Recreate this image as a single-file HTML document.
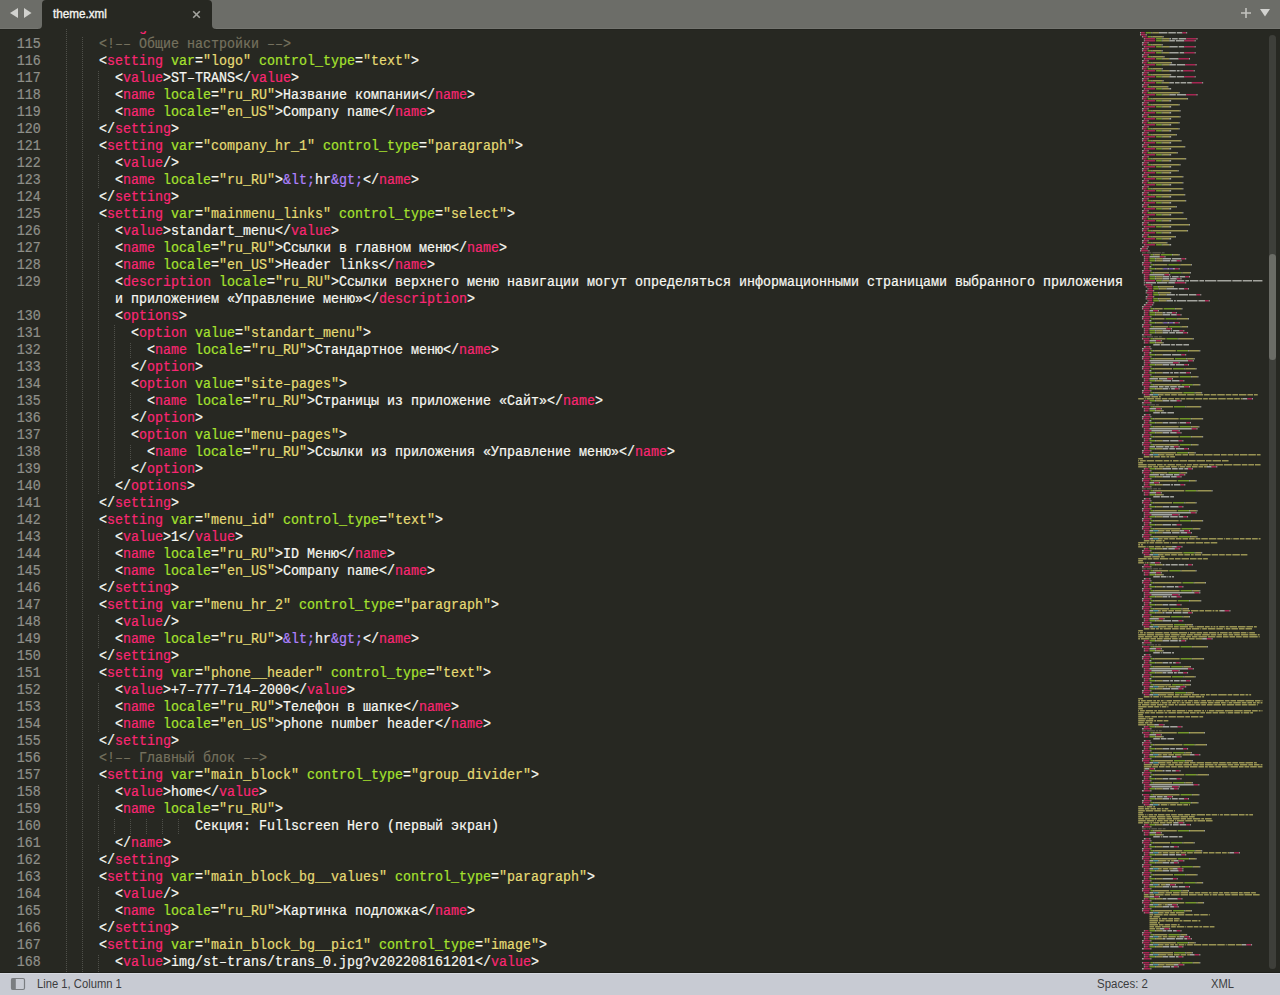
<!DOCTYPE html>
<html><head><meta charset="utf-8">
<style>
html,body{margin:0;padding:0;}
body{width:1280px;height:995px;overflow:hidden;position:relative;background:#272822;}
#tabbar{position:absolute;left:0;top:0;width:1280px;height:29px;background:#272822;}
#tbl{position:absolute;left:0;top:0;width:42px;height:29px;background:#6c6d68;border-bottom-right-radius:4px;}
#tbr{position:absolute;left:212px;top:0;width:1068px;height:29px;background:#6c6d68;border-bottom-left-radius:4px;}
#tbt{position:absolute;left:38px;top:0;width:178px;height:8px;background:#6c6d68;}
#tab{position:absolute;left:42px;top:0;width:170px;height:29px;background:#272822;border-top-left-radius:4px;border-top-right-radius:4px;}
#tabtitle{position:absolute;left:53px;top:6px;transform:scaleX(0.975);transform-origin:0 0;font:12px/17px "Liberation Sans",sans-serif;color:#f4f4f0;-webkit-text-stroke:0.35px #f4f4f0;}
#code{position:absolute;left:0;top:31px;width:1280px;height:941px;overflow:hidden;}
.ln{position:absolute;left:16px;width:24px;height:17px;text-align:right;color:#8f908a;}
.cl{position:absolute;white-space:pre;height:17px;}
.ln,.cl{font-family:"Liberation Mono",monospace;font-size:13.8px;line-height:17px;margin-top:-31px;transform:scaleX(0.9661);transform-origin:0 0;-webkit-text-stroke:0.2px currentColor;}
.ln{transform-origin:100% 0;}
#status{position:absolute;left:0;top:972px;width:1280px;height:23px;background:#c8cbd3;}
#status .t{position:absolute;top:4px;font:12px/17px "Liberation Sans",sans-serif;color:#3c3d40;}
</style></head><body>
<div id="code">
<div class="ln" style="top:19px">114</div>
<div class="cl" style="top:19px;left:66.5px"><span style="color:#f8f8f2">  &lt;</span><span style="color:#f92672">settings</span><span style="color:#f8f8f2">&gt;</span></div>
<div class="ln" style="top:36px">115</div>
<div class="cl" style="top:36px;left:66.5px"><span style="color:#f8f8f2">    </span><span style="color:#75715e">&lt;!–– Общие настройки ––&gt;</span></div>
<div class="ln" style="top:53px">116</div>
<div class="cl" style="top:53px;left:66.5px"><span style="color:#f8f8f2">    &lt;</span><span style="color:#f92672">setting</span><span style="color:#f8f8f2"> </span><span style="color:#a6e22e">var</span><span style="color:#f8f8f2">=</span><span style="color:#e6db74">"logo"</span><span style="color:#f8f8f2"> </span><span style="color:#a6e22e">control_type</span><span style="color:#f8f8f2">=</span><span style="color:#e6db74">"text"</span><span style="color:#f8f8f2">&gt;</span></div>
<div class="ln" style="top:70px">117</div>
<div class="cl" style="top:70px;left:66.5px"><span style="color:#f8f8f2">      &lt;</span><span style="color:#f92672">value</span><span style="color:#f8f8f2">&gt;ST–TRANS&lt;/</span><span style="color:#f92672">value</span><span style="color:#f8f8f2">&gt;</span></div>
<div class="ln" style="top:87px">118</div>
<div class="cl" style="top:87px;left:66.5px"><span style="color:#f8f8f2">      &lt;</span><span style="color:#f92672">name</span><span style="color:#f8f8f2"> </span><span style="color:#a6e22e">locale</span><span style="color:#f8f8f2">=</span><span style="color:#e6db74">"ru_RU"</span><span style="color:#f8f8f2">&gt;Название компании&lt;/</span><span style="color:#f92672">name</span><span style="color:#f8f8f2">&gt;</span></div>
<div class="ln" style="top:104px">119</div>
<div class="cl" style="top:104px;left:66.5px"><span style="color:#f8f8f2">      &lt;</span><span style="color:#f92672">name</span><span style="color:#f8f8f2"> </span><span style="color:#a6e22e">locale</span><span style="color:#f8f8f2">=</span><span style="color:#e6db74">"en_US"</span><span style="color:#f8f8f2">&gt;Company name&lt;/</span><span style="color:#f92672">name</span><span style="color:#f8f8f2">&gt;</span></div>
<div class="ln" style="top:121px">120</div>
<div class="cl" style="top:121px;left:66.5px"><span style="color:#f8f8f2">    &lt;/</span><span style="color:#f92672">setting</span><span style="color:#f8f8f2">&gt;</span></div>
<div class="ln" style="top:138px">121</div>
<div class="cl" style="top:138px;left:66.5px"><span style="color:#f8f8f2">    &lt;</span><span style="color:#f92672">setting</span><span style="color:#f8f8f2"> </span><span style="color:#a6e22e">var</span><span style="color:#f8f8f2">=</span><span style="color:#e6db74">"company_hr_1"</span><span style="color:#f8f8f2"> </span><span style="color:#a6e22e">control_type</span><span style="color:#f8f8f2">=</span><span style="color:#e6db74">"paragraph"</span><span style="color:#f8f8f2">&gt;</span></div>
<div class="ln" style="top:155px">122</div>
<div class="cl" style="top:155px;left:66.5px"><span style="color:#f8f8f2">      &lt;</span><span style="color:#f92672">value</span><span style="color:#f8f8f2">/&gt;</span></div>
<div class="ln" style="top:172px">123</div>
<div class="cl" style="top:172px;left:66.5px"><span style="color:#f8f8f2">      &lt;</span><span style="color:#f92672">name</span><span style="color:#f8f8f2"> </span><span style="color:#a6e22e">locale</span><span style="color:#f8f8f2">=</span><span style="color:#e6db74">"ru_RU"</span><span style="color:#f8f8f2">&gt;</span><span style="color:#ae81ff">&amp;lt;</span><span style="color:#f8f8f2">hr</span><span style="color:#ae81ff">&amp;gt;</span><span style="color:#f8f8f2">&lt;/</span><span style="color:#f92672">name</span><span style="color:#f8f8f2">&gt;</span></div>
<div class="ln" style="top:189px">124</div>
<div class="cl" style="top:189px;left:66.5px"><span style="color:#f8f8f2">    &lt;/</span><span style="color:#f92672">setting</span><span style="color:#f8f8f2">&gt;</span></div>
<div class="ln" style="top:206px">125</div>
<div class="cl" style="top:206px;left:66.5px"><span style="color:#f8f8f2">    &lt;</span><span style="color:#f92672">setting</span><span style="color:#f8f8f2"> </span><span style="color:#a6e22e">var</span><span style="color:#f8f8f2">=</span><span style="color:#e6db74">"mainmenu_links"</span><span style="color:#f8f8f2"> </span><span style="color:#a6e22e">control_type</span><span style="color:#f8f8f2">=</span><span style="color:#e6db74">"select"</span><span style="color:#f8f8f2">&gt;</span></div>
<div class="ln" style="top:223px">126</div>
<div class="cl" style="top:223px;left:66.5px"><span style="color:#f8f8f2">      &lt;</span><span style="color:#f92672">value</span><span style="color:#f8f8f2">&gt;standart_menu&lt;/</span><span style="color:#f92672">value</span><span style="color:#f8f8f2">&gt;</span></div>
<div class="ln" style="top:240px">127</div>
<div class="cl" style="top:240px;left:66.5px"><span style="color:#f8f8f2">      &lt;</span><span style="color:#f92672">name</span><span style="color:#f8f8f2"> </span><span style="color:#a6e22e">locale</span><span style="color:#f8f8f2">=</span><span style="color:#e6db74">"ru_RU"</span><span style="color:#f8f8f2">&gt;Ссылки в главном меню&lt;/</span><span style="color:#f92672">name</span><span style="color:#f8f8f2">&gt;</span></div>
<div class="ln" style="top:257px">128</div>
<div class="cl" style="top:257px;left:66.5px"><span style="color:#f8f8f2">      &lt;</span><span style="color:#f92672">name</span><span style="color:#f8f8f2"> </span><span style="color:#a6e22e">locale</span><span style="color:#f8f8f2">=</span><span style="color:#e6db74">"en_US"</span><span style="color:#f8f8f2">&gt;Header links&lt;/</span><span style="color:#f92672">name</span><span style="color:#f8f8f2">&gt;</span></div>
<div class="ln" style="top:274px">129</div>
<div class="cl" style="top:274px;left:66.5px"><span style="color:#f8f8f2">      &lt;</span><span style="color:#f92672">description</span><span style="color:#f8f8f2"> </span><span style="color:#a6e22e">locale</span><span style="color:#f8f8f2">=</span><span style="color:#e6db74">"ru_RU"</span><span style="color:#f8f8f2">&gt;Ссылки верхнего меню навигации могут определяться информационными страницами выбранного приложения </span></div>
<div class="cl" style="top:291px;left:114.5px"><span style="color:#f8f8f2">и приложением «Управление меню»&lt;/</span><span style="color:#f92672">description</span><span style="color:#f8f8f2">&gt;</span></div>
<div class="ln" style="top:308px">130</div>
<div class="cl" style="top:308px;left:66.5px"><span style="color:#f8f8f2">      &lt;</span><span style="color:#f92672">options</span><span style="color:#f8f8f2">&gt;</span></div>
<div class="ln" style="top:325px">131</div>
<div class="cl" style="top:325px;left:66.5px"><span style="color:#f8f8f2">        &lt;</span><span style="color:#f92672">option</span><span style="color:#f8f8f2"> </span><span style="color:#a6e22e">value</span><span style="color:#f8f8f2">=</span><span style="color:#e6db74">"standart_menu"</span><span style="color:#f8f8f2">&gt;</span></div>
<div class="ln" style="top:342px">132</div>
<div class="cl" style="top:342px;left:66.5px"><span style="color:#f8f8f2">          &lt;</span><span style="color:#f92672">name</span><span style="color:#f8f8f2"> </span><span style="color:#a6e22e">locale</span><span style="color:#f8f8f2">=</span><span style="color:#e6db74">"ru_RU"</span><span style="color:#f8f8f2">&gt;Стандартное меню&lt;/</span><span style="color:#f92672">name</span><span style="color:#f8f8f2">&gt;</span></div>
<div class="ln" style="top:359px">133</div>
<div class="cl" style="top:359px;left:66.5px"><span style="color:#f8f8f2">        &lt;/</span><span style="color:#f92672">option</span><span style="color:#f8f8f2">&gt;</span></div>
<div class="ln" style="top:376px">134</div>
<div class="cl" style="top:376px;left:66.5px"><span style="color:#f8f8f2">        &lt;</span><span style="color:#f92672">option</span><span style="color:#f8f8f2"> </span><span style="color:#a6e22e">value</span><span style="color:#f8f8f2">=</span><span style="color:#e6db74">"site–pages"</span><span style="color:#f8f8f2">&gt;</span></div>
<div class="ln" style="top:393px">135</div>
<div class="cl" style="top:393px;left:66.5px"><span style="color:#f8f8f2">          &lt;</span><span style="color:#f92672">name</span><span style="color:#f8f8f2"> </span><span style="color:#a6e22e">locale</span><span style="color:#f8f8f2">=</span><span style="color:#e6db74">"ru_RU"</span><span style="color:#f8f8f2">&gt;Страницы из приложение «Сайт»&lt;/</span><span style="color:#f92672">name</span><span style="color:#f8f8f2">&gt;</span></div>
<div class="ln" style="top:410px">136</div>
<div class="cl" style="top:410px;left:66.5px"><span style="color:#f8f8f2">        &lt;/</span><span style="color:#f92672">option</span><span style="color:#f8f8f2">&gt;</span></div>
<div class="ln" style="top:427px">137</div>
<div class="cl" style="top:427px;left:66.5px"><span style="color:#f8f8f2">        &lt;</span><span style="color:#f92672">option</span><span style="color:#f8f8f2"> </span><span style="color:#a6e22e">value</span><span style="color:#f8f8f2">=</span><span style="color:#e6db74">"menu–pages"</span><span style="color:#f8f8f2">&gt;</span></div>
<div class="ln" style="top:444px">138</div>
<div class="cl" style="top:444px;left:66.5px"><span style="color:#f8f8f2">          &lt;</span><span style="color:#f92672">name</span><span style="color:#f8f8f2"> </span><span style="color:#a6e22e">locale</span><span style="color:#f8f8f2">=</span><span style="color:#e6db74">"ru_RU"</span><span style="color:#f8f8f2">&gt;Ссылки из приложения «Управление меню»&lt;/</span><span style="color:#f92672">name</span><span style="color:#f8f8f2">&gt;</span></div>
<div class="ln" style="top:461px">139</div>
<div class="cl" style="top:461px;left:66.5px"><span style="color:#f8f8f2">        &lt;/</span><span style="color:#f92672">option</span><span style="color:#f8f8f2">&gt;</span></div>
<div class="ln" style="top:478px">140</div>
<div class="cl" style="top:478px;left:66.5px"><span style="color:#f8f8f2">      &lt;/</span><span style="color:#f92672">options</span><span style="color:#f8f8f2">&gt;</span></div>
<div class="ln" style="top:495px">141</div>
<div class="cl" style="top:495px;left:66.5px"><span style="color:#f8f8f2">    &lt;/</span><span style="color:#f92672">setting</span><span style="color:#f8f8f2">&gt;</span></div>
<div class="ln" style="top:512px">142</div>
<div class="cl" style="top:512px;left:66.5px"><span style="color:#f8f8f2">    &lt;</span><span style="color:#f92672">setting</span><span style="color:#f8f8f2"> </span><span style="color:#a6e22e">var</span><span style="color:#f8f8f2">=</span><span style="color:#e6db74">"menu_id"</span><span style="color:#f8f8f2"> </span><span style="color:#a6e22e">control_type</span><span style="color:#f8f8f2">=</span><span style="color:#e6db74">"text"</span><span style="color:#f8f8f2">&gt;</span></div>
<div class="ln" style="top:529px">143</div>
<div class="cl" style="top:529px;left:66.5px"><span style="color:#f8f8f2">      &lt;</span><span style="color:#f92672">value</span><span style="color:#f8f8f2">&gt;1&lt;/</span><span style="color:#f92672">value</span><span style="color:#f8f8f2">&gt;</span></div>
<div class="ln" style="top:546px">144</div>
<div class="cl" style="top:546px;left:66.5px"><span style="color:#f8f8f2">      &lt;</span><span style="color:#f92672">name</span><span style="color:#f8f8f2"> </span><span style="color:#a6e22e">locale</span><span style="color:#f8f8f2">=</span><span style="color:#e6db74">"ru_RU"</span><span style="color:#f8f8f2">&gt;ID Меню&lt;/</span><span style="color:#f92672">name</span><span style="color:#f8f8f2">&gt;</span></div>
<div class="ln" style="top:563px">145</div>
<div class="cl" style="top:563px;left:66.5px"><span style="color:#f8f8f2">      &lt;</span><span style="color:#f92672">name</span><span style="color:#f8f8f2"> </span><span style="color:#a6e22e">locale</span><span style="color:#f8f8f2">=</span><span style="color:#e6db74">"en_US"</span><span style="color:#f8f8f2">&gt;Company name&lt;/</span><span style="color:#f92672">name</span><span style="color:#f8f8f2">&gt;</span></div>
<div class="ln" style="top:580px">146</div>
<div class="cl" style="top:580px;left:66.5px"><span style="color:#f8f8f2">    &lt;/</span><span style="color:#f92672">setting</span><span style="color:#f8f8f2">&gt;</span></div>
<div class="ln" style="top:597px">147</div>
<div class="cl" style="top:597px;left:66.5px"><span style="color:#f8f8f2">    &lt;</span><span style="color:#f92672">setting</span><span style="color:#f8f8f2"> </span><span style="color:#a6e22e">var</span><span style="color:#f8f8f2">=</span><span style="color:#e6db74">"menu_hr_2"</span><span style="color:#f8f8f2"> </span><span style="color:#a6e22e">control_type</span><span style="color:#f8f8f2">=</span><span style="color:#e6db74">"paragraph"</span><span style="color:#f8f8f2">&gt;</span></div>
<div class="ln" style="top:614px">148</div>
<div class="cl" style="top:614px;left:66.5px"><span style="color:#f8f8f2">      &lt;</span><span style="color:#f92672">value</span><span style="color:#f8f8f2">/&gt;</span></div>
<div class="ln" style="top:631px">149</div>
<div class="cl" style="top:631px;left:66.5px"><span style="color:#f8f8f2">      &lt;</span><span style="color:#f92672">name</span><span style="color:#f8f8f2"> </span><span style="color:#a6e22e">locale</span><span style="color:#f8f8f2">=</span><span style="color:#e6db74">"ru_RU"</span><span style="color:#f8f8f2">&gt;</span><span style="color:#ae81ff">&amp;lt;</span><span style="color:#f8f8f2">hr</span><span style="color:#ae81ff">&amp;gt;</span><span style="color:#f8f8f2">&lt;/</span><span style="color:#f92672">name</span><span style="color:#f8f8f2">&gt;</span></div>
<div class="ln" style="top:648px">150</div>
<div class="cl" style="top:648px;left:66.5px"><span style="color:#f8f8f2">    &lt;/</span><span style="color:#f92672">setting</span><span style="color:#f8f8f2">&gt;</span></div>
<div class="ln" style="top:665px">151</div>
<div class="cl" style="top:665px;left:66.5px"><span style="color:#f8f8f2">    &lt;</span><span style="color:#f92672">setting</span><span style="color:#f8f8f2"> </span><span style="color:#a6e22e">var</span><span style="color:#f8f8f2">=</span><span style="color:#e6db74">"phone__header"</span><span style="color:#f8f8f2"> </span><span style="color:#a6e22e">control_type</span><span style="color:#f8f8f2">=</span><span style="color:#e6db74">"text"</span><span style="color:#f8f8f2">&gt;</span></div>
<div class="ln" style="top:682px">152</div>
<div class="cl" style="top:682px;left:66.5px"><span style="color:#f8f8f2">      &lt;</span><span style="color:#f92672">value</span><span style="color:#f8f8f2">&gt;+7–777–714–2000&lt;/</span><span style="color:#f92672">value</span><span style="color:#f8f8f2">&gt;</span></div>
<div class="ln" style="top:699px">153</div>
<div class="cl" style="top:699px;left:66.5px"><span style="color:#f8f8f2">      &lt;</span><span style="color:#f92672">name</span><span style="color:#f8f8f2"> </span><span style="color:#a6e22e">locale</span><span style="color:#f8f8f2">=</span><span style="color:#e6db74">"ru_RU"</span><span style="color:#f8f8f2">&gt;Телефон в шапке&lt;/</span><span style="color:#f92672">name</span><span style="color:#f8f8f2">&gt;</span></div>
<div class="ln" style="top:716px">154</div>
<div class="cl" style="top:716px;left:66.5px"><span style="color:#f8f8f2">      &lt;</span><span style="color:#f92672">name</span><span style="color:#f8f8f2"> </span><span style="color:#a6e22e">locale</span><span style="color:#f8f8f2">=</span><span style="color:#e6db74">"en_US"</span><span style="color:#f8f8f2">&gt;phone number header&lt;/</span><span style="color:#f92672">name</span><span style="color:#f8f8f2">&gt;</span></div>
<div class="ln" style="top:733px">155</div>
<div class="cl" style="top:733px;left:66.5px"><span style="color:#f8f8f2">    &lt;/</span><span style="color:#f92672">setting</span><span style="color:#f8f8f2">&gt;</span></div>
<div class="ln" style="top:750px">156</div>
<div class="cl" style="top:750px;left:66.5px"><span style="color:#f8f8f2">    </span><span style="color:#75715e">&lt;!–– Главный блок ––&gt;</span></div>
<div class="ln" style="top:767px">157</div>
<div class="cl" style="top:767px;left:66.5px"><span style="color:#f8f8f2">    &lt;</span><span style="color:#f92672">setting</span><span style="color:#f8f8f2"> </span><span style="color:#a6e22e">var</span><span style="color:#f8f8f2">=</span><span style="color:#e6db74">"main_block"</span><span style="color:#f8f8f2"> </span><span style="color:#a6e22e">control_type</span><span style="color:#f8f8f2">=</span><span style="color:#e6db74">"group_divider"</span><span style="color:#f8f8f2">&gt;</span></div>
<div class="ln" style="top:784px">158</div>
<div class="cl" style="top:784px;left:66.5px"><span style="color:#f8f8f2">      &lt;</span><span style="color:#f92672">value</span><span style="color:#f8f8f2">&gt;home&lt;/</span><span style="color:#f92672">value</span><span style="color:#f8f8f2">&gt;</span></div>
<div class="ln" style="top:801px">159</div>
<div class="cl" style="top:801px;left:66.5px"><span style="color:#f8f8f2">      &lt;</span><span style="color:#f92672">name</span><span style="color:#f8f8f2"> </span><span style="color:#a6e22e">locale</span><span style="color:#f8f8f2">=</span><span style="color:#e6db74">"ru_RU"</span><span style="color:#f8f8f2">&gt;</span></div>
<div class="ln" style="top:818px">160</div>
<div class="cl" style="top:818px;left:66.5px"><span style="color:#f8f8f2">                Секция: Fullscreen Hero (первый экран)</span></div>
<div class="ln" style="top:835px">161</div>
<div class="cl" style="top:835px;left:66.5px"><span style="color:#f8f8f2">      &lt;/</span><span style="color:#f92672">name</span><span style="color:#f8f8f2">&gt;</span></div>
<div class="ln" style="top:852px">162</div>
<div class="cl" style="top:852px;left:66.5px"><span style="color:#f8f8f2">    &lt;/</span><span style="color:#f92672">setting</span><span style="color:#f8f8f2">&gt;</span></div>
<div class="ln" style="top:869px">163</div>
<div class="cl" style="top:869px;left:66.5px"><span style="color:#f8f8f2">    &lt;</span><span style="color:#f92672">setting</span><span style="color:#f8f8f2"> </span><span style="color:#a6e22e">var</span><span style="color:#f8f8f2">=</span><span style="color:#e6db74">"main_block_bg__values"</span><span style="color:#f8f8f2"> </span><span style="color:#a6e22e">control_type</span><span style="color:#f8f8f2">=</span><span style="color:#e6db74">"paragraph"</span><span style="color:#f8f8f2">&gt;</span></div>
<div class="ln" style="top:886px">164</div>
<div class="cl" style="top:886px;left:66.5px"><span style="color:#f8f8f2">      &lt;</span><span style="color:#f92672">value</span><span style="color:#f8f8f2">/&gt;</span></div>
<div class="ln" style="top:903px">165</div>
<div class="cl" style="top:903px;left:66.5px"><span style="color:#f8f8f2">      &lt;</span><span style="color:#f92672">name</span><span style="color:#f8f8f2"> </span><span style="color:#a6e22e">locale</span><span style="color:#f8f8f2">=</span><span style="color:#e6db74">"ru_RU"</span><span style="color:#f8f8f2">&gt;Картинка подложка&lt;/</span><span style="color:#f92672">name</span><span style="color:#f8f8f2">&gt;</span></div>
<div class="ln" style="top:920px">166</div>
<div class="cl" style="top:920px;left:66.5px"><span style="color:#f8f8f2">    &lt;/</span><span style="color:#f92672">setting</span><span style="color:#f8f8f2">&gt;</span></div>
<div class="ln" style="top:937px">167</div>
<div class="cl" style="top:937px;left:66.5px"><span style="color:#f8f8f2">    &lt;</span><span style="color:#f92672">setting</span><span style="color:#f8f8f2"> </span><span style="color:#a6e22e">var</span><span style="color:#f8f8f2">=</span><span style="color:#e6db74">"main_block_bg__pic1"</span><span style="color:#f8f8f2"> </span><span style="color:#a6e22e">control_type</span><span style="color:#f8f8f2">=</span><span style="color:#e6db74">"image"</span><span style="color:#f8f8f2">&gt;</span></div>
<div class="ln" style="top:954px">168</div>
<div class="cl" style="top:954px;left:66.5px"><span style="color:#f8f8f2">      &lt;</span><span style="color:#f92672">value</span><span style="color:#f8f8f2">&gt;img/st–trans/trans_0.jpg?v202208161201&lt;/</span><span style="color:#f92672">value</span><span style="color:#f8f8f2">&gt;</span></div>
<div class="ln" style="top:971px">169</div>
<div class="cl" style="top:971px;left:66.5px"><span style="color:#f8f8f2">      &lt;</span><span style="color:#f92672">value2</span><span style="color:#f8f8f2">&gt;img/st–trans/logo.png&lt;/</span><span style="color:#f92672">value2</span><span style="color:#f8f8f2">&gt;</span></div>

</div>
<svg width="1280" height="972" style="position:absolute;left:0;top:0">
<defs><pattern id="dots" width="1" height="2" patternUnits="userSpaceOnUse"><rect x="0" y="1" width="1" height="1" fill="#4f504a"/></pattern></defs>
<g fill="url(#dots)">
<rect x="66" y="19" width="1" height="17"/>
<rect x="66" y="36" width="1" height="17"/>
<rect x="82" y="36" width="1" height="17"/>
<rect x="66" y="53" width="1" height="17"/>
<rect x="82" y="53" width="1" height="17"/>
<rect x="66" y="70" width="1" height="17"/>
<rect x="82" y="70" width="1" height="17"/>
<rect x="98" y="70" width="1" height="17"/>
<rect x="66" y="87" width="1" height="17"/>
<rect x="82" y="87" width="1" height="17"/>
<rect x="98" y="87" width="1" height="17"/>
<rect x="66" y="104" width="1" height="17"/>
<rect x="82" y="104" width="1" height="17"/>
<rect x="98" y="104" width="1" height="17"/>
<rect x="66" y="121" width="1" height="17"/>
<rect x="82" y="121" width="1" height="17"/>
<rect x="66" y="138" width="1" height="17"/>
<rect x="82" y="138" width="1" height="17"/>
<rect x="66" y="155" width="1" height="17"/>
<rect x="82" y="155" width="1" height="17"/>
<rect x="98" y="155" width="1" height="17"/>
<rect x="66" y="172" width="1" height="17"/>
<rect x="82" y="172" width="1" height="17"/>
<rect x="98" y="172" width="1" height="17"/>
<rect x="66" y="189" width="1" height="17"/>
<rect x="82" y="189" width="1" height="17"/>
<rect x="66" y="206" width="1" height="17"/>
<rect x="82" y="206" width="1" height="17"/>
<rect x="66" y="223" width="1" height="17"/>
<rect x="82" y="223" width="1" height="17"/>
<rect x="98" y="223" width="1" height="17"/>
<rect x="66" y="240" width="1" height="17"/>
<rect x="82" y="240" width="1" height="17"/>
<rect x="98" y="240" width="1" height="17"/>
<rect x="66" y="257" width="1" height="17"/>
<rect x="82" y="257" width="1" height="17"/>
<rect x="98" y="257" width="1" height="17"/>
<rect x="66" y="274" width="1" height="17"/>
<rect x="82" y="274" width="1" height="17"/>
<rect x="98" y="274" width="1" height="17"/>
<rect x="66" y="291" width="1" height="17"/>
<rect x="82" y="291" width="1" height="17"/>
<rect x="98" y="291" width="1" height="17"/>
<rect x="66" y="308" width="1" height="17"/>
<rect x="82" y="308" width="1" height="17"/>
<rect x="98" y="308" width="1" height="17"/>
<rect x="66" y="325" width="1" height="17"/>
<rect x="82" y="325" width="1" height="17"/>
<rect x="98" y="325" width="1" height="17"/>
<rect x="114" y="325" width="1" height="17"/>
<rect x="66" y="342" width="1" height="17"/>
<rect x="82" y="342" width="1" height="17"/>
<rect x="98" y="342" width="1" height="17"/>
<rect x="114" y="342" width="1" height="17"/>
<rect x="130" y="342" width="1" height="17"/>
<rect x="66" y="359" width="1" height="17"/>
<rect x="82" y="359" width="1" height="17"/>
<rect x="98" y="359" width="1" height="17"/>
<rect x="114" y="359" width="1" height="17"/>
<rect x="66" y="376" width="1" height="17"/>
<rect x="82" y="376" width="1" height="17"/>
<rect x="98" y="376" width="1" height="17"/>
<rect x="114" y="376" width="1" height="17"/>
<rect x="66" y="393" width="1" height="17"/>
<rect x="82" y="393" width="1" height="17"/>
<rect x="98" y="393" width="1" height="17"/>
<rect x="114" y="393" width="1" height="17"/>
<rect x="130" y="393" width="1" height="17"/>
<rect x="66" y="410" width="1" height="17"/>
<rect x="82" y="410" width="1" height="17"/>
<rect x="98" y="410" width="1" height="17"/>
<rect x="114" y="410" width="1" height="17"/>
<rect x="66" y="427" width="1" height="17"/>
<rect x="82" y="427" width="1" height="17"/>
<rect x="98" y="427" width="1" height="17"/>
<rect x="114" y="427" width="1" height="17"/>
<rect x="66" y="444" width="1" height="17"/>
<rect x="82" y="444" width="1" height="17"/>
<rect x="98" y="444" width="1" height="17"/>
<rect x="114" y="444" width="1" height="17"/>
<rect x="130" y="444" width="1" height="17"/>
<rect x="66" y="461" width="1" height="17"/>
<rect x="82" y="461" width="1" height="17"/>
<rect x="98" y="461" width="1" height="17"/>
<rect x="114" y="461" width="1" height="17"/>
<rect x="66" y="478" width="1" height="17"/>
<rect x="82" y="478" width="1" height="17"/>
<rect x="98" y="478" width="1" height="17"/>
<rect x="66" y="495" width="1" height="17"/>
<rect x="82" y="495" width="1" height="17"/>
<rect x="66" y="512" width="1" height="17"/>
<rect x="82" y="512" width="1" height="17"/>
<rect x="66" y="529" width="1" height="17"/>
<rect x="82" y="529" width="1" height="17"/>
<rect x="98" y="529" width="1" height="17"/>
<rect x="66" y="546" width="1" height="17"/>
<rect x="82" y="546" width="1" height="17"/>
<rect x="98" y="546" width="1" height="17"/>
<rect x="66" y="563" width="1" height="17"/>
<rect x="82" y="563" width="1" height="17"/>
<rect x="98" y="563" width="1" height="17"/>
<rect x="66" y="580" width="1" height="17"/>
<rect x="82" y="580" width="1" height="17"/>
<rect x="66" y="597" width="1" height="17"/>
<rect x="82" y="597" width="1" height="17"/>
<rect x="66" y="614" width="1" height="17"/>
<rect x="82" y="614" width="1" height="17"/>
<rect x="98" y="614" width="1" height="17"/>
<rect x="66" y="631" width="1" height="17"/>
<rect x="82" y="631" width="1" height="17"/>
<rect x="98" y="631" width="1" height="17"/>
<rect x="66" y="648" width="1" height="17"/>
<rect x="82" y="648" width="1" height="17"/>
<rect x="66" y="665" width="1" height="17"/>
<rect x="82" y="665" width="1" height="17"/>
<rect x="66" y="682" width="1" height="17"/>
<rect x="82" y="682" width="1" height="17"/>
<rect x="98" y="682" width="1" height="17"/>
<rect x="66" y="699" width="1" height="17"/>
<rect x="82" y="699" width="1" height="17"/>
<rect x="98" y="699" width="1" height="17"/>
<rect x="66" y="716" width="1" height="17"/>
<rect x="82" y="716" width="1" height="17"/>
<rect x="98" y="716" width="1" height="17"/>
<rect x="66" y="733" width="1" height="17"/>
<rect x="82" y="733" width="1" height="17"/>
<rect x="66" y="750" width="1" height="17"/>
<rect x="82" y="750" width="1" height="17"/>
<rect x="66" y="767" width="1" height="17"/>
<rect x="82" y="767" width="1" height="17"/>
<rect x="66" y="784" width="1" height="17"/>
<rect x="82" y="784" width="1" height="17"/>
<rect x="98" y="784" width="1" height="17"/>
<rect x="66" y="801" width="1" height="17"/>
<rect x="82" y="801" width="1" height="17"/>
<rect x="98" y="801" width="1" height="17"/>
<rect x="66" y="818" width="1" height="17"/>
<rect x="82" y="818" width="1" height="17"/>
<rect x="98" y="818" width="1" height="17"/>
<rect x="114" y="818" width="1" height="17"/>
<rect x="130" y="818" width="1" height="17"/>
<rect x="146" y="818" width="1" height="17"/>
<rect x="162" y="818" width="1" height="17"/>
<rect x="178" y="818" width="1" height="17"/>
<rect x="66" y="835" width="1" height="17"/>
<rect x="82" y="835" width="1" height="17"/>
<rect x="98" y="835" width="1" height="17"/>
<rect x="66" y="852" width="1" height="17"/>
<rect x="82" y="852" width="1" height="17"/>
<rect x="66" y="869" width="1" height="17"/>
<rect x="82" y="869" width="1" height="17"/>
<rect x="66" y="886" width="1" height="17"/>
<rect x="82" y="886" width="1" height="17"/>
<rect x="98" y="886" width="1" height="17"/>
<rect x="66" y="903" width="1" height="17"/>
<rect x="82" y="903" width="1" height="17"/>
<rect x="98" y="903" width="1" height="17"/>
<rect x="66" y="920" width="1" height="17"/>
<rect x="82" y="920" width="1" height="17"/>
<rect x="66" y="937" width="1" height="17"/>
<rect x="82" y="937" width="1" height="17"/>
<rect x="66" y="954" width="1" height="17"/>
<rect x="82" y="954" width="1" height="17"/>
<rect x="98" y="954" width="1" height="17"/>
<rect x="66" y="971" width="1" height="17"/>
<rect x="82" y="971" width="1" height="17"/>
<rect x="98" y="971" width="1" height="17"/>
</g>
<g opacity="0.6">
<rect x="1140.08" y="32.0" width="0.94" height="1.5" fill="#f8f8f2"/>
<rect x="1141.02" y="32.0" width="3.76" height="1.5" fill="#f92672"/>
<rect x="1145.73" y="32.0" width="5.65" height="1.5" fill="#a6e22e"/>
<rect x="1151.38" y="32.0" width="0.94" height="1.5" fill="#f8f8f2"/>
<rect x="1152.32" y="32.0" width="6.59" height="1.5" fill="#e6db74"/>
<rect x="1158.91" y="32.0" width="8.47" height="1.5" fill="#f8f8f2"/>
<rect x="1168.32" y="32.0" width="7.53" height="1.5" fill="#f8f8f2"/>
<rect x="1176.79" y="32.0" width="5.65" height="1.5" fill="#f8f8f2"/>
<rect x="1182.44" y="32.0" width="3.76" height="1.5" fill="#f92672"/>
<rect x="1186.20" y="32.0" width="0.94" height="1.5" fill="#f8f8f2"/>
<rect x="1140.08" y="34.0" width="0.94" height="1.5" fill="#f8f8f2"/>
<rect x="1141.02" y="34.0" width="4.71" height="1.5" fill="#f92672"/>
<rect x="1145.73" y="34.0" width="0.94" height="1.5" fill="#f8f8f2"/>
<rect x="1141.96" y="36.0" width="0.94" height="1.5" fill="#f8f8f2"/>
<rect x="1142.91" y="36.0" width="3.76" height="1.5" fill="#f92672"/>
<rect x="1147.61" y="36.0" width="3.76" height="1.5" fill="#a6e22e"/>
<rect x="1151.38" y="36.0" width="0.94" height="1.5" fill="#f8f8f2"/>
<rect x="1152.32" y="36.0" width="10.35" height="1.5" fill="#e6db74"/>
<rect x="1162.67" y="36.0" width="0.94" height="1.5" fill="#f8f8f2"/>
<rect x="1143.85" y="38.0" width="0.94" height="1.5" fill="#f8f8f2"/>
<rect x="1144.79" y="38.0" width="10.35" height="1.5" fill="#f92672"/>
<rect x="1156.08" y="38.0" width="5.65" height="1.5" fill="#a6e22e"/>
<rect x="1161.73" y="38.0" width="0.94" height="1.5" fill="#f8f8f2"/>
<rect x="1162.67" y="38.0" width="6.59" height="1.5" fill="#e6db74"/>
<rect x="1169.26" y="38.0" width="1.88" height="1.5" fill="#f8f8f2"/>
<rect x="1172.08" y="38.0" width="5.65" height="1.5" fill="#f8f8f2"/>
<rect x="1178.67" y="38.0" width="7.53" height="1.5" fill="#f8f8f2"/>
<rect x="1186.20" y="38.0" width="10.35" height="1.5" fill="#f92672"/>
<rect x="1196.55" y="38.0" width="0.94" height="1.5" fill="#f8f8f2"/>
<rect x="1143.85" y="40.0" width="0.94" height="1.5" fill="#f8f8f2"/>
<rect x="1144.79" y="40.0" width="10.35" height="1.5" fill="#f92672"/>
<rect x="1156.08" y="40.0" width="5.65" height="1.5" fill="#a6e22e"/>
<rect x="1161.73" y="40.0" width="0.94" height="1.5" fill="#f8f8f2"/>
<rect x="1162.67" y="40.0" width="6.59" height="1.5" fill="#e6db74"/>
<rect x="1169.26" y="40.0" width="5.65" height="1.5" fill="#f8f8f2"/>
<rect x="1175.85" y="40.0" width="8.47" height="1.5" fill="#f8f8f2"/>
<rect x="1184.32" y="40.0" width="10.35" height="1.5" fill="#f92672"/>
<rect x="1194.67" y="40.0" width="0.94" height="1.5" fill="#f8f8f2"/>
<rect x="1141.96" y="42.0" width="1.88" height="1.5" fill="#f8f8f2"/>
<rect x="1143.85" y="42.0" width="3.76" height="1.5" fill="#f92672"/>
<rect x="1147.61" y="42.0" width="0.94" height="1.5" fill="#f8f8f2"/>
<rect x="1141.96" y="44.0" width="0.94" height="1.5" fill="#f8f8f2"/>
<rect x="1142.91" y="44.0" width="3.76" height="1.5" fill="#f92672"/>
<rect x="1147.61" y="44.0" width="3.76" height="1.5" fill="#a6e22e"/>
<rect x="1151.38" y="44.0" width="0.94" height="1.5" fill="#f8f8f2"/>
<rect x="1152.32" y="44.0" width="9.41" height="1.5" fill="#e6db74"/>
<rect x="1161.73" y="44.0" width="0.94" height="1.5" fill="#f8f8f2"/>
<rect x="1143.85" y="46.0" width="0.94" height="1.5" fill="#f8f8f2"/>
<rect x="1144.79" y="46.0" width="10.35" height="1.5" fill="#f92672"/>
<rect x="1156.08" y="46.0" width="5.65" height="1.5" fill="#a6e22e"/>
<rect x="1161.73" y="46.0" width="0.94" height="1.5" fill="#f8f8f2"/>
<rect x="1162.67" y="46.0" width="6.59" height="1.5" fill="#e6db74"/>
<rect x="1169.26" y="46.0" width="8.47" height="1.5" fill="#f8f8f2"/>
<rect x="1178.67" y="46.0" width="5.65" height="1.5" fill="#f8f8f2"/>
<rect x="1184.32" y="46.0" width="10.35" height="1.5" fill="#f92672"/>
<rect x="1194.67" y="46.0" width="0.94" height="1.5" fill="#f8f8f2"/>
<rect x="1141.96" y="48.0" width="1.88" height="1.5" fill="#f8f8f2"/>
<rect x="1143.85" y="48.0" width="3.76" height="1.5" fill="#f92672"/>
<rect x="1147.61" y="48.0" width="0.94" height="1.5" fill="#f8f8f2"/>
<rect x="1141.96" y="50.0" width="0.94" height="1.5" fill="#f8f8f2"/>
<rect x="1142.91" y="50.0" width="3.76" height="1.5" fill="#f92672"/>
<rect x="1147.61" y="50.0" width="3.76" height="1.5" fill="#a6e22e"/>
<rect x="1151.38" y="50.0" width="0.94" height="1.5" fill="#f8f8f2"/>
<rect x="1152.32" y="50.0" width="9.41" height="1.5" fill="#e6db74"/>
<rect x="1161.73" y="50.0" width="0.94" height="1.5" fill="#f8f8f2"/>
<rect x="1143.85" y="52.0" width="0.94" height="1.5" fill="#f8f8f2"/>
<rect x="1144.79" y="52.0" width="10.35" height="1.5" fill="#f92672"/>
<rect x="1156.08" y="52.0" width="5.65" height="1.5" fill="#a6e22e"/>
<rect x="1161.73" y="52.0" width="0.94" height="1.5" fill="#f8f8f2"/>
<rect x="1162.67" y="52.0" width="6.59" height="1.5" fill="#e6db74"/>
<rect x="1169.26" y="52.0" width="9.41" height="1.5" fill="#f8f8f2"/>
<rect x="1179.61" y="52.0" width="4.71" height="1.5" fill="#f8f8f2"/>
<rect x="1184.32" y="52.0" width="10.35" height="1.5" fill="#f92672"/>
<rect x="1194.67" y="52.0" width="0.94" height="1.5" fill="#f8f8f2"/>
<rect x="1141.96" y="54.0" width="1.88" height="1.5" fill="#f8f8f2"/>
<rect x="1143.85" y="54.0" width="3.76" height="1.5" fill="#f92672"/>
<rect x="1147.61" y="54.0" width="0.94" height="1.5" fill="#f8f8f2"/>
<rect x="1141.96" y="56.0" width="0.94" height="1.5" fill="#f8f8f2"/>
<rect x="1142.91" y="56.0" width="3.76" height="1.5" fill="#f92672"/>
<rect x="1147.61" y="56.0" width="3.76" height="1.5" fill="#a6e22e"/>
<rect x="1151.38" y="56.0" width="0.94" height="1.5" fill="#f8f8f2"/>
<rect x="1152.32" y="56.0" width="11.29" height="1.5" fill="#e6db74"/>
<rect x="1163.61" y="56.0" width="0.94" height="1.5" fill="#f8f8f2"/>
<rect x="1143.85" y="58.0" width="0.94" height="1.5" fill="#f8f8f2"/>
<rect x="1144.79" y="58.0" width="10.35" height="1.5" fill="#f92672"/>
<rect x="1156.08" y="58.0" width="5.65" height="1.5" fill="#a6e22e"/>
<rect x="1161.73" y="58.0" width="0.94" height="1.5" fill="#f8f8f2"/>
<rect x="1162.67" y="58.0" width="6.59" height="1.5" fill="#e6db74"/>
<rect x="1169.26" y="58.0" width="9.41" height="1.5" fill="#f8f8f2"/>
<rect x="1178.67" y="58.0" width="10.35" height="1.5" fill="#f92672"/>
<rect x="1189.02" y="58.0" width="0.94" height="1.5" fill="#f8f8f2"/>
<rect x="1141.96" y="60.0" width="1.88" height="1.5" fill="#f8f8f2"/>
<rect x="1143.85" y="60.0" width="3.76" height="1.5" fill="#f92672"/>
<rect x="1147.61" y="60.0" width="0.94" height="1.5" fill="#f8f8f2"/>
<rect x="1141.96" y="62.0" width="0.94" height="1.5" fill="#f8f8f2"/>
<rect x="1142.91" y="62.0" width="3.76" height="1.5" fill="#f92672"/>
<rect x="1147.61" y="62.0" width="3.76" height="1.5" fill="#a6e22e"/>
<rect x="1151.38" y="62.0" width="0.94" height="1.5" fill="#f8f8f2"/>
<rect x="1152.32" y="62.0" width="18.82" height="1.5" fill="#e6db74"/>
<rect x="1171.14" y="62.0" width="0.94" height="1.5" fill="#f8f8f2"/>
<rect x="1143.85" y="64.0" width="0.94" height="1.5" fill="#f8f8f2"/>
<rect x="1144.79" y="64.0" width="10.35" height="1.5" fill="#f92672"/>
<rect x="1156.08" y="64.0" width="5.65" height="1.5" fill="#a6e22e"/>
<rect x="1161.73" y="64.0" width="0.94" height="1.5" fill="#f8f8f2"/>
<rect x="1162.67" y="64.0" width="6.59" height="1.5" fill="#e6db74"/>
<rect x="1169.26" y="64.0" width="6.59" height="1.5" fill="#f8f8f2"/>
<rect x="1176.79" y="64.0" width="8.47" height="1.5" fill="#f8f8f2"/>
<rect x="1185.26" y="64.0" width="10.35" height="1.5" fill="#f92672"/>
<rect x="1195.61" y="64.0" width="0.94" height="1.5" fill="#f8f8f2"/>
<rect x="1141.96" y="66.0" width="1.88" height="1.5" fill="#f8f8f2"/>
<rect x="1143.85" y="66.0" width="3.76" height="1.5" fill="#f92672"/>
<rect x="1147.61" y="66.0" width="0.94" height="1.5" fill="#f8f8f2"/>
<rect x="1141.96" y="68.0" width="0.94" height="1.5" fill="#f8f8f2"/>
<rect x="1142.91" y="68.0" width="3.76" height="1.5" fill="#f92672"/>
<rect x="1147.61" y="68.0" width="3.76" height="1.5" fill="#a6e22e"/>
<rect x="1151.38" y="68.0" width="0.94" height="1.5" fill="#f8f8f2"/>
<rect x="1152.32" y="68.0" width="9.41" height="1.5" fill="#e6db74"/>
<rect x="1161.73" y="68.0" width="0.94" height="1.5" fill="#f8f8f2"/>
<rect x="1143.85" y="70.0" width="0.94" height="1.5" fill="#f8f8f2"/>
<rect x="1144.79" y="70.0" width="10.35" height="1.5" fill="#f92672"/>
<rect x="1156.08" y="70.0" width="5.65" height="1.5" fill="#a6e22e"/>
<rect x="1161.73" y="70.0" width="0.94" height="1.5" fill="#f8f8f2"/>
<rect x="1162.67" y="70.0" width="6.59" height="1.5" fill="#e6db74"/>
<rect x="1169.26" y="70.0" width="6.59" height="1.5" fill="#f8f8f2"/>
<rect x="1176.79" y="70.0" width="2.82" height="1.5" fill="#f8f8f2"/>
<rect x="1180.55" y="70.0" width="2.82" height="1.5" fill="#f8f8f2"/>
<rect x="1183.38" y="70.0" width="10.35" height="1.5" fill="#f92672"/>
<rect x="1193.73" y="70.0" width="0.94" height="1.5" fill="#f8f8f2"/>
<rect x="1141.96" y="72.0" width="1.88" height="1.5" fill="#f8f8f2"/>
<rect x="1143.85" y="72.0" width="3.76" height="1.5" fill="#f92672"/>
<rect x="1147.61" y="72.0" width="0.94" height="1.5" fill="#f8f8f2"/>
<rect x="1141.96" y="74.0" width="0.94" height="1.5" fill="#f8f8f2"/>
<rect x="1142.91" y="74.0" width="3.76" height="1.5" fill="#f92672"/>
<rect x="1147.61" y="74.0" width="3.76" height="1.5" fill="#a6e22e"/>
<rect x="1151.38" y="74.0" width="0.94" height="1.5" fill="#f8f8f2"/>
<rect x="1152.32" y="74.0" width="17.88" height="1.5" fill="#e6db74"/>
<rect x="1170.20" y="74.0" width="0.94" height="1.5" fill="#f8f8f2"/>
<rect x="1143.85" y="76.0" width="0.94" height="1.5" fill="#f8f8f2"/>
<rect x="1144.79" y="76.0" width="10.35" height="1.5" fill="#f92672"/>
<rect x="1156.08" y="76.0" width="5.65" height="1.5" fill="#a6e22e"/>
<rect x="1161.73" y="76.0" width="0.94" height="1.5" fill="#f8f8f2"/>
<rect x="1162.67" y="76.0" width="6.59" height="1.5" fill="#e6db74"/>
<rect x="1169.26" y="76.0" width="6.59" height="1.5" fill="#f8f8f2"/>
<rect x="1176.79" y="76.0" width="7.53" height="1.5" fill="#f8f8f2"/>
<rect x="1184.32" y="76.0" width="10.35" height="1.5" fill="#f92672"/>
<rect x="1194.67" y="76.0" width="0.94" height="1.5" fill="#f8f8f2"/>
<rect x="1141.96" y="78.0" width="1.88" height="1.5" fill="#f8f8f2"/>
<rect x="1143.85" y="78.0" width="3.76" height="1.5" fill="#f92672"/>
<rect x="1147.61" y="78.0" width="0.94" height="1.5" fill="#f8f8f2"/>
<rect x="1141.96" y="80.0" width="0.94" height="1.5" fill="#f8f8f2"/>
<rect x="1142.91" y="80.0" width="3.76" height="1.5" fill="#f92672"/>
<rect x="1147.61" y="80.0" width="3.76" height="1.5" fill="#a6e22e"/>
<rect x="1151.38" y="80.0" width="0.94" height="1.5" fill="#f8f8f2"/>
<rect x="1152.32" y="80.0" width="10.35" height="1.5" fill="#e6db74"/>
<rect x="1162.67" y="80.0" width="0.94" height="1.5" fill="#f8f8f2"/>
<rect x="1143.85" y="82.0" width="0.94" height="1.5" fill="#f8f8f2"/>
<rect x="1144.79" y="82.0" width="10.35" height="1.5" fill="#f92672"/>
<rect x="1156.08" y="82.0" width="5.65" height="1.5" fill="#a6e22e"/>
<rect x="1161.73" y="82.0" width="0.94" height="1.5" fill="#f8f8f2"/>
<rect x="1162.67" y="82.0" width="6.59" height="1.5" fill="#e6db74"/>
<rect x="1169.26" y="82.0" width="4.71" height="1.5" fill="#f8f8f2"/>
<rect x="1174.91" y="82.0" width="4.71" height="1.5" fill="#f8f8f2"/>
<rect x="1180.55" y="82.0" width="5.65" height="1.5" fill="#f8f8f2"/>
<rect x="1187.14" y="82.0" width="4.71" height="1.5" fill="#f8f8f2"/>
<rect x="1191.85" y="82.0" width="10.35" height="1.5" fill="#f92672"/>
<rect x="1202.20" y="82.0" width="0.94" height="1.5" fill="#f8f8f2"/>
<rect x="1141.96" y="84.0" width="1.88" height="1.5" fill="#f8f8f2"/>
<rect x="1143.85" y="84.0" width="3.76" height="1.5" fill="#f92672"/>
<rect x="1147.61" y="84.0" width="0.94" height="1.5" fill="#f8f8f2"/>
<rect x="1141.96" y="86.0" width="0.94" height="1.5" fill="#f8f8f2"/>
<rect x="1142.91" y="86.0" width="3.76" height="1.5" fill="#f92672"/>
<rect x="1147.61" y="86.0" width="3.76" height="1.5" fill="#a6e22e"/>
<rect x="1151.38" y="86.0" width="0.94" height="1.5" fill="#f8f8f2"/>
<rect x="1152.32" y="86.0" width="15.06" height="1.5" fill="#e6db74"/>
<rect x="1167.38" y="86.0" width="0.94" height="1.5" fill="#f8f8f2"/>
<rect x="1143.85" y="88.0" width="0.94" height="1.5" fill="#f8f8f2"/>
<rect x="1144.79" y="88.0" width="10.35" height="1.5" fill="#f92672"/>
<rect x="1156.08" y="88.0" width="5.65" height="1.5" fill="#a6e22e"/>
<rect x="1161.73" y="88.0" width="0.94" height="1.5" fill="#f8f8f2"/>
<rect x="1162.67" y="88.0" width="6.59" height="1.5" fill="#e6db74"/>
<rect x="1169.26" y="88.0" width="1.88" height="1.5" fill="#f8f8f2"/>
<rect x="1141.96" y="90.0" width="1.88" height="1.5" fill="#f8f8f2"/>
<rect x="1143.85" y="90.0" width="3.76" height="1.5" fill="#f92672"/>
<rect x="1147.61" y="90.0" width="0.94" height="1.5" fill="#f8f8f2"/>
<rect x="1141.96" y="92.0" width="0.94" height="1.5" fill="#f8f8f2"/>
<rect x="1142.91" y="92.0" width="3.76" height="1.5" fill="#f92672"/>
<rect x="1147.61" y="92.0" width="3.76" height="1.5" fill="#a6e22e"/>
<rect x="1151.38" y="92.0" width="0.94" height="1.5" fill="#f8f8f2"/>
<rect x="1152.32" y="92.0" width="26.35" height="1.5" fill="#e6db74"/>
<rect x="1178.67" y="92.0" width="0.94" height="1.5" fill="#f8f8f2"/>
<rect x="1143.85" y="94.0" width="0.94" height="1.5" fill="#f8f8f2"/>
<rect x="1144.79" y="94.0" width="10.35" height="1.5" fill="#f92672"/>
<rect x="1156.08" y="94.0" width="5.65" height="1.5" fill="#a6e22e"/>
<rect x="1161.73" y="94.0" width="0.94" height="1.5" fill="#f8f8f2"/>
<rect x="1162.67" y="94.0" width="6.59" height="1.5" fill="#e6db74"/>
<rect x="1169.26" y="94.0" width="6.59" height="1.5" fill="#f8f8f2"/>
<rect x="1176.79" y="94.0" width="9.41" height="1.5" fill="#f8f8f2"/>
<rect x="1186.20" y="94.0" width="10.35" height="1.5" fill="#f92672"/>
<rect x="1196.55" y="94.0" width="0.94" height="1.5" fill="#f8f8f2"/>
<rect x="1141.96" y="96.0" width="1.88" height="1.5" fill="#f8f8f2"/>
<rect x="1143.85" y="96.0" width="3.76" height="1.5" fill="#f92672"/>
<rect x="1147.61" y="96.0" width="0.94" height="1.5" fill="#f8f8f2"/>
<rect x="1141.96" y="98.0" width="0.94" height="1.5" fill="#f8f8f2"/>
<rect x="1142.91" y="98.0" width="3.76" height="1.5" fill="#f92672"/>
<rect x="1147.61" y="98.0" width="3.76" height="1.5" fill="#a6e22e"/>
<rect x="1151.38" y="98.0" width="0.94" height="1.5" fill="#f8f8f2"/>
<rect x="1152.32" y="98.0" width="34.82" height="1.5" fill="#e6db74"/>
<rect x="1187.14" y="98.0" width="0.94" height="1.5" fill="#f8f8f2"/>
<rect x="1143.85" y="100.0" width="0.94" height="1.5" fill="#f8f8f2"/>
<rect x="1144.79" y="100.0" width="10.35" height="1.5" fill="#f92672"/>
<rect x="1156.08" y="100.0" width="5.65" height="1.5" fill="#a6e22e"/>
<rect x="1161.73" y="100.0" width="0.94" height="1.5" fill="#f8f8f2"/>
<rect x="1162.67" y="100.0" width="6.59" height="1.5" fill="#e6db74"/>
<rect x="1169.26" y="100.0" width="1.88" height="1.5" fill="#f8f8f2"/>
<rect x="1141.96" y="102.0" width="1.88" height="1.5" fill="#f8f8f2"/>
<rect x="1143.85" y="102.0" width="3.76" height="1.5" fill="#f92672"/>
<rect x="1147.61" y="102.0" width="0.94" height="1.5" fill="#f8f8f2"/>
<rect x="1141.96" y="104.0" width="0.94" height="1.5" fill="#f8f8f2"/>
<rect x="1142.91" y="104.0" width="3.76" height="1.5" fill="#f92672"/>
<rect x="1147.61" y="104.0" width="3.76" height="1.5" fill="#a6e22e"/>
<rect x="1151.38" y="104.0" width="0.94" height="1.5" fill="#f8f8f2"/>
<rect x="1152.32" y="104.0" width="26.35" height="1.5" fill="#e6db74"/>
<rect x="1178.67" y="104.0" width="0.94" height="1.5" fill="#f8f8f2"/>
<rect x="1143.85" y="106.0" width="0.94" height="1.5" fill="#f8f8f2"/>
<rect x="1144.79" y="106.0" width="10.35" height="1.5" fill="#f92672"/>
<rect x="1156.08" y="106.0" width="5.65" height="1.5" fill="#a6e22e"/>
<rect x="1161.73" y="106.0" width="0.94" height="1.5" fill="#f8f8f2"/>
<rect x="1162.67" y="106.0" width="6.59" height="1.5" fill="#e6db74"/>
<rect x="1169.26" y="106.0" width="1.88" height="1.5" fill="#f8f8f2"/>
<rect x="1141.96" y="108.0" width="1.88" height="1.5" fill="#f8f8f2"/>
<rect x="1143.85" y="108.0" width="3.76" height="1.5" fill="#f92672"/>
<rect x="1147.61" y="108.0" width="0.94" height="1.5" fill="#f8f8f2"/>
<rect x="1141.96" y="110.0" width="0.94" height="1.5" fill="#f8f8f2"/>
<rect x="1142.91" y="110.0" width="3.76" height="1.5" fill="#f92672"/>
<rect x="1147.61" y="110.0" width="3.76" height="1.5" fill="#a6e22e"/>
<rect x="1151.38" y="110.0" width="0.94" height="1.5" fill="#f8f8f2"/>
<rect x="1152.32" y="110.0" width="27.29" height="1.5" fill="#e6db74"/>
<rect x="1179.61" y="110.0" width="0.94" height="1.5" fill="#f8f8f2"/>
<rect x="1143.85" y="112.0" width="0.94" height="1.5" fill="#f8f8f2"/>
<rect x="1144.79" y="112.0" width="10.35" height="1.5" fill="#f92672"/>
<rect x="1156.08" y="112.0" width="5.65" height="1.5" fill="#a6e22e"/>
<rect x="1161.73" y="112.0" width="0.94" height="1.5" fill="#f8f8f2"/>
<rect x="1162.67" y="112.0" width="6.59" height="1.5" fill="#e6db74"/>
<rect x="1169.26" y="112.0" width="1.88" height="1.5" fill="#f8f8f2"/>
<rect x="1141.96" y="114.0" width="1.88" height="1.5" fill="#f8f8f2"/>
<rect x="1143.85" y="114.0" width="3.76" height="1.5" fill="#f92672"/>
<rect x="1147.61" y="114.0" width="0.94" height="1.5" fill="#f8f8f2"/>
<rect x="1141.96" y="116.0" width="0.94" height="1.5" fill="#f8f8f2"/>
<rect x="1142.91" y="116.0" width="3.76" height="1.5" fill="#f92672"/>
<rect x="1147.61" y="116.0" width="3.76" height="1.5" fill="#a6e22e"/>
<rect x="1151.38" y="116.0" width="0.94" height="1.5" fill="#f8f8f2"/>
<rect x="1152.32" y="116.0" width="27.29" height="1.5" fill="#e6db74"/>
<rect x="1179.61" y="116.0" width="0.94" height="1.5" fill="#f8f8f2"/>
<rect x="1143.85" y="118.0" width="0.94" height="1.5" fill="#f8f8f2"/>
<rect x="1144.79" y="118.0" width="10.35" height="1.5" fill="#f92672"/>
<rect x="1156.08" y="118.0" width="5.65" height="1.5" fill="#a6e22e"/>
<rect x="1161.73" y="118.0" width="0.94" height="1.5" fill="#f8f8f2"/>
<rect x="1162.67" y="118.0" width="6.59" height="1.5" fill="#e6db74"/>
<rect x="1169.26" y="118.0" width="1.88" height="1.5" fill="#f8f8f2"/>
<rect x="1141.96" y="120.0" width="1.88" height="1.5" fill="#f8f8f2"/>
<rect x="1143.85" y="120.0" width="3.76" height="1.5" fill="#f92672"/>
<rect x="1147.61" y="120.0" width="0.94" height="1.5" fill="#f8f8f2"/>
<rect x="1141.96" y="122.0" width="0.94" height="1.5" fill="#f8f8f2"/>
<rect x="1142.91" y="122.0" width="3.76" height="1.5" fill="#f92672"/>
<rect x="1147.61" y="122.0" width="3.76" height="1.5" fill="#a6e22e"/>
<rect x="1151.38" y="122.0" width="0.94" height="1.5" fill="#f8f8f2"/>
<rect x="1152.32" y="122.0" width="26.35" height="1.5" fill="#e6db74"/>
<rect x="1178.67" y="122.0" width="0.94" height="1.5" fill="#f8f8f2"/>
<rect x="1143.85" y="124.0" width="0.94" height="1.5" fill="#f8f8f2"/>
<rect x="1144.79" y="124.0" width="10.35" height="1.5" fill="#f92672"/>
<rect x="1156.08" y="124.0" width="5.65" height="1.5" fill="#a6e22e"/>
<rect x="1161.73" y="124.0" width="0.94" height="1.5" fill="#f8f8f2"/>
<rect x="1162.67" y="124.0" width="6.59" height="1.5" fill="#e6db74"/>
<rect x="1169.26" y="124.0" width="1.88" height="1.5" fill="#f8f8f2"/>
<rect x="1141.96" y="126.0" width="1.88" height="1.5" fill="#f8f8f2"/>
<rect x="1143.85" y="126.0" width="3.76" height="1.5" fill="#f92672"/>
<rect x="1147.61" y="126.0" width="0.94" height="1.5" fill="#f8f8f2"/>
<rect x="1141.96" y="128.0" width="0.94" height="1.5" fill="#f8f8f2"/>
<rect x="1142.91" y="128.0" width="3.76" height="1.5" fill="#f92672"/>
<rect x="1147.61" y="128.0" width="3.76" height="1.5" fill="#a6e22e"/>
<rect x="1151.38" y="128.0" width="0.94" height="1.5" fill="#f8f8f2"/>
<rect x="1152.32" y="128.0" width="26.35" height="1.5" fill="#e6db74"/>
<rect x="1178.67" y="128.0" width="0.94" height="1.5" fill="#f8f8f2"/>
<rect x="1143.85" y="130.0" width="0.94" height="1.5" fill="#f8f8f2"/>
<rect x="1144.79" y="130.0" width="10.35" height="1.5" fill="#f92672"/>
<rect x="1156.08" y="130.0" width="5.65" height="1.5" fill="#a6e22e"/>
<rect x="1161.73" y="130.0" width="0.94" height="1.5" fill="#f8f8f2"/>
<rect x="1162.67" y="130.0" width="6.59" height="1.5" fill="#e6db74"/>
<rect x="1169.26" y="130.0" width="1.88" height="1.5" fill="#f8f8f2"/>
<rect x="1141.96" y="132.0" width="1.88" height="1.5" fill="#f8f8f2"/>
<rect x="1143.85" y="132.0" width="3.76" height="1.5" fill="#f92672"/>
<rect x="1147.61" y="132.0" width="0.94" height="1.5" fill="#f8f8f2"/>
<rect x="1141.96" y="134.0" width="0.94" height="1.5" fill="#f8f8f2"/>
<rect x="1142.91" y="134.0" width="3.76" height="1.5" fill="#f92672"/>
<rect x="1147.61" y="134.0" width="3.76" height="1.5" fill="#a6e22e"/>
<rect x="1151.38" y="134.0" width="0.94" height="1.5" fill="#f8f8f2"/>
<rect x="1152.32" y="134.0" width="23.53" height="1.5" fill="#e6db74"/>
<rect x="1175.85" y="134.0" width="0.94" height="1.5" fill="#f8f8f2"/>
<rect x="1143.85" y="136.0" width="0.94" height="1.5" fill="#f8f8f2"/>
<rect x="1144.79" y="136.0" width="10.35" height="1.5" fill="#f92672"/>
<rect x="1156.08" y="136.0" width="5.65" height="1.5" fill="#a6e22e"/>
<rect x="1161.73" y="136.0" width="0.94" height="1.5" fill="#f8f8f2"/>
<rect x="1162.67" y="136.0" width="6.59" height="1.5" fill="#e6db74"/>
<rect x="1169.26" y="136.0" width="1.88" height="1.5" fill="#f8f8f2"/>
<rect x="1141.96" y="138.0" width="1.88" height="1.5" fill="#f8f8f2"/>
<rect x="1143.85" y="138.0" width="3.76" height="1.5" fill="#f92672"/>
<rect x="1147.61" y="138.0" width="0.94" height="1.5" fill="#f8f8f2"/>
<rect x="1141.96" y="140.0" width="0.94" height="1.5" fill="#f8f8f2"/>
<rect x="1142.91" y="140.0" width="3.76" height="1.5" fill="#f92672"/>
<rect x="1147.61" y="140.0" width="3.76" height="1.5" fill="#a6e22e"/>
<rect x="1151.38" y="140.0" width="0.94" height="1.5" fill="#f8f8f2"/>
<rect x="1152.32" y="140.0" width="28.24" height="1.5" fill="#e6db74"/>
<rect x="1180.55" y="140.0" width="0.94" height="1.5" fill="#f8f8f2"/>
<rect x="1143.85" y="142.0" width="0.94" height="1.5" fill="#f8f8f2"/>
<rect x="1144.79" y="142.0" width="10.35" height="1.5" fill="#f92672"/>
<rect x="1156.08" y="142.0" width="5.65" height="1.5" fill="#a6e22e"/>
<rect x="1161.73" y="142.0" width="0.94" height="1.5" fill="#f8f8f2"/>
<rect x="1162.67" y="142.0" width="6.59" height="1.5" fill="#e6db74"/>
<rect x="1169.26" y="142.0" width="1.88" height="1.5" fill="#f8f8f2"/>
<rect x="1141.96" y="144.0" width="1.88" height="1.5" fill="#f8f8f2"/>
<rect x="1143.85" y="144.0" width="3.76" height="1.5" fill="#f92672"/>
<rect x="1147.61" y="144.0" width="0.94" height="1.5" fill="#f8f8f2"/>
<rect x="1141.96" y="146.0" width="0.94" height="1.5" fill="#f8f8f2"/>
<rect x="1142.91" y="146.0" width="3.76" height="1.5" fill="#f92672"/>
<rect x="1147.61" y="146.0" width="3.76" height="1.5" fill="#a6e22e"/>
<rect x="1151.38" y="146.0" width="0.94" height="1.5" fill="#f8f8f2"/>
<rect x="1152.32" y="146.0" width="32.00" height="1.5" fill="#e6db74"/>
<rect x="1184.32" y="146.0" width="0.94" height="1.5" fill="#f8f8f2"/>
<rect x="1143.85" y="148.0" width="0.94" height="1.5" fill="#f8f8f2"/>
<rect x="1144.79" y="148.0" width="10.35" height="1.5" fill="#f92672"/>
<rect x="1156.08" y="148.0" width="5.65" height="1.5" fill="#a6e22e"/>
<rect x="1161.73" y="148.0" width="0.94" height="1.5" fill="#f8f8f2"/>
<rect x="1162.67" y="148.0" width="6.59" height="1.5" fill="#e6db74"/>
<rect x="1169.26" y="148.0" width="1.88" height="1.5" fill="#f8f8f2"/>
<rect x="1141.96" y="150.0" width="1.88" height="1.5" fill="#f8f8f2"/>
<rect x="1143.85" y="150.0" width="3.76" height="1.5" fill="#f92672"/>
<rect x="1147.61" y="150.0" width="0.94" height="1.5" fill="#f8f8f2"/>
<rect x="1141.96" y="152.0" width="0.94" height="1.5" fill="#f8f8f2"/>
<rect x="1142.91" y="152.0" width="3.76" height="1.5" fill="#f92672"/>
<rect x="1147.61" y="152.0" width="3.76" height="1.5" fill="#a6e22e"/>
<rect x="1151.38" y="152.0" width="0.94" height="1.5" fill="#f8f8f2"/>
<rect x="1152.32" y="152.0" width="24.47" height="1.5" fill="#e6db74"/>
<rect x="1176.79" y="152.0" width="0.94" height="1.5" fill="#f8f8f2"/>
<rect x="1143.85" y="154.0" width="0.94" height="1.5" fill="#f8f8f2"/>
<rect x="1144.79" y="154.0" width="10.35" height="1.5" fill="#f92672"/>
<rect x="1156.08" y="154.0" width="5.65" height="1.5" fill="#a6e22e"/>
<rect x="1161.73" y="154.0" width="0.94" height="1.5" fill="#f8f8f2"/>
<rect x="1162.67" y="154.0" width="6.59" height="1.5" fill="#e6db74"/>
<rect x="1169.26" y="154.0" width="1.88" height="1.5" fill="#f8f8f2"/>
<rect x="1141.96" y="156.0" width="1.88" height="1.5" fill="#f8f8f2"/>
<rect x="1143.85" y="156.0" width="3.76" height="1.5" fill="#f92672"/>
<rect x="1147.61" y="156.0" width="0.94" height="1.5" fill="#f8f8f2"/>
<rect x="1141.96" y="158.0" width="0.94" height="1.5" fill="#f8f8f2"/>
<rect x="1142.91" y="158.0" width="3.76" height="1.5" fill="#f92672"/>
<rect x="1147.61" y="158.0" width="3.76" height="1.5" fill="#a6e22e"/>
<rect x="1151.38" y="158.0" width="0.94" height="1.5" fill="#f8f8f2"/>
<rect x="1152.32" y="158.0" width="32.94" height="1.5" fill="#e6db74"/>
<rect x="1185.26" y="158.0" width="0.94" height="1.5" fill="#f8f8f2"/>
<rect x="1143.85" y="160.0" width="0.94" height="1.5" fill="#f8f8f2"/>
<rect x="1144.79" y="160.0" width="10.35" height="1.5" fill="#f92672"/>
<rect x="1156.08" y="160.0" width="5.65" height="1.5" fill="#a6e22e"/>
<rect x="1161.73" y="160.0" width="0.94" height="1.5" fill="#f8f8f2"/>
<rect x="1162.67" y="160.0" width="6.59" height="1.5" fill="#e6db74"/>
<rect x="1169.26" y="160.0" width="1.88" height="1.5" fill="#f8f8f2"/>
<rect x="1141.96" y="162.0" width="1.88" height="1.5" fill="#f8f8f2"/>
<rect x="1143.85" y="162.0" width="3.76" height="1.5" fill="#f92672"/>
<rect x="1147.61" y="162.0" width="0.94" height="1.5" fill="#f8f8f2"/>
<rect x="1141.96" y="164.0" width="0.94" height="1.5" fill="#f8f8f2"/>
<rect x="1142.91" y="164.0" width="3.76" height="1.5" fill="#f92672"/>
<rect x="1147.61" y="164.0" width="3.76" height="1.5" fill="#a6e22e"/>
<rect x="1151.38" y="164.0" width="0.94" height="1.5" fill="#f8f8f2"/>
<rect x="1152.32" y="164.0" width="27.29" height="1.5" fill="#e6db74"/>
<rect x="1179.61" y="164.0" width="0.94" height="1.5" fill="#f8f8f2"/>
<rect x="1143.85" y="166.0" width="0.94" height="1.5" fill="#f8f8f2"/>
<rect x="1144.79" y="166.0" width="10.35" height="1.5" fill="#f92672"/>
<rect x="1156.08" y="166.0" width="5.65" height="1.5" fill="#a6e22e"/>
<rect x="1161.73" y="166.0" width="0.94" height="1.5" fill="#f8f8f2"/>
<rect x="1162.67" y="166.0" width="6.59" height="1.5" fill="#e6db74"/>
<rect x="1169.26" y="166.0" width="1.88" height="1.5" fill="#f8f8f2"/>
<rect x="1141.96" y="168.0" width="1.88" height="1.5" fill="#f8f8f2"/>
<rect x="1143.85" y="168.0" width="3.76" height="1.5" fill="#f92672"/>
<rect x="1147.61" y="168.0" width="0.94" height="1.5" fill="#f8f8f2"/>
<rect x="1141.96" y="170.0" width="0.94" height="1.5" fill="#f8f8f2"/>
<rect x="1142.91" y="170.0" width="3.76" height="1.5" fill="#f92672"/>
<rect x="1147.61" y="170.0" width="3.76" height="1.5" fill="#a6e22e"/>
<rect x="1151.38" y="170.0" width="0.94" height="1.5" fill="#f8f8f2"/>
<rect x="1152.32" y="170.0" width="25.41" height="1.5" fill="#e6db74"/>
<rect x="1177.73" y="170.0" width="0.94" height="1.5" fill="#f8f8f2"/>
<rect x="1143.85" y="172.0" width="0.94" height="1.5" fill="#f8f8f2"/>
<rect x="1144.79" y="172.0" width="10.35" height="1.5" fill="#f92672"/>
<rect x="1156.08" y="172.0" width="5.65" height="1.5" fill="#a6e22e"/>
<rect x="1161.73" y="172.0" width="0.94" height="1.5" fill="#f8f8f2"/>
<rect x="1162.67" y="172.0" width="6.59" height="1.5" fill="#e6db74"/>
<rect x="1169.26" y="172.0" width="1.88" height="1.5" fill="#f8f8f2"/>
<rect x="1141.96" y="174.0" width="1.88" height="1.5" fill="#f8f8f2"/>
<rect x="1143.85" y="174.0" width="3.76" height="1.5" fill="#f92672"/>
<rect x="1147.61" y="174.0" width="0.94" height="1.5" fill="#f8f8f2"/>
<rect x="1141.96" y="176.0" width="0.94" height="1.5" fill="#f8f8f2"/>
<rect x="1142.91" y="176.0" width="3.76" height="1.5" fill="#f92672"/>
<rect x="1147.61" y="176.0" width="3.76" height="1.5" fill="#a6e22e"/>
<rect x="1151.38" y="176.0" width="0.94" height="1.5" fill="#f8f8f2"/>
<rect x="1152.32" y="176.0" width="30.12" height="1.5" fill="#e6db74"/>
<rect x="1182.44" y="176.0" width="0.94" height="1.5" fill="#f8f8f2"/>
<rect x="1143.85" y="178.0" width="0.94" height="1.5" fill="#f8f8f2"/>
<rect x="1144.79" y="178.0" width="10.35" height="1.5" fill="#f92672"/>
<rect x="1156.08" y="178.0" width="5.65" height="1.5" fill="#a6e22e"/>
<rect x="1161.73" y="178.0" width="0.94" height="1.5" fill="#f8f8f2"/>
<rect x="1162.67" y="178.0" width="6.59" height="1.5" fill="#e6db74"/>
<rect x="1169.26" y="178.0" width="1.88" height="1.5" fill="#f8f8f2"/>
<rect x="1141.96" y="180.0" width="1.88" height="1.5" fill="#f8f8f2"/>
<rect x="1143.85" y="180.0" width="3.76" height="1.5" fill="#f92672"/>
<rect x="1147.61" y="180.0" width="0.94" height="1.5" fill="#f8f8f2"/>
<rect x="1141.96" y="182.0" width="0.94" height="1.5" fill="#f8f8f2"/>
<rect x="1142.91" y="182.0" width="3.76" height="1.5" fill="#f92672"/>
<rect x="1147.61" y="182.0" width="3.76" height="1.5" fill="#a6e22e"/>
<rect x="1151.38" y="182.0" width="0.94" height="1.5" fill="#f8f8f2"/>
<rect x="1152.32" y="182.0" width="30.12" height="1.5" fill="#e6db74"/>
<rect x="1182.44" y="182.0" width="0.94" height="1.5" fill="#f8f8f2"/>
<rect x="1143.85" y="184.0" width="0.94" height="1.5" fill="#f8f8f2"/>
<rect x="1144.79" y="184.0" width="10.35" height="1.5" fill="#f92672"/>
<rect x="1156.08" y="184.0" width="5.65" height="1.5" fill="#a6e22e"/>
<rect x="1161.73" y="184.0" width="0.94" height="1.5" fill="#f8f8f2"/>
<rect x="1162.67" y="184.0" width="6.59" height="1.5" fill="#e6db74"/>
<rect x="1169.26" y="184.0" width="1.88" height="1.5" fill="#f8f8f2"/>
<rect x="1141.96" y="186.0" width="1.88" height="1.5" fill="#f8f8f2"/>
<rect x="1143.85" y="186.0" width="3.76" height="1.5" fill="#f92672"/>
<rect x="1147.61" y="186.0" width="0.94" height="1.5" fill="#f8f8f2"/>
<rect x="1141.96" y="188.0" width="0.94" height="1.5" fill="#f8f8f2"/>
<rect x="1142.91" y="188.0" width="3.76" height="1.5" fill="#f92672"/>
<rect x="1147.61" y="188.0" width="3.76" height="1.5" fill="#a6e22e"/>
<rect x="1151.38" y="188.0" width="0.94" height="1.5" fill="#f8f8f2"/>
<rect x="1152.32" y="188.0" width="30.12" height="1.5" fill="#e6db74"/>
<rect x="1182.44" y="188.0" width="0.94" height="1.5" fill="#f8f8f2"/>
<rect x="1143.85" y="190.0" width="0.94" height="1.5" fill="#f8f8f2"/>
<rect x="1144.79" y="190.0" width="10.35" height="1.5" fill="#f92672"/>
<rect x="1156.08" y="190.0" width="5.65" height="1.5" fill="#a6e22e"/>
<rect x="1161.73" y="190.0" width="0.94" height="1.5" fill="#f8f8f2"/>
<rect x="1162.67" y="190.0" width="6.59" height="1.5" fill="#e6db74"/>
<rect x="1169.26" y="190.0" width="1.88" height="1.5" fill="#f8f8f2"/>
<rect x="1141.96" y="192.0" width="1.88" height="1.5" fill="#f8f8f2"/>
<rect x="1143.85" y="192.0" width="3.76" height="1.5" fill="#f92672"/>
<rect x="1147.61" y="192.0" width="0.94" height="1.5" fill="#f8f8f2"/>
<rect x="1141.96" y="194.0" width="0.94" height="1.5" fill="#f8f8f2"/>
<rect x="1142.91" y="194.0" width="3.76" height="1.5" fill="#f92672"/>
<rect x="1147.61" y="194.0" width="3.76" height="1.5" fill="#a6e22e"/>
<rect x="1151.38" y="194.0" width="0.94" height="1.5" fill="#f8f8f2"/>
<rect x="1152.32" y="194.0" width="32.00" height="1.5" fill="#e6db74"/>
<rect x="1184.32" y="194.0" width="0.94" height="1.5" fill="#f8f8f2"/>
<rect x="1143.85" y="196.0" width="0.94" height="1.5" fill="#f8f8f2"/>
<rect x="1144.79" y="196.0" width="10.35" height="1.5" fill="#f92672"/>
<rect x="1156.08" y="196.0" width="5.65" height="1.5" fill="#a6e22e"/>
<rect x="1161.73" y="196.0" width="0.94" height="1.5" fill="#f8f8f2"/>
<rect x="1162.67" y="196.0" width="6.59" height="1.5" fill="#e6db74"/>
<rect x="1169.26" y="196.0" width="1.88" height="1.5" fill="#f8f8f2"/>
<rect x="1141.96" y="198.0" width="1.88" height="1.5" fill="#f8f8f2"/>
<rect x="1143.85" y="198.0" width="3.76" height="1.5" fill="#f92672"/>
<rect x="1147.61" y="198.0" width="0.94" height="1.5" fill="#f8f8f2"/>
<rect x="1141.96" y="200.0" width="0.94" height="1.5" fill="#f8f8f2"/>
<rect x="1142.91" y="200.0" width="3.76" height="1.5" fill="#f92672"/>
<rect x="1147.61" y="200.0" width="3.76" height="1.5" fill="#a6e22e"/>
<rect x="1151.38" y="200.0" width="0.94" height="1.5" fill="#f8f8f2"/>
<rect x="1152.32" y="200.0" width="32.94" height="1.5" fill="#e6db74"/>
<rect x="1185.26" y="200.0" width="0.94" height="1.5" fill="#f8f8f2"/>
<rect x="1143.85" y="202.0" width="0.94" height="1.5" fill="#f8f8f2"/>
<rect x="1144.79" y="202.0" width="10.35" height="1.5" fill="#f92672"/>
<rect x="1156.08" y="202.0" width="5.65" height="1.5" fill="#a6e22e"/>
<rect x="1161.73" y="202.0" width="0.94" height="1.5" fill="#f8f8f2"/>
<rect x="1162.67" y="202.0" width="6.59" height="1.5" fill="#e6db74"/>
<rect x="1169.26" y="202.0" width="1.88" height="1.5" fill="#f8f8f2"/>
<rect x="1141.96" y="204.0" width="1.88" height="1.5" fill="#f8f8f2"/>
<rect x="1143.85" y="204.0" width="3.76" height="1.5" fill="#f92672"/>
<rect x="1147.61" y="204.0" width="0.94" height="1.5" fill="#f8f8f2"/>
<rect x="1141.96" y="206.0" width="0.94" height="1.5" fill="#f8f8f2"/>
<rect x="1142.91" y="206.0" width="3.76" height="1.5" fill="#f92672"/>
<rect x="1147.61" y="206.0" width="3.76" height="1.5" fill="#a6e22e"/>
<rect x="1151.38" y="206.0" width="0.94" height="1.5" fill="#f8f8f2"/>
<rect x="1152.32" y="206.0" width="23.53" height="1.5" fill="#e6db74"/>
<rect x="1175.85" y="206.0" width="0.94" height="1.5" fill="#f8f8f2"/>
<rect x="1143.85" y="208.0" width="0.94" height="1.5" fill="#f8f8f2"/>
<rect x="1144.79" y="208.0" width="10.35" height="1.5" fill="#f92672"/>
<rect x="1156.08" y="208.0" width="5.65" height="1.5" fill="#a6e22e"/>
<rect x="1161.73" y="208.0" width="0.94" height="1.5" fill="#f8f8f2"/>
<rect x="1162.67" y="208.0" width="6.59" height="1.5" fill="#e6db74"/>
<rect x="1169.26" y="208.0" width="1.88" height="1.5" fill="#f8f8f2"/>
<rect x="1141.96" y="210.0" width="1.88" height="1.5" fill="#f8f8f2"/>
<rect x="1143.85" y="210.0" width="3.76" height="1.5" fill="#f92672"/>
<rect x="1147.61" y="210.0" width="0.94" height="1.5" fill="#f8f8f2"/>
<rect x="1141.96" y="212.0" width="0.94" height="1.5" fill="#f8f8f2"/>
<rect x="1142.91" y="212.0" width="3.76" height="1.5" fill="#f92672"/>
<rect x="1147.61" y="212.0" width="3.76" height="1.5" fill="#a6e22e"/>
<rect x="1151.38" y="212.0" width="0.94" height="1.5" fill="#f8f8f2"/>
<rect x="1152.32" y="212.0" width="30.12" height="1.5" fill="#e6db74"/>
<rect x="1182.44" y="212.0" width="0.94" height="1.5" fill="#f8f8f2"/>
<rect x="1143.85" y="214.0" width="0.94" height="1.5" fill="#f8f8f2"/>
<rect x="1144.79" y="214.0" width="10.35" height="1.5" fill="#f92672"/>
<rect x="1156.08" y="214.0" width="5.65" height="1.5" fill="#a6e22e"/>
<rect x="1161.73" y="214.0" width="0.94" height="1.5" fill="#f8f8f2"/>
<rect x="1162.67" y="214.0" width="6.59" height="1.5" fill="#e6db74"/>
<rect x="1169.26" y="214.0" width="1.88" height="1.5" fill="#f8f8f2"/>
<rect x="1141.96" y="216.0" width="1.88" height="1.5" fill="#f8f8f2"/>
<rect x="1143.85" y="216.0" width="3.76" height="1.5" fill="#f92672"/>
<rect x="1147.61" y="216.0" width="0.94" height="1.5" fill="#f8f8f2"/>
<rect x="1141.96" y="218.0" width="0.94" height="1.5" fill="#f8f8f2"/>
<rect x="1142.91" y="218.0" width="3.76" height="1.5" fill="#f92672"/>
<rect x="1147.61" y="218.0" width="3.76" height="1.5" fill="#a6e22e"/>
<rect x="1151.38" y="218.0" width="0.94" height="1.5" fill="#f8f8f2"/>
<rect x="1152.32" y="218.0" width="33.88" height="1.5" fill="#e6db74"/>
<rect x="1186.20" y="218.0" width="0.94" height="1.5" fill="#f8f8f2"/>
<rect x="1143.85" y="220.0" width="0.94" height="1.5" fill="#f8f8f2"/>
<rect x="1144.79" y="220.0" width="10.35" height="1.5" fill="#f92672"/>
<rect x="1156.08" y="220.0" width="5.65" height="1.5" fill="#a6e22e"/>
<rect x="1161.73" y="220.0" width="0.94" height="1.5" fill="#f8f8f2"/>
<rect x="1162.67" y="220.0" width="6.59" height="1.5" fill="#e6db74"/>
<rect x="1169.26" y="220.0" width="1.88" height="1.5" fill="#f8f8f2"/>
<rect x="1141.96" y="222.0" width="1.88" height="1.5" fill="#f8f8f2"/>
<rect x="1143.85" y="222.0" width="3.76" height="1.5" fill="#f92672"/>
<rect x="1147.61" y="222.0" width="0.94" height="1.5" fill="#f8f8f2"/>
<rect x="1141.96" y="224.0" width="0.94" height="1.5" fill="#f8f8f2"/>
<rect x="1142.91" y="224.0" width="3.76" height="1.5" fill="#f92672"/>
<rect x="1147.61" y="224.0" width="3.76" height="1.5" fill="#a6e22e"/>
<rect x="1151.38" y="224.0" width="0.94" height="1.5" fill="#f8f8f2"/>
<rect x="1152.32" y="224.0" width="36.71" height="1.5" fill="#e6db74"/>
<rect x="1189.02" y="224.0" width="0.94" height="1.5" fill="#f8f8f2"/>
<rect x="1143.85" y="226.0" width="0.94" height="1.5" fill="#f8f8f2"/>
<rect x="1144.79" y="226.0" width="10.35" height="1.5" fill="#f92672"/>
<rect x="1156.08" y="226.0" width="5.65" height="1.5" fill="#a6e22e"/>
<rect x="1161.73" y="226.0" width="0.94" height="1.5" fill="#f8f8f2"/>
<rect x="1162.67" y="226.0" width="6.59" height="1.5" fill="#e6db74"/>
<rect x="1169.26" y="226.0" width="1.88" height="1.5" fill="#f8f8f2"/>
<rect x="1141.96" y="228.0" width="1.88" height="1.5" fill="#f8f8f2"/>
<rect x="1143.85" y="228.0" width="3.76" height="1.5" fill="#f92672"/>
<rect x="1147.61" y="228.0" width="0.94" height="1.5" fill="#f8f8f2"/>
<rect x="1141.96" y="230.0" width="0.94" height="1.5" fill="#f8f8f2"/>
<rect x="1142.91" y="230.0" width="3.76" height="1.5" fill="#f92672"/>
<rect x="1147.61" y="230.0" width="3.76" height="1.5" fill="#a6e22e"/>
<rect x="1151.38" y="230.0" width="0.94" height="1.5" fill="#f8f8f2"/>
<rect x="1152.32" y="230.0" width="34.82" height="1.5" fill="#e6db74"/>
<rect x="1187.14" y="230.0" width="0.94" height="1.5" fill="#f8f8f2"/>
<rect x="1143.85" y="232.0" width="0.94" height="1.5" fill="#f8f8f2"/>
<rect x="1144.79" y="232.0" width="10.35" height="1.5" fill="#f92672"/>
<rect x="1156.08" y="232.0" width="5.65" height="1.5" fill="#a6e22e"/>
<rect x="1161.73" y="232.0" width="0.94" height="1.5" fill="#f8f8f2"/>
<rect x="1162.67" y="232.0" width="6.59" height="1.5" fill="#e6db74"/>
<rect x="1169.26" y="232.0" width="1.88" height="1.5" fill="#f8f8f2"/>
<rect x="1141.96" y="234.0" width="1.88" height="1.5" fill="#f8f8f2"/>
<rect x="1143.85" y="234.0" width="3.76" height="1.5" fill="#f92672"/>
<rect x="1147.61" y="234.0" width="0.94" height="1.5" fill="#f8f8f2"/>
<rect x="1141.96" y="236.0" width="0.94" height="1.5" fill="#f8f8f2"/>
<rect x="1142.91" y="236.0" width="3.76" height="1.5" fill="#f92672"/>
<rect x="1147.61" y="236.0" width="3.76" height="1.5" fill="#a6e22e"/>
<rect x="1151.38" y="236.0" width="0.94" height="1.5" fill="#f8f8f2"/>
<rect x="1152.32" y="236.0" width="22.59" height="1.5" fill="#e6db74"/>
<rect x="1174.91" y="236.0" width="0.94" height="1.5" fill="#f8f8f2"/>
<rect x="1143.85" y="238.0" width="0.94" height="1.5" fill="#f8f8f2"/>
<rect x="1144.79" y="238.0" width="10.35" height="1.5" fill="#f92672"/>
<rect x="1156.08" y="238.0" width="5.65" height="1.5" fill="#a6e22e"/>
<rect x="1161.73" y="238.0" width="0.94" height="1.5" fill="#f8f8f2"/>
<rect x="1162.67" y="238.0" width="6.59" height="1.5" fill="#e6db74"/>
<rect x="1169.26" y="238.0" width="1.88" height="1.5" fill="#f8f8f2"/>
<rect x="1141.96" y="240.0" width="1.88" height="1.5" fill="#f8f8f2"/>
<rect x="1143.85" y="240.0" width="3.76" height="1.5" fill="#f92672"/>
<rect x="1147.61" y="240.0" width="0.94" height="1.5" fill="#f8f8f2"/>
<rect x="1141.96" y="242.0" width="0.94" height="1.5" fill="#f8f8f2"/>
<rect x="1142.91" y="242.0" width="3.76" height="1.5" fill="#f92672"/>
<rect x="1147.61" y="242.0" width="3.76" height="1.5" fill="#a6e22e"/>
<rect x="1151.38" y="242.0" width="0.94" height="1.5" fill="#f8f8f2"/>
<rect x="1152.32" y="242.0" width="14.12" height="1.5" fill="#e6db74"/>
<rect x="1166.44" y="242.0" width="0.94" height="1.5" fill="#f8f8f2"/>
<rect x="1143.85" y="244.0" width="0.94" height="1.5" fill="#f8f8f2"/>
<rect x="1144.79" y="244.0" width="10.35" height="1.5" fill="#f92672"/>
<rect x="1156.08" y="244.0" width="5.65" height="1.5" fill="#a6e22e"/>
<rect x="1161.73" y="244.0" width="0.94" height="1.5" fill="#f8f8f2"/>
<rect x="1162.67" y="244.0" width="6.59" height="1.5" fill="#e6db74"/>
<rect x="1169.26" y="244.0" width="1.88" height="1.5" fill="#f8f8f2"/>
<rect x="1141.96" y="246.0" width="1.88" height="1.5" fill="#f8f8f2"/>
<rect x="1143.85" y="246.0" width="3.76" height="1.5" fill="#f92672"/>
<rect x="1147.61" y="246.0" width="0.94" height="1.5" fill="#f8f8f2"/>
<rect x="1140.08" y="248.0" width="1.88" height="1.5" fill="#f8f8f2"/>
<rect x="1141.96" y="248.0" width="4.71" height="1.5" fill="#f92672"/>
<rect x="1146.67" y="248.0" width="0.94" height="1.5" fill="#f8f8f2"/>
<rect x="1140.08" y="250.0" width="0.94" height="1.5" fill="#f8f8f2"/>
<rect x="1141.02" y="250.0" width="7.53" height="1.5" fill="#f92672"/>
<rect x="1148.55" y="250.0" width="0.94" height="1.5" fill="#f8f8f2"/>
<rect x="1141.96" y="252.0" width="3.76" height="1.5" fill="#75715e"/>
<rect x="1146.67" y="252.0" width="4.71" height="1.5" fill="#75715e"/>
<rect x="1152.32" y="252.0" width="8.47" height="1.5" fill="#75715e"/>
<rect x="1161.73" y="252.0" width="2.82" height="1.5" fill="#75715e"/>
<rect x="1141.96" y="254.0" width="0.94" height="1.5" fill="#f8f8f2"/>
<rect x="1142.91" y="254.0" width="6.59" height="1.5" fill="#f92672"/>
<rect x="1150.44" y="254.0" width="2.82" height="1.5" fill="#a6e22e"/>
<rect x="1153.26" y="254.0" width="0.94" height="1.5" fill="#f8f8f2"/>
<rect x="1154.20" y="254.0" width="5.65" height="1.5" fill="#e6db74"/>
<rect x="1160.79" y="254.0" width="11.29" height="1.5" fill="#a6e22e"/>
<rect x="1172.08" y="254.0" width="0.94" height="1.5" fill="#f8f8f2"/>
<rect x="1173.02" y="254.0" width="5.65" height="1.5" fill="#e6db74"/>
<rect x="1178.67" y="254.0" width="0.94" height="1.5" fill="#f8f8f2"/>
<rect x="1143.85" y="256.0" width="0.94" height="1.5" fill="#f8f8f2"/>
<rect x="1144.79" y="256.0" width="4.71" height="1.5" fill="#f92672"/>
<rect x="1149.49" y="256.0" width="10.35" height="1.5" fill="#f8f8f2"/>
<rect x="1159.85" y="256.0" width="4.71" height="1.5" fill="#f92672"/>
<rect x="1164.55" y="256.0" width="0.94" height="1.5" fill="#f8f8f2"/>
<rect x="1143.85" y="258.0" width="0.94" height="1.5" fill="#f8f8f2"/>
<rect x="1144.79" y="258.0" width="3.76" height="1.5" fill="#f92672"/>
<rect x="1149.49" y="258.0" width="5.65" height="1.5" fill="#a6e22e"/>
<rect x="1155.14" y="258.0" width="0.94" height="1.5" fill="#f8f8f2"/>
<rect x="1156.08" y="258.0" width="6.59" height="1.5" fill="#e6db74"/>
<rect x="1162.67" y="258.0" width="8.47" height="1.5" fill="#f8f8f2"/>
<rect x="1172.08" y="258.0" width="9.41" height="1.5" fill="#f8f8f2"/>
<rect x="1181.49" y="258.0" width="3.76" height="1.5" fill="#f92672"/>
<rect x="1185.26" y="258.0" width="0.94" height="1.5" fill="#f8f8f2"/>
<rect x="1143.85" y="260.0" width="0.94" height="1.5" fill="#f8f8f2"/>
<rect x="1144.79" y="260.0" width="3.76" height="1.5" fill="#f92672"/>
<rect x="1149.49" y="260.0" width="5.65" height="1.5" fill="#a6e22e"/>
<rect x="1155.14" y="260.0" width="0.94" height="1.5" fill="#f8f8f2"/>
<rect x="1156.08" y="260.0" width="6.59" height="1.5" fill="#e6db74"/>
<rect x="1162.67" y="260.0" width="7.53" height="1.5" fill="#f8f8f2"/>
<rect x="1171.14" y="260.0" width="5.65" height="1.5" fill="#f8f8f2"/>
<rect x="1176.79" y="260.0" width="3.76" height="1.5" fill="#f92672"/>
<rect x="1180.55" y="260.0" width="0.94" height="1.5" fill="#f8f8f2"/>
<rect x="1141.96" y="262.0" width="1.88" height="1.5" fill="#f8f8f2"/>
<rect x="1143.85" y="262.0" width="6.59" height="1.5" fill="#f92672"/>
<rect x="1150.44" y="262.0" width="0.94" height="1.5" fill="#f8f8f2"/>
<rect x="1141.96" y="264.0" width="0.94" height="1.5" fill="#f8f8f2"/>
<rect x="1142.91" y="264.0" width="6.59" height="1.5" fill="#f92672"/>
<rect x="1150.44" y="264.0" width="2.82" height="1.5" fill="#a6e22e"/>
<rect x="1153.26" y="264.0" width="0.94" height="1.5" fill="#f8f8f2"/>
<rect x="1154.20" y="264.0" width="13.18" height="1.5" fill="#e6db74"/>
<rect x="1168.32" y="264.0" width="11.29" height="1.5" fill="#a6e22e"/>
<rect x="1179.61" y="264.0" width="0.94" height="1.5" fill="#f8f8f2"/>
<rect x="1180.55" y="264.0" width="10.35" height="1.5" fill="#e6db74"/>
<rect x="1190.91" y="264.0" width="0.94" height="1.5" fill="#f8f8f2"/>
<rect x="1143.85" y="266.0" width="0.94" height="1.5" fill="#f8f8f2"/>
<rect x="1144.79" y="266.0" width="4.71" height="1.5" fill="#f92672"/>
<rect x="1149.49" y="266.0" width="1.88" height="1.5" fill="#f8f8f2"/>
<rect x="1143.85" y="268.0" width="0.94" height="1.5" fill="#f8f8f2"/>
<rect x="1144.79" y="268.0" width="3.76" height="1.5" fill="#f92672"/>
<rect x="1149.49" y="268.0" width="5.65" height="1.5" fill="#a6e22e"/>
<rect x="1155.14" y="268.0" width="0.94" height="1.5" fill="#f8f8f2"/>
<rect x="1156.08" y="268.0" width="6.59" height="1.5" fill="#e6db74"/>
<rect x="1162.67" y="268.0" width="0.94" height="1.5" fill="#f8f8f2"/>
<rect x="1163.61" y="268.0" width="3.76" height="1.5" fill="#ae81ff"/>
<rect x="1167.38" y="268.0" width="1.88" height="1.5" fill="#f8f8f2"/>
<rect x="1169.26" y="268.0" width="3.76" height="1.5" fill="#ae81ff"/>
<rect x="1173.02" y="268.0" width="1.88" height="1.5" fill="#f8f8f2"/>
<rect x="1174.91" y="268.0" width="3.76" height="1.5" fill="#f92672"/>
<rect x="1178.67" y="268.0" width="0.94" height="1.5" fill="#f8f8f2"/>
<rect x="1141.96" y="270.0" width="1.88" height="1.5" fill="#f8f8f2"/>
<rect x="1143.85" y="270.0" width="6.59" height="1.5" fill="#f92672"/>
<rect x="1150.44" y="270.0" width="0.94" height="1.5" fill="#f8f8f2"/>
<rect x="1141.96" y="272.0" width="0.94" height="1.5" fill="#f8f8f2"/>
<rect x="1142.91" y="272.0" width="6.59" height="1.5" fill="#f92672"/>
<rect x="1150.44" y="272.0" width="2.82" height="1.5" fill="#a6e22e"/>
<rect x="1153.26" y="272.0" width="0.94" height="1.5" fill="#f8f8f2"/>
<rect x="1154.20" y="272.0" width="15.06" height="1.5" fill="#e6db74"/>
<rect x="1170.20" y="272.0" width="11.29" height="1.5" fill="#a6e22e"/>
<rect x="1181.49" y="272.0" width="0.94" height="1.5" fill="#f8f8f2"/>
<rect x="1182.44" y="272.0" width="7.53" height="1.5" fill="#e6db74"/>
<rect x="1189.96" y="272.0" width="0.94" height="1.5" fill="#f8f8f2"/>
<rect x="1143.85" y="274.0" width="0.94" height="1.5" fill="#f8f8f2"/>
<rect x="1144.79" y="274.0" width="4.71" height="1.5" fill="#f92672"/>
<rect x="1149.49" y="274.0" width="15.06" height="1.5" fill="#f8f8f2"/>
<rect x="1164.55" y="274.0" width="4.71" height="1.5" fill="#f92672"/>
<rect x="1169.26" y="274.0" width="0.94" height="1.5" fill="#f8f8f2"/>
<rect x="1143.85" y="276.0" width="0.94" height="1.5" fill="#f8f8f2"/>
<rect x="1144.79" y="276.0" width="3.76" height="1.5" fill="#f92672"/>
<rect x="1149.49" y="276.0" width="5.65" height="1.5" fill="#a6e22e"/>
<rect x="1155.14" y="276.0" width="0.94" height="1.5" fill="#f8f8f2"/>
<rect x="1156.08" y="276.0" width="6.59" height="1.5" fill="#e6db74"/>
<rect x="1162.67" y="276.0" width="6.59" height="1.5" fill="#f8f8f2"/>
<rect x="1170.20" y="276.0" width="0.94" height="1.5" fill="#f8f8f2"/>
<rect x="1172.08" y="276.0" width="6.59" height="1.5" fill="#f8f8f2"/>
<rect x="1179.61" y="276.0" width="5.65" height="1.5" fill="#f8f8f2"/>
<rect x="1185.26" y="276.0" width="3.76" height="1.5" fill="#f92672"/>
<rect x="1189.02" y="276.0" width="0.94" height="1.5" fill="#f8f8f2"/>
<rect x="1143.85" y="278.0" width="0.94" height="1.5" fill="#f8f8f2"/>
<rect x="1144.79" y="278.0" width="3.76" height="1.5" fill="#f92672"/>
<rect x="1149.49" y="278.0" width="5.65" height="1.5" fill="#a6e22e"/>
<rect x="1155.14" y="278.0" width="0.94" height="1.5" fill="#f8f8f2"/>
<rect x="1156.08" y="278.0" width="6.59" height="1.5" fill="#e6db74"/>
<rect x="1162.67" y="278.0" width="6.59" height="1.5" fill="#f8f8f2"/>
<rect x="1170.20" y="278.0" width="6.59" height="1.5" fill="#f8f8f2"/>
<rect x="1176.79" y="278.0" width="3.76" height="1.5" fill="#f92672"/>
<rect x="1180.55" y="278.0" width="0.94" height="1.5" fill="#f8f8f2"/>
<rect x="1143.85" y="280.0" width="0.94" height="1.5" fill="#f8f8f2"/>
<rect x="1144.79" y="280.0" width="10.35" height="1.5" fill="#f92672"/>
<rect x="1156.08" y="280.0" width="5.65" height="1.5" fill="#a6e22e"/>
<rect x="1161.73" y="280.0" width="0.94" height="1.5" fill="#f8f8f2"/>
<rect x="1162.67" y="280.0" width="6.59" height="1.5" fill="#e6db74"/>
<rect x="1169.26" y="280.0" width="6.59" height="1.5" fill="#f8f8f2"/>
<rect x="1176.79" y="280.0" width="7.53" height="1.5" fill="#f8f8f2"/>
<rect x="1185.26" y="280.0" width="3.76" height="1.5" fill="#f8f8f2"/>
<rect x="1189.96" y="280.0" width="8.47" height="1.5" fill="#f8f8f2"/>
<rect x="1199.38" y="280.0" width="4.71" height="1.5" fill="#f8f8f2"/>
<rect x="1205.02" y="280.0" width="11.29" height="1.5" fill="#f8f8f2"/>
<rect x="1217.26" y="280.0" width="14.12" height="1.5" fill="#f8f8f2"/>
<rect x="1232.32" y="280.0" width="9.41" height="1.5" fill="#f8f8f2"/>
<rect x="1242.67" y="280.0" width="9.41" height="1.5" fill="#f8f8f2"/>
<rect x="1253.02" y="280.0" width="9.41" height="1.5" fill="#f8f8f2"/>
<rect x="1143.85" y="282.0" width="0.94" height="1.5" fill="#f8f8f2"/>
<rect x="1145.73" y="282.0" width="10.35" height="1.5" fill="#f8f8f2"/>
<rect x="1157.02" y="282.0" width="10.35" height="1.5" fill="#f8f8f2"/>
<rect x="1168.32" y="282.0" width="6.59" height="1.5" fill="#f8f8f2"/>
<rect x="1174.91" y="282.0" width="10.35" height="1.5" fill="#f92672"/>
<rect x="1185.26" y="282.0" width="0.94" height="1.5" fill="#f8f8f2"/>
<rect x="1143.85" y="284.0" width="0.94" height="1.5" fill="#f8f8f2"/>
<rect x="1144.79" y="284.0" width="6.59" height="1.5" fill="#f92672"/>
<rect x="1151.38" y="284.0" width="0.94" height="1.5" fill="#f8f8f2"/>
<rect x="1145.73" y="286.0" width="0.94" height="1.5" fill="#f8f8f2"/>
<rect x="1146.67" y="286.0" width="5.65" height="1.5" fill="#f92672"/>
<rect x="1153.26" y="286.0" width="4.71" height="1.5" fill="#a6e22e"/>
<rect x="1157.96" y="286.0" width="0.94" height="1.5" fill="#f8f8f2"/>
<rect x="1158.91" y="286.0" width="14.12" height="1.5" fill="#e6db74"/>
<rect x="1173.02" y="286.0" width="0.94" height="1.5" fill="#f8f8f2"/>
<rect x="1147.61" y="288.0" width="0.94" height="1.5" fill="#f8f8f2"/>
<rect x="1148.55" y="288.0" width="3.76" height="1.5" fill="#f92672"/>
<rect x="1153.26" y="288.0" width="5.65" height="1.5" fill="#a6e22e"/>
<rect x="1158.91" y="288.0" width="0.94" height="1.5" fill="#f8f8f2"/>
<rect x="1159.85" y="288.0" width="6.59" height="1.5" fill="#e6db74"/>
<rect x="1166.44" y="288.0" width="11.29" height="1.5" fill="#f8f8f2"/>
<rect x="1178.67" y="288.0" width="5.65" height="1.5" fill="#f8f8f2"/>
<rect x="1184.32" y="288.0" width="3.76" height="1.5" fill="#f92672"/>
<rect x="1188.08" y="288.0" width="0.94" height="1.5" fill="#f8f8f2"/>
<rect x="1145.73" y="290.0" width="1.88" height="1.5" fill="#f8f8f2"/>
<rect x="1147.61" y="290.0" width="5.65" height="1.5" fill="#f92672"/>
<rect x="1153.26" y="290.0" width="0.94" height="1.5" fill="#f8f8f2"/>
<rect x="1145.73" y="292.0" width="0.94" height="1.5" fill="#f8f8f2"/>
<rect x="1146.67" y="292.0" width="5.65" height="1.5" fill="#f92672"/>
<rect x="1153.26" y="292.0" width="4.71" height="1.5" fill="#a6e22e"/>
<rect x="1157.96" y="292.0" width="0.94" height="1.5" fill="#f8f8f2"/>
<rect x="1158.91" y="292.0" width="11.29" height="1.5" fill="#e6db74"/>
<rect x="1170.20" y="292.0" width="0.94" height="1.5" fill="#f8f8f2"/>
<rect x="1147.61" y="294.0" width="0.94" height="1.5" fill="#f8f8f2"/>
<rect x="1148.55" y="294.0" width="3.76" height="1.5" fill="#f92672"/>
<rect x="1153.26" y="294.0" width="5.65" height="1.5" fill="#a6e22e"/>
<rect x="1158.91" y="294.0" width="0.94" height="1.5" fill="#f8f8f2"/>
<rect x="1159.85" y="294.0" width="6.59" height="1.5" fill="#e6db74"/>
<rect x="1166.44" y="294.0" width="8.47" height="1.5" fill="#f8f8f2"/>
<rect x="1175.85" y="294.0" width="1.88" height="1.5" fill="#f8f8f2"/>
<rect x="1178.67" y="294.0" width="9.41" height="1.5" fill="#f8f8f2"/>
<rect x="1189.02" y="294.0" width="7.53" height="1.5" fill="#f8f8f2"/>
<rect x="1196.55" y="294.0" width="3.76" height="1.5" fill="#f92672"/>
<rect x="1200.32" y="294.0" width="0.94" height="1.5" fill="#f8f8f2"/>
<rect x="1145.73" y="296.0" width="1.88" height="1.5" fill="#f8f8f2"/>
<rect x="1147.61" y="296.0" width="5.65" height="1.5" fill="#f92672"/>
<rect x="1153.26" y="296.0" width="0.94" height="1.5" fill="#f8f8f2"/>
<rect x="1145.73" y="298.0" width="0.94" height="1.5" fill="#f8f8f2"/>
<rect x="1146.67" y="298.0" width="5.65" height="1.5" fill="#f92672"/>
<rect x="1153.26" y="298.0" width="4.71" height="1.5" fill="#a6e22e"/>
<rect x="1157.96" y="298.0" width="0.94" height="1.5" fill="#f8f8f2"/>
<rect x="1158.91" y="298.0" width="11.29" height="1.5" fill="#e6db74"/>
<rect x="1170.20" y="298.0" width="0.94" height="1.5" fill="#f8f8f2"/>
<rect x="1147.61" y="300.0" width="0.94" height="1.5" fill="#f8f8f2"/>
<rect x="1148.55" y="300.0" width="3.76" height="1.5" fill="#f92672"/>
<rect x="1153.26" y="300.0" width="5.65" height="1.5" fill="#a6e22e"/>
<rect x="1158.91" y="300.0" width="0.94" height="1.5" fill="#f8f8f2"/>
<rect x="1159.85" y="300.0" width="6.59" height="1.5" fill="#e6db74"/>
<rect x="1166.44" y="300.0" width="6.59" height="1.5" fill="#f8f8f2"/>
<rect x="1173.96" y="300.0" width="1.88" height="1.5" fill="#f8f8f2"/>
<rect x="1176.79" y="300.0" width="9.41" height="1.5" fill="#f8f8f2"/>
<rect x="1187.14" y="300.0" width="10.35" height="1.5" fill="#f8f8f2"/>
<rect x="1198.44" y="300.0" width="6.59" height="1.5" fill="#f8f8f2"/>
<rect x="1205.02" y="300.0" width="3.76" height="1.5" fill="#f92672"/>
<rect x="1208.79" y="300.0" width="0.94" height="1.5" fill="#f8f8f2"/>
<rect x="1145.73" y="302.0" width="1.88" height="1.5" fill="#f8f8f2"/>
<rect x="1147.61" y="302.0" width="5.65" height="1.5" fill="#f92672"/>
<rect x="1153.26" y="302.0" width="0.94" height="1.5" fill="#f8f8f2"/>
<rect x="1143.85" y="304.0" width="1.88" height="1.5" fill="#f8f8f2"/>
<rect x="1145.73" y="304.0" width="6.59" height="1.5" fill="#f92672"/>
<rect x="1152.32" y="304.0" width="0.94" height="1.5" fill="#f8f8f2"/>
<rect x="1141.96" y="306.0" width="1.88" height="1.5" fill="#f8f8f2"/>
<rect x="1143.85" y="306.0" width="6.59" height="1.5" fill="#f92672"/>
<rect x="1150.44" y="306.0" width="0.94" height="1.5" fill="#f8f8f2"/>
<rect x="1141.96" y="308.0" width="0.94" height="1.5" fill="#f8f8f2"/>
<rect x="1142.91" y="308.0" width="6.59" height="1.5" fill="#f92672"/>
<rect x="1150.44" y="308.0" width="2.82" height="1.5" fill="#a6e22e"/>
<rect x="1153.26" y="308.0" width="0.94" height="1.5" fill="#f8f8f2"/>
<rect x="1154.20" y="308.0" width="8.47" height="1.5" fill="#e6db74"/>
<rect x="1163.61" y="308.0" width="11.29" height="1.5" fill="#a6e22e"/>
<rect x="1174.91" y="308.0" width="0.94" height="1.5" fill="#f8f8f2"/>
<rect x="1175.85" y="308.0" width="5.65" height="1.5" fill="#e6db74"/>
<rect x="1181.49" y="308.0" width="0.94" height="1.5" fill="#f8f8f2"/>
<rect x="1143.85" y="310.0" width="0.94" height="1.5" fill="#f8f8f2"/>
<rect x="1144.79" y="310.0" width="4.71" height="1.5" fill="#f92672"/>
<rect x="1149.49" y="310.0" width="3.76" height="1.5" fill="#f8f8f2"/>
<rect x="1153.26" y="310.0" width="4.71" height="1.5" fill="#f92672"/>
<rect x="1157.96" y="310.0" width="0.94" height="1.5" fill="#f8f8f2"/>
<rect x="1143.85" y="312.0" width="0.94" height="1.5" fill="#f8f8f2"/>
<rect x="1144.79" y="312.0" width="3.76" height="1.5" fill="#f92672"/>
<rect x="1149.49" y="312.0" width="5.65" height="1.5" fill="#a6e22e"/>
<rect x="1155.14" y="312.0" width="0.94" height="1.5" fill="#f8f8f2"/>
<rect x="1156.08" y="312.0" width="6.59" height="1.5" fill="#e6db74"/>
<rect x="1162.67" y="312.0" width="2.82" height="1.5" fill="#f8f8f2"/>
<rect x="1166.44" y="312.0" width="5.65" height="1.5" fill="#f8f8f2"/>
<rect x="1172.08" y="312.0" width="3.76" height="1.5" fill="#f92672"/>
<rect x="1175.85" y="312.0" width="0.94" height="1.5" fill="#f8f8f2"/>
<rect x="1143.85" y="314.0" width="0.94" height="1.5" fill="#f8f8f2"/>
<rect x="1144.79" y="314.0" width="3.76" height="1.5" fill="#f92672"/>
<rect x="1149.49" y="314.0" width="5.65" height="1.5" fill="#a6e22e"/>
<rect x="1155.14" y="314.0" width="0.94" height="1.5" fill="#f8f8f2"/>
<rect x="1156.08" y="314.0" width="6.59" height="1.5" fill="#e6db74"/>
<rect x="1162.67" y="314.0" width="7.53" height="1.5" fill="#f8f8f2"/>
<rect x="1171.14" y="314.0" width="5.65" height="1.5" fill="#f8f8f2"/>
<rect x="1176.79" y="314.0" width="3.76" height="1.5" fill="#f92672"/>
<rect x="1180.55" y="314.0" width="0.94" height="1.5" fill="#f8f8f2"/>
<rect x="1141.96" y="316.0" width="1.88" height="1.5" fill="#f8f8f2"/>
<rect x="1143.85" y="316.0" width="6.59" height="1.5" fill="#f92672"/>
<rect x="1150.44" y="316.0" width="0.94" height="1.5" fill="#f8f8f2"/>
<rect x="1141.96" y="318.0" width="0.94" height="1.5" fill="#f8f8f2"/>
<rect x="1142.91" y="318.0" width="6.59" height="1.5" fill="#f92672"/>
<rect x="1150.44" y="318.0" width="2.82" height="1.5" fill="#a6e22e"/>
<rect x="1153.26" y="318.0" width="0.94" height="1.5" fill="#f8f8f2"/>
<rect x="1154.20" y="318.0" width="10.35" height="1.5" fill="#e6db74"/>
<rect x="1165.49" y="318.0" width="11.29" height="1.5" fill="#a6e22e"/>
<rect x="1176.79" y="318.0" width="0.94" height="1.5" fill="#f8f8f2"/>
<rect x="1177.73" y="318.0" width="10.35" height="1.5" fill="#e6db74"/>
<rect x="1188.08" y="318.0" width="0.94" height="1.5" fill="#f8f8f2"/>
<rect x="1143.85" y="320.0" width="0.94" height="1.5" fill="#f8f8f2"/>
<rect x="1144.79" y="320.0" width="4.71" height="1.5" fill="#f92672"/>
<rect x="1149.49" y="320.0" width="1.88" height="1.5" fill="#f8f8f2"/>
<rect x="1143.85" y="322.0" width="0.94" height="1.5" fill="#f8f8f2"/>
<rect x="1144.79" y="322.0" width="3.76" height="1.5" fill="#f92672"/>
<rect x="1149.49" y="322.0" width="5.65" height="1.5" fill="#a6e22e"/>
<rect x="1155.14" y="322.0" width="0.94" height="1.5" fill="#f8f8f2"/>
<rect x="1156.08" y="322.0" width="6.59" height="1.5" fill="#e6db74"/>
<rect x="1162.67" y="322.0" width="0.94" height="1.5" fill="#f8f8f2"/>
<rect x="1163.61" y="322.0" width="3.76" height="1.5" fill="#ae81ff"/>
<rect x="1167.38" y="322.0" width="1.88" height="1.5" fill="#f8f8f2"/>
<rect x="1169.26" y="322.0" width="3.76" height="1.5" fill="#ae81ff"/>
<rect x="1173.02" y="322.0" width="1.88" height="1.5" fill="#f8f8f2"/>
<rect x="1174.91" y="322.0" width="3.76" height="1.5" fill="#f92672"/>
<rect x="1178.67" y="322.0" width="0.94" height="1.5" fill="#f8f8f2"/>
<rect x="1141.96" y="324.0" width="1.88" height="1.5" fill="#f8f8f2"/>
<rect x="1143.85" y="324.0" width="6.59" height="1.5" fill="#f92672"/>
<rect x="1150.44" y="324.0" width="0.94" height="1.5" fill="#f8f8f2"/>
<rect x="1141.96" y="326.0" width="0.94" height="1.5" fill="#f8f8f2"/>
<rect x="1142.91" y="326.0" width="6.59" height="1.5" fill="#f92672"/>
<rect x="1150.44" y="326.0" width="2.82" height="1.5" fill="#a6e22e"/>
<rect x="1153.26" y="326.0" width="0.94" height="1.5" fill="#f8f8f2"/>
<rect x="1154.20" y="326.0" width="14.12" height="1.5" fill="#e6db74"/>
<rect x="1169.26" y="326.0" width="11.29" height="1.5" fill="#a6e22e"/>
<rect x="1180.55" y="326.0" width="0.94" height="1.5" fill="#f8f8f2"/>
<rect x="1181.49" y="326.0" width="5.65" height="1.5" fill="#e6db74"/>
<rect x="1187.14" y="326.0" width="0.94" height="1.5" fill="#f8f8f2"/>
<rect x="1143.85" y="328.0" width="0.94" height="1.5" fill="#f8f8f2"/>
<rect x="1144.79" y="328.0" width="4.71" height="1.5" fill="#f92672"/>
<rect x="1149.49" y="328.0" width="16.94" height="1.5" fill="#f8f8f2"/>
<rect x="1166.44" y="328.0" width="4.71" height="1.5" fill="#f92672"/>
<rect x="1171.14" y="328.0" width="0.94" height="1.5" fill="#f8f8f2"/>
<rect x="1143.85" y="330.0" width="0.94" height="1.5" fill="#f8f8f2"/>
<rect x="1144.79" y="330.0" width="3.76" height="1.5" fill="#f92672"/>
<rect x="1149.49" y="330.0" width="5.65" height="1.5" fill="#a6e22e"/>
<rect x="1155.14" y="330.0" width="0.94" height="1.5" fill="#f8f8f2"/>
<rect x="1156.08" y="330.0" width="6.59" height="1.5" fill="#e6db74"/>
<rect x="1162.67" y="330.0" width="7.53" height="1.5" fill="#f8f8f2"/>
<rect x="1171.14" y="330.0" width="0.94" height="1.5" fill="#f8f8f2"/>
<rect x="1173.02" y="330.0" width="6.59" height="1.5" fill="#f8f8f2"/>
<rect x="1179.61" y="330.0" width="3.76" height="1.5" fill="#f92672"/>
<rect x="1183.38" y="330.0" width="0.94" height="1.5" fill="#f8f8f2"/>
<rect x="1143.85" y="332.0" width="0.94" height="1.5" fill="#f8f8f2"/>
<rect x="1144.79" y="332.0" width="3.76" height="1.5" fill="#f92672"/>
<rect x="1149.49" y="332.0" width="5.65" height="1.5" fill="#a6e22e"/>
<rect x="1155.14" y="332.0" width="0.94" height="1.5" fill="#f8f8f2"/>
<rect x="1156.08" y="332.0" width="6.59" height="1.5" fill="#e6db74"/>
<rect x="1162.67" y="332.0" width="5.65" height="1.5" fill="#f8f8f2"/>
<rect x="1169.26" y="332.0" width="5.65" height="1.5" fill="#f8f8f2"/>
<rect x="1175.85" y="332.0" width="7.53" height="1.5" fill="#f8f8f2"/>
<rect x="1183.38" y="332.0" width="3.76" height="1.5" fill="#f92672"/>
<rect x="1187.14" y="332.0" width="0.94" height="1.5" fill="#f8f8f2"/>
<rect x="1141.96" y="334.0" width="1.88" height="1.5" fill="#f8f8f2"/>
<rect x="1143.85" y="334.0" width="6.59" height="1.5" fill="#f92672"/>
<rect x="1150.44" y="334.0" width="0.94" height="1.5" fill="#f8f8f2"/>
<rect x="1141.96" y="336.0" width="3.76" height="1.5" fill="#75715e"/>
<rect x="1146.67" y="336.0" width="6.59" height="1.5" fill="#75715e"/>
<rect x="1154.20" y="336.0" width="3.76" height="1.5" fill="#75715e"/>
<rect x="1158.91" y="336.0" width="2.82" height="1.5" fill="#75715e"/>
<rect x="1141.96" y="338.0" width="0.94" height="1.5" fill="#f8f8f2"/>
<rect x="1142.91" y="338.0" width="6.59" height="1.5" fill="#f92672"/>
<rect x="1150.44" y="338.0" width="2.82" height="1.5" fill="#a6e22e"/>
<rect x="1153.26" y="338.0" width="0.94" height="1.5" fill="#f8f8f2"/>
<rect x="1154.20" y="338.0" width="11.29" height="1.5" fill="#e6db74"/>
<rect x="1166.44" y="338.0" width="11.29" height="1.5" fill="#a6e22e"/>
<rect x="1177.73" y="338.0" width="0.94" height="1.5" fill="#f8f8f2"/>
<rect x="1178.67" y="338.0" width="14.12" height="1.5" fill="#e6db74"/>
<rect x="1192.79" y="338.0" width="0.94" height="1.5" fill="#f8f8f2"/>
<rect x="1143.85" y="340.0" width="0.94" height="1.5" fill="#f8f8f2"/>
<rect x="1144.79" y="340.0" width="4.71" height="1.5" fill="#f92672"/>
<rect x="1149.49" y="340.0" width="6.59" height="1.5" fill="#f8f8f2"/>
<rect x="1156.08" y="340.0" width="4.71" height="1.5" fill="#f92672"/>
<rect x="1160.79" y="340.0" width="0.94" height="1.5" fill="#f8f8f2"/>
<rect x="1143.85" y="342.0" width="0.94" height="1.5" fill="#f8f8f2"/>
<rect x="1144.79" y="342.0" width="3.76" height="1.5" fill="#f92672"/>
<rect x="1149.49" y="342.0" width="5.65" height="1.5" fill="#a6e22e"/>
<rect x="1155.14" y="342.0" width="0.94" height="1.5" fill="#f8f8f2"/>
<rect x="1156.08" y="342.0" width="6.59" height="1.5" fill="#e6db74"/>
<rect x="1162.67" y="342.0" width="0.94" height="1.5" fill="#f8f8f2"/>
<rect x="1153.26" y="344.0" width="6.59" height="1.5" fill="#f8f8f2"/>
<rect x="1160.79" y="344.0" width="9.41" height="1.5" fill="#f8f8f2"/>
<rect x="1171.14" y="344.0" width="3.76" height="1.5" fill="#f8f8f2"/>
<rect x="1175.85" y="344.0" width="6.59" height="1.5" fill="#f8f8f2"/>
<rect x="1183.38" y="344.0" width="5.65" height="1.5" fill="#f8f8f2"/>
<rect x="1143.85" y="346.0" width="1.88" height="1.5" fill="#f8f8f2"/>
<rect x="1145.73" y="346.0" width="3.76" height="1.5" fill="#f92672"/>
<rect x="1149.49" y="346.0" width="0.94" height="1.5" fill="#f8f8f2"/>
<rect x="1141.96" y="348.0" width="1.88" height="1.5" fill="#f8f8f2"/>
<rect x="1143.85" y="348.0" width="6.59" height="1.5" fill="#f92672"/>
<rect x="1150.44" y="348.0" width="0.94" height="1.5" fill="#f8f8f2"/>
<rect x="1141.96" y="350.0" width="0.94" height="1.5" fill="#f8f8f2"/>
<rect x="1142.91" y="350.0" width="6.59" height="1.5" fill="#f92672"/>
<rect x="1150.44" y="350.0" width="2.82" height="1.5" fill="#a6e22e"/>
<rect x="1153.26" y="350.0" width="0.94" height="1.5" fill="#f8f8f2"/>
<rect x="1154.20" y="350.0" width="21.65" height="1.5" fill="#e6db74"/>
<rect x="1176.79" y="350.0" width="11.29" height="1.5" fill="#a6e22e"/>
<rect x="1188.08" y="350.0" width="0.94" height="1.5" fill="#f8f8f2"/>
<rect x="1189.02" y="350.0" width="10.35" height="1.5" fill="#e6db74"/>
<rect x="1199.38" y="350.0" width="0.94" height="1.5" fill="#f8f8f2"/>
<rect x="1143.85" y="352.0" width="0.94" height="1.5" fill="#f8f8f2"/>
<rect x="1144.79" y="352.0" width="4.71" height="1.5" fill="#f92672"/>
<rect x="1149.49" y="352.0" width="1.88" height="1.5" fill="#f8f8f2"/>
<rect x="1143.85" y="354.0" width="0.94" height="1.5" fill="#f8f8f2"/>
<rect x="1144.79" y="354.0" width="3.76" height="1.5" fill="#f92672"/>
<rect x="1149.49" y="354.0" width="5.65" height="1.5" fill="#a6e22e"/>
<rect x="1155.14" y="354.0" width="0.94" height="1.5" fill="#f8f8f2"/>
<rect x="1156.08" y="354.0" width="6.59" height="1.5" fill="#e6db74"/>
<rect x="1162.67" y="354.0" width="8.47" height="1.5" fill="#f8f8f2"/>
<rect x="1172.08" y="354.0" width="9.41" height="1.5" fill="#f8f8f2"/>
<rect x="1181.49" y="354.0" width="3.76" height="1.5" fill="#f92672"/>
<rect x="1185.26" y="354.0" width="0.94" height="1.5" fill="#f8f8f2"/>
<rect x="1141.96" y="356.0" width="1.88" height="1.5" fill="#f8f8f2"/>
<rect x="1143.85" y="356.0" width="6.59" height="1.5" fill="#f92672"/>
<rect x="1150.44" y="356.0" width="0.94" height="1.5" fill="#f8f8f2"/>
<rect x="1141.96" y="358.0" width="0.94" height="1.5" fill="#f8f8f2"/>
<rect x="1142.91" y="358.0" width="6.59" height="1.5" fill="#f92672"/>
<rect x="1150.44" y="358.0" width="2.82" height="1.5" fill="#a6e22e"/>
<rect x="1153.26" y="358.0" width="0.94" height="1.5" fill="#f8f8f2"/>
<rect x="1154.20" y="358.0" width="19.76" height="1.5" fill="#e6db74"/>
<rect x="1174.91" y="358.0" width="11.29" height="1.5" fill="#a6e22e"/>
<rect x="1186.20" y="358.0" width="0.94" height="1.5" fill="#f8f8f2"/>
<rect x="1187.14" y="358.0" width="6.59" height="1.5" fill="#e6db74"/>
<rect x="1193.73" y="358.0" width="0.94" height="1.5" fill="#f8f8f2"/>
<rect x="1143.85" y="360.0" width="0.94" height="1.5" fill="#f8f8f2"/>
<rect x="1144.79" y="360.0" width="4.71" height="1.5" fill="#f92672"/>
<rect x="1149.49" y="360.0" width="38.59" height="1.5" fill="#f8f8f2"/>
<rect x="1188.08" y="360.0" width="4.71" height="1.5" fill="#f92672"/>
<rect x="1192.79" y="360.0" width="0.94" height="1.5" fill="#f8f8f2"/>
<rect x="1143.85" y="362.0" width="0.94" height="1.5" fill="#f8f8f2"/>
<rect x="1144.79" y="362.0" width="5.65" height="1.5" fill="#f92672"/>
<rect x="1150.44" y="362.0" width="22.59" height="1.5" fill="#f8f8f2"/>
<rect x="1173.02" y="362.0" width="5.65" height="1.5" fill="#f92672"/>
<rect x="1178.67" y="362.0" width="0.94" height="1.5" fill="#f8f8f2"/>
<rect x="1143.85" y="364.0" width="0.94" height="1.5" fill="#f8f8f2"/>
<rect x="1144.79" y="364.0" width="3.76" height="1.5" fill="#f92672"/>
<rect x="1149.49" y="364.0" width="5.65" height="1.5" fill="#a6e22e"/>
<rect x="1155.14" y="364.0" width="0.94" height="1.5" fill="#f8f8f2"/>
<rect x="1156.08" y="364.0" width="6.59" height="1.5" fill="#e6db74"/>
<rect x="1162.67" y="364.0" width="6.59" height="1.5" fill="#f8f8f2"/>
<rect x="1170.20" y="364.0" width="4.71" height="1.5" fill="#f8f8f2"/>
<rect x="1175.85" y="364.0" width="8.47" height="1.5" fill="#f8f8f2"/>
<rect x="1184.32" y="364.0" width="3.76" height="1.5" fill="#f92672"/>
<rect x="1188.08" y="364.0" width="0.94" height="1.5" fill="#f8f8f2"/>
<rect x="1141.96" y="366.0" width="1.88" height="1.5" fill="#f8f8f2"/>
<rect x="1143.85" y="366.0" width="6.59" height="1.5" fill="#f92672"/>
<rect x="1150.44" y="366.0" width="0.94" height="1.5" fill="#f8f8f2"/>
<rect x="1141.96" y="368.0" width="0.94" height="1.5" fill="#f8f8f2"/>
<rect x="1142.91" y="368.0" width="6.59" height="1.5" fill="#f92672"/>
<rect x="1150.44" y="368.0" width="2.82" height="1.5" fill="#a6e22e"/>
<rect x="1153.26" y="368.0" width="0.94" height="1.5" fill="#f8f8f2"/>
<rect x="1154.20" y="368.0" width="17.88" height="1.5" fill="#e6db74"/>
<rect x="1173.02" y="368.0" width="11.29" height="1.5" fill="#a6e22e"/>
<rect x="1184.32" y="368.0" width="0.94" height="1.5" fill="#f8f8f2"/>
<rect x="1185.26" y="368.0" width="10.35" height="1.5" fill="#e6db74"/>
<rect x="1195.61" y="368.0" width="0.94" height="1.5" fill="#f8f8f2"/>
<rect x="1143.85" y="370.0" width="0.94" height="1.5" fill="#f8f8f2"/>
<rect x="1144.79" y="370.0" width="4.71" height="1.5" fill="#f92672"/>
<rect x="1149.49" y="370.0" width="1.88" height="1.5" fill="#f8f8f2"/>
<rect x="1143.85" y="372.0" width="0.94" height="1.5" fill="#f8f8f2"/>
<rect x="1144.79" y="372.0" width="3.76" height="1.5" fill="#f92672"/>
<rect x="1149.49" y="372.0" width="5.65" height="1.5" fill="#a6e22e"/>
<rect x="1155.14" y="372.0" width="0.94" height="1.5" fill="#f8f8f2"/>
<rect x="1156.08" y="372.0" width="6.59" height="1.5" fill="#e6db74"/>
<rect x="1162.67" y="372.0" width="6.59" height="1.5" fill="#f8f8f2"/>
<rect x="1170.20" y="372.0" width="2.82" height="1.5" fill="#f8f8f2"/>
<rect x="1173.96" y="372.0" width="4.71" height="1.5" fill="#f8f8f2"/>
<rect x="1179.61" y="372.0" width="6.59" height="1.5" fill="#f8f8f2"/>
<rect x="1186.20" y="372.0" width="3.76" height="1.5" fill="#f92672"/>
<rect x="1189.96" y="372.0" width="0.94" height="1.5" fill="#f8f8f2"/>
<rect x="1141.96" y="374.0" width="1.88" height="1.5" fill="#f8f8f2"/>
<rect x="1143.85" y="374.0" width="6.59" height="1.5" fill="#f92672"/>
<rect x="1150.44" y="374.0" width="0.94" height="1.5" fill="#f8f8f2"/>
<rect x="1141.96" y="376.0" width="0.94" height="1.5" fill="#f8f8f2"/>
<rect x="1142.91" y="376.0" width="6.59" height="1.5" fill="#f92672"/>
<rect x="1150.44" y="376.0" width="2.82" height="1.5" fill="#a6e22e"/>
<rect x="1153.26" y="376.0" width="0.94" height="1.5" fill="#f8f8f2"/>
<rect x="1154.20" y="376.0" width="24.47" height="1.5" fill="#e6db74"/>
<rect x="1179.61" y="376.0" width="11.29" height="1.5" fill="#a6e22e"/>
<rect x="1190.91" y="376.0" width="0.94" height="1.5" fill="#f8f8f2"/>
<rect x="1191.85" y="376.0" width="5.65" height="1.5" fill="#e6db74"/>
<rect x="1197.49" y="376.0" width="0.94" height="1.5" fill="#f8f8f2"/>
<rect x="1143.85" y="378.0" width="0.94" height="1.5" fill="#f8f8f2"/>
<rect x="1144.79" y="378.0" width="4.71" height="1.5" fill="#f92672"/>
<rect x="1149.49" y="378.0" width="8.47" height="1.5" fill="#f8f8f2"/>
<rect x="1158.91" y="378.0" width="8.47" height="1.5" fill="#f8f8f2"/>
<rect x="1167.38" y="378.0" width="4.71" height="1.5" fill="#f92672"/>
<rect x="1172.08" y="378.0" width="0.94" height="1.5" fill="#f8f8f2"/>
<rect x="1143.85" y="380.0" width="0.94" height="1.5" fill="#f8f8f2"/>
<rect x="1144.79" y="380.0" width="3.76" height="1.5" fill="#f92672"/>
<rect x="1149.49" y="380.0" width="5.65" height="1.5" fill="#a6e22e"/>
<rect x="1155.14" y="380.0" width="0.94" height="1.5" fill="#f8f8f2"/>
<rect x="1156.08" y="380.0" width="6.59" height="1.5" fill="#e6db74"/>
<rect x="1162.67" y="380.0" width="8.47" height="1.5" fill="#f8f8f2"/>
<rect x="1172.08" y="380.0" width="7.53" height="1.5" fill="#f8f8f2"/>
<rect x="1179.61" y="380.0" width="3.76" height="1.5" fill="#f92672"/>
<rect x="1183.38" y="380.0" width="0.94" height="1.5" fill="#f8f8f2"/>
<rect x="1141.96" y="382.0" width="1.88" height="1.5" fill="#f8f8f2"/>
<rect x="1143.85" y="382.0" width="6.59" height="1.5" fill="#f92672"/>
<rect x="1150.44" y="382.0" width="0.94" height="1.5" fill="#f8f8f2"/>
<rect x="1141.96" y="384.0" width="0.94" height="1.5" fill="#f8f8f2"/>
<rect x="1142.91" y="384.0" width="6.59" height="1.5" fill="#f92672"/>
<rect x="1150.44" y="384.0" width="2.82" height="1.5" fill="#a6e22e"/>
<rect x="1153.26" y="384.0" width="0.94" height="1.5" fill="#f8f8f2"/>
<rect x="1154.20" y="384.0" width="26.35" height="1.5" fill="#e6db74"/>
<rect x="1181.49" y="384.0" width="11.29" height="1.5" fill="#a6e22e"/>
<rect x="1192.79" y="384.0" width="0.94" height="1.5" fill="#f8f8f2"/>
<rect x="1193.73" y="384.0" width="5.65" height="1.5" fill="#e6db74"/>
<rect x="1199.38" y="384.0" width="0.94" height="1.5" fill="#f8f8f2"/>
<rect x="1143.85" y="386.0" width="0.94" height="1.5" fill="#f8f8f2"/>
<rect x="1144.79" y="386.0" width="4.71" height="1.5" fill="#f92672"/>
<rect x="1149.49" y="386.0" width="8.47" height="1.5" fill="#f8f8f2"/>
<rect x="1158.91" y="386.0" width="4.71" height="1.5" fill="#f8f8f2"/>
<rect x="1164.55" y="386.0" width="4.71" height="1.5" fill="#f8f8f2"/>
<rect x="1170.20" y="386.0" width="6.59" height="1.5" fill="#f8f8f2"/>
<rect x="1177.73" y="386.0" width="6.59" height="1.5" fill="#f8f8f2"/>
<rect x="1184.32" y="386.0" width="4.71" height="1.5" fill="#f92672"/>
<rect x="1189.02" y="386.0" width="0.94" height="1.5" fill="#f8f8f2"/>
<rect x="1143.85" y="388.0" width="0.94" height="1.5" fill="#f8f8f2"/>
<rect x="1144.79" y="388.0" width="3.76" height="1.5" fill="#f92672"/>
<rect x="1149.49" y="388.0" width="5.65" height="1.5" fill="#a6e22e"/>
<rect x="1155.14" y="388.0" width="0.94" height="1.5" fill="#f8f8f2"/>
<rect x="1156.08" y="388.0" width="6.59" height="1.5" fill="#e6db74"/>
<rect x="1162.67" y="388.0" width="5.65" height="1.5" fill="#f8f8f2"/>
<rect x="1169.26" y="388.0" width="0.94" height="1.5" fill="#f8f8f2"/>
<rect x="1171.14" y="388.0" width="3.76" height="1.5" fill="#f8f8f2"/>
<rect x="1174.91" y="388.0" width="3.76" height="1.5" fill="#f92672"/>
<rect x="1178.67" y="388.0" width="0.94" height="1.5" fill="#f8f8f2"/>
<rect x="1141.96" y="390.0" width="1.88" height="1.5" fill="#f8f8f2"/>
<rect x="1143.85" y="390.0" width="6.59" height="1.5" fill="#f92672"/>
<rect x="1150.44" y="390.0" width="0.94" height="1.5" fill="#f8f8f2"/>
<rect x="1141.96" y="392.0" width="0.94" height="1.5" fill="#f8f8f2"/>
<rect x="1142.91" y="392.0" width="6.59" height="1.5" fill="#f92672"/>
<rect x="1150.44" y="392.0" width="2.82" height="1.5" fill="#a6e22e"/>
<rect x="1153.26" y="392.0" width="0.94" height="1.5" fill="#f8f8f2"/>
<rect x="1154.20" y="392.0" width="28.24" height="1.5" fill="#e6db74"/>
<rect x="1183.38" y="392.0" width="11.29" height="1.5" fill="#a6e22e"/>
<rect x="1194.67" y="392.0" width="0.94" height="1.5" fill="#f8f8f2"/>
<rect x="1195.61" y="392.0" width="5.65" height="1.5" fill="#e6db74"/>
<rect x="1201.26" y="392.0" width="0.94" height="1.5" fill="#f8f8f2"/>
<rect x="1143.85" y="394.0" width="0.94" height="1.5" fill="#f8f8f2"/>
<rect x="1144.79" y="394.0" width="4.71" height="1.5" fill="#f92672"/>
<rect x="1149.49" y="394.0" width="3.76" height="1.5" fill="#f8f8f2"/>
<rect x="1153.26" y="394.0" width="4.71" height="1.5" fill="#66d9ef"/>
<rect x="1157.96" y="394.0" width="0.94" height="1.5" fill="#f8f8f2"/>
<rect x="1158.91" y="394.0" width="4.71" height="1.5" fill="#e6db74"/>
<rect x="1164.55" y="394.0" width="5.65" height="1.5" fill="#e6db74"/>
<rect x="1171.14" y="394.0" width="5.65" height="1.5" fill="#e6db74"/>
<rect x="1177.73" y="394.0" width="8.47" height="1.5" fill="#e6db74"/>
<rect x="1187.14" y="394.0" width="7.53" height="1.5" fill="#e6db74"/>
<rect x="1195.61" y="394.0" width="7.53" height="1.5" fill="#e6db74"/>
<rect x="1204.08" y="394.0" width="5.65" height="1.5" fill="#e6db74"/>
<rect x="1210.67" y="394.0" width="5.65" height="1.5" fill="#e6db74"/>
<rect x="1217.26" y="394.0" width="7.53" height="1.5" fill="#e6db74"/>
<rect x="1225.73" y="394.0" width="5.65" height="1.5" fill="#e6db74"/>
<rect x="1232.32" y="394.0" width="5.65" height="1.5" fill="#e6db74"/>
<rect x="1238.91" y="394.0" width="7.53" height="1.5" fill="#e6db74"/>
<rect x="1247.38" y="394.0" width="5.65" height="1.5" fill="#e6db74"/>
<rect x="1253.96" y="394.0" width="3.76" height="1.5" fill="#e6db74"/>
<rect x="1143.85" y="396.0" width="6.59" height="1.5" fill="#e6db74"/>
<rect x="1151.38" y="396.0" width="6.59" height="1.5" fill="#e6db74"/>
<rect x="1158.91" y="396.0" width="1.88" height="1.5" fill="#e6db74"/>
<rect x="1138.20" y="398.0" width="5.65" height="1.5" fill="#e6db74"/>
<rect x="1144.79" y="398.0" width="0.94" height="1.5" fill="#e6db74"/>
<rect x="1146.67" y="398.0" width="7.53" height="1.5" fill="#e6db74"/>
<rect x="1155.14" y="398.0" width="5.65" height="1.5" fill="#e6db74"/>
<rect x="1161.73" y="398.0" width="5.65" height="1.5" fill="#e6db74"/>
<rect x="1168.32" y="398.0" width="5.65" height="1.5" fill="#e6db74"/>
<rect x="1174.91" y="398.0" width="4.71" height="1.5" fill="#e6db74"/>
<rect x="1180.55" y="398.0" width="4.71" height="1.5" fill="#e6db74"/>
<rect x="1186.20" y="398.0" width="7.53" height="1.5" fill="#e6db74"/>
<rect x="1194.67" y="398.0" width="7.53" height="1.5" fill="#e6db74"/>
<rect x="1203.14" y="398.0" width="4.71" height="1.5" fill="#e6db74"/>
<rect x="1208.79" y="398.0" width="8.47" height="1.5" fill="#e6db74"/>
<rect x="1218.20" y="398.0" width="7.53" height="1.5" fill="#e6db74"/>
<rect x="1226.67" y="398.0" width="6.59" height="1.5" fill="#e6db74"/>
<rect x="1234.20" y="398.0" width="5.65" height="1.5" fill="#e6db74"/>
<rect x="1240.79" y="398.0" width="1.88" height="1.5" fill="#e6db74"/>
<rect x="1242.67" y="398.0" width="4.71" height="1.5" fill="#f8f8f2"/>
<rect x="1247.38" y="398.0" width="4.71" height="1.5" fill="#f92672"/>
<rect x="1252.08" y="398.0" width="0.94" height="1.5" fill="#f8f8f2"/>
<rect x="1143.85" y="400.0" width="0.94" height="1.5" fill="#f8f8f2"/>
<rect x="1144.79" y="400.0" width="3.76" height="1.5" fill="#f92672"/>
<rect x="1149.49" y="400.0" width="5.65" height="1.5" fill="#a6e22e"/>
<rect x="1155.14" y="400.0" width="0.94" height="1.5" fill="#f8f8f2"/>
<rect x="1156.08" y="400.0" width="6.59" height="1.5" fill="#e6db74"/>
<rect x="1162.67" y="400.0" width="6.59" height="1.5" fill="#f8f8f2"/>
<rect x="1170.20" y="400.0" width="6.59" height="1.5" fill="#f8f8f2"/>
<rect x="1176.79" y="400.0" width="3.76" height="1.5" fill="#f92672"/>
<rect x="1180.55" y="400.0" width="0.94" height="1.5" fill="#f8f8f2"/>
<rect x="1141.96" y="402.0" width="1.88" height="1.5" fill="#f8f8f2"/>
<rect x="1143.85" y="402.0" width="6.59" height="1.5" fill="#f92672"/>
<rect x="1150.44" y="402.0" width="0.94" height="1.5" fill="#f8f8f2"/>
<rect x="1141.96" y="404.0" width="3.76" height="1.5" fill="#75715e"/>
<rect x="1146.67" y="404.0" width="8.47" height="1.5" fill="#75715e"/>
<rect x="1156.08" y="404.0" width="2.82" height="1.5" fill="#75715e"/>
<rect x="1141.96" y="406.0" width="0.94" height="1.5" fill="#f8f8f2"/>
<rect x="1142.91" y="406.0" width="6.59" height="1.5" fill="#f92672"/>
<rect x="1150.44" y="406.0" width="2.82" height="1.5" fill="#a6e22e"/>
<rect x="1153.26" y="406.0" width="0.94" height="1.5" fill="#f8f8f2"/>
<rect x="1154.20" y="406.0" width="18.82" height="1.5" fill="#e6db74"/>
<rect x="1173.96" y="406.0" width="11.29" height="1.5" fill="#a6e22e"/>
<rect x="1185.26" y="406.0" width="0.94" height="1.5" fill="#f8f8f2"/>
<rect x="1186.20" y="406.0" width="14.12" height="1.5" fill="#e6db74"/>
<rect x="1200.32" y="406.0" width="0.94" height="1.5" fill="#f8f8f2"/>
<rect x="1143.85" y="408.0" width="0.94" height="1.5" fill="#f8f8f2"/>
<rect x="1144.79" y="408.0" width="4.71" height="1.5" fill="#f92672"/>
<rect x="1149.49" y="408.0" width="6.59" height="1.5" fill="#f8f8f2"/>
<rect x="1156.08" y="408.0" width="4.71" height="1.5" fill="#f92672"/>
<rect x="1160.79" y="408.0" width="0.94" height="1.5" fill="#f8f8f2"/>
<rect x="1143.85" y="410.0" width="0.94" height="1.5" fill="#f8f8f2"/>
<rect x="1144.79" y="410.0" width="3.76" height="1.5" fill="#f92672"/>
<rect x="1149.49" y="410.0" width="5.65" height="1.5" fill="#a6e22e"/>
<rect x="1155.14" y="410.0" width="0.94" height="1.5" fill="#f8f8f2"/>
<rect x="1156.08" y="410.0" width="6.59" height="1.5" fill="#e6db74"/>
<rect x="1162.67" y="410.0" width="0.94" height="1.5" fill="#f8f8f2"/>
<rect x="1153.26" y="412.0" width="6.59" height="1.5" fill="#f8f8f2"/>
<rect x="1160.79" y="412.0" width="5.65" height="1.5" fill="#f8f8f2"/>
<rect x="1167.38" y="412.0" width="6.59" height="1.5" fill="#f8f8f2"/>
<rect x="1143.85" y="414.0" width="1.88" height="1.5" fill="#f8f8f2"/>
<rect x="1145.73" y="414.0" width="3.76" height="1.5" fill="#f92672"/>
<rect x="1149.49" y="414.0" width="0.94" height="1.5" fill="#f8f8f2"/>
<rect x="1141.96" y="416.0" width="1.88" height="1.5" fill="#f8f8f2"/>
<rect x="1143.85" y="416.0" width="6.59" height="1.5" fill="#f92672"/>
<rect x="1150.44" y="416.0" width="0.94" height="1.5" fill="#f8f8f2"/>
<rect x="1141.96" y="418.0" width="0.94" height="1.5" fill="#f8f8f2"/>
<rect x="1142.91" y="418.0" width="6.59" height="1.5" fill="#f92672"/>
<rect x="1150.44" y="418.0" width="2.82" height="1.5" fill="#a6e22e"/>
<rect x="1153.26" y="418.0" width="0.94" height="1.5" fill="#f8f8f2"/>
<rect x="1154.20" y="418.0" width="24.47" height="1.5" fill="#e6db74"/>
<rect x="1179.61" y="418.0" width="11.29" height="1.5" fill="#a6e22e"/>
<rect x="1190.91" y="418.0" width="0.94" height="1.5" fill="#f8f8f2"/>
<rect x="1191.85" y="418.0" width="10.35" height="1.5" fill="#e6db74"/>
<rect x="1202.20" y="418.0" width="0.94" height="1.5" fill="#f8f8f2"/>
<rect x="1143.85" y="420.0" width="0.94" height="1.5" fill="#f8f8f2"/>
<rect x="1144.79" y="420.0" width="4.71" height="1.5" fill="#f92672"/>
<rect x="1149.49" y="420.0" width="1.88" height="1.5" fill="#f8f8f2"/>
<rect x="1143.85" y="422.0" width="0.94" height="1.5" fill="#f8f8f2"/>
<rect x="1144.79" y="422.0" width="3.76" height="1.5" fill="#f92672"/>
<rect x="1149.49" y="422.0" width="5.65" height="1.5" fill="#a6e22e"/>
<rect x="1155.14" y="422.0" width="0.94" height="1.5" fill="#f8f8f2"/>
<rect x="1156.08" y="422.0" width="6.59" height="1.5" fill="#e6db74"/>
<rect x="1162.67" y="422.0" width="5.65" height="1.5" fill="#f8f8f2"/>
<rect x="1169.26" y="422.0" width="7.53" height="1.5" fill="#f8f8f2"/>
<rect x="1177.73" y="422.0" width="0.94" height="1.5" fill="#f8f8f2"/>
<rect x="1179.61" y="422.0" width="6.59" height="1.5" fill="#f8f8f2"/>
<rect x="1186.20" y="422.0" width="3.76" height="1.5" fill="#f92672"/>
<rect x="1189.96" y="422.0" width="0.94" height="1.5" fill="#f8f8f2"/>
<rect x="1141.96" y="424.0" width="1.88" height="1.5" fill="#f8f8f2"/>
<rect x="1143.85" y="424.0" width="6.59" height="1.5" fill="#f92672"/>
<rect x="1150.44" y="424.0" width="0.94" height="1.5" fill="#f8f8f2"/>
<rect x="1141.96" y="426.0" width="0.94" height="1.5" fill="#f8f8f2"/>
<rect x="1142.91" y="426.0" width="6.59" height="1.5" fill="#f92672"/>
<rect x="1150.44" y="426.0" width="2.82" height="1.5" fill="#a6e22e"/>
<rect x="1153.26" y="426.0" width="0.94" height="1.5" fill="#f8f8f2"/>
<rect x="1154.20" y="426.0" width="24.47" height="1.5" fill="#e6db74"/>
<rect x="1179.61" y="426.0" width="11.29" height="1.5" fill="#a6e22e"/>
<rect x="1190.91" y="426.0" width="0.94" height="1.5" fill="#f8f8f2"/>
<rect x="1191.85" y="426.0" width="6.59" height="1.5" fill="#e6db74"/>
<rect x="1198.44" y="426.0" width="0.94" height="1.5" fill="#f8f8f2"/>
<rect x="1143.85" y="428.0" width="0.94" height="1.5" fill="#f8f8f2"/>
<rect x="1144.79" y="428.0" width="4.71" height="1.5" fill="#f92672"/>
<rect x="1149.49" y="428.0" width="42.35" height="1.5" fill="#f8f8f2"/>
<rect x="1191.85" y="428.0" width="4.71" height="1.5" fill="#f92672"/>
<rect x="1196.55" y="428.0" width="0.94" height="1.5" fill="#f8f8f2"/>
<rect x="1143.85" y="430.0" width="0.94" height="1.5" fill="#f8f8f2"/>
<rect x="1144.79" y="430.0" width="6.59" height="1.5" fill="#f92672"/>
<rect x="1151.38" y="430.0" width="20.71" height="1.5" fill="#f8f8f2"/>
<rect x="1172.08" y="430.0" width="6.59" height="1.5" fill="#f92672"/>
<rect x="1178.67" y="430.0" width="0.94" height="1.5" fill="#f8f8f2"/>
<rect x="1143.85" y="432.0" width="0.94" height="1.5" fill="#f8f8f2"/>
<rect x="1144.79" y="432.0" width="3.76" height="1.5" fill="#f92672"/>
<rect x="1149.49" y="432.0" width="5.65" height="1.5" fill="#a6e22e"/>
<rect x="1155.14" y="432.0" width="0.94" height="1.5" fill="#f8f8f2"/>
<rect x="1156.08" y="432.0" width="6.59" height="1.5" fill="#e6db74"/>
<rect x="1162.67" y="432.0" width="6.59" height="1.5" fill="#f8f8f2"/>
<rect x="1170.20" y="432.0" width="6.59" height="1.5" fill="#f8f8f2"/>
<rect x="1176.79" y="432.0" width="3.76" height="1.5" fill="#f92672"/>
<rect x="1180.55" y="432.0" width="0.94" height="1.5" fill="#f8f8f2"/>
<rect x="1141.96" y="434.0" width="1.88" height="1.5" fill="#f8f8f2"/>
<rect x="1143.85" y="434.0" width="6.59" height="1.5" fill="#f92672"/>
<rect x="1150.44" y="434.0" width="0.94" height="1.5" fill="#f8f8f2"/>
<rect x="1141.96" y="436.0" width="0.94" height="1.5" fill="#f8f8f2"/>
<rect x="1142.91" y="436.0" width="6.59" height="1.5" fill="#f92672"/>
<rect x="1150.44" y="436.0" width="2.82" height="1.5" fill="#a6e22e"/>
<rect x="1153.26" y="436.0" width="0.94" height="1.5" fill="#f8f8f2"/>
<rect x="1154.20" y="436.0" width="24.47" height="1.5" fill="#e6db74"/>
<rect x="1179.61" y="436.0" width="11.29" height="1.5" fill="#a6e22e"/>
<rect x="1190.91" y="436.0" width="0.94" height="1.5" fill="#f8f8f2"/>
<rect x="1191.85" y="436.0" width="10.35" height="1.5" fill="#e6db74"/>
<rect x="1202.20" y="436.0" width="0.94" height="1.5" fill="#f8f8f2"/>
<rect x="1143.85" y="438.0" width="0.94" height="1.5" fill="#f8f8f2"/>
<rect x="1144.79" y="438.0" width="4.71" height="1.5" fill="#f92672"/>
<rect x="1149.49" y="438.0" width="1.88" height="1.5" fill="#f8f8f2"/>
<rect x="1143.85" y="440.0" width="0.94" height="1.5" fill="#f8f8f2"/>
<rect x="1144.79" y="440.0" width="3.76" height="1.5" fill="#f92672"/>
<rect x="1149.49" y="440.0" width="5.65" height="1.5" fill="#a6e22e"/>
<rect x="1155.14" y="440.0" width="0.94" height="1.5" fill="#f8f8f2"/>
<rect x="1156.08" y="440.0" width="6.59" height="1.5" fill="#e6db74"/>
<rect x="1162.67" y="440.0" width="6.59" height="1.5" fill="#f8f8f2"/>
<rect x="1170.20" y="440.0" width="8.47" height="1.5" fill="#f8f8f2"/>
<rect x="1178.67" y="440.0" width="3.76" height="1.5" fill="#f92672"/>
<rect x="1182.44" y="440.0" width="0.94" height="1.5" fill="#f8f8f2"/>
<rect x="1141.96" y="442.0" width="1.88" height="1.5" fill="#f8f8f2"/>
<rect x="1143.85" y="442.0" width="6.59" height="1.5" fill="#f92672"/>
<rect x="1150.44" y="442.0" width="0.94" height="1.5" fill="#f8f8f2"/>
<rect x="1141.96" y="444.0" width="0.94" height="1.5" fill="#f8f8f2"/>
<rect x="1142.91" y="444.0" width="6.59" height="1.5" fill="#f92672"/>
<rect x="1150.44" y="444.0" width="2.82" height="1.5" fill="#a6e22e"/>
<rect x="1153.26" y="444.0" width="0.94" height="1.5" fill="#f8f8f2"/>
<rect x="1154.20" y="444.0" width="24.47" height="1.5" fill="#e6db74"/>
<rect x="1179.61" y="444.0" width="11.29" height="1.5" fill="#a6e22e"/>
<rect x="1190.91" y="444.0" width="0.94" height="1.5" fill="#f8f8f2"/>
<rect x="1191.85" y="444.0" width="5.65" height="1.5" fill="#e6db74"/>
<rect x="1197.49" y="444.0" width="0.94" height="1.5" fill="#f8f8f2"/>
<rect x="1143.85" y="446.0" width="0.94" height="1.5" fill="#f8f8f2"/>
<rect x="1144.79" y="446.0" width="4.71" height="1.5" fill="#f92672"/>
<rect x="1149.49" y="446.0" width="5.65" height="1.5" fill="#f8f8f2"/>
<rect x="1156.08" y="446.0" width="7.53" height="1.5" fill="#f8f8f2"/>
<rect x="1164.55" y="446.0" width="4.71" height="1.5" fill="#f8f8f2"/>
<rect x="1170.20" y="446.0" width="3.76" height="1.5" fill="#f8f8f2"/>
<rect x="1173.96" y="446.0" width="4.71" height="1.5" fill="#f92672"/>
<rect x="1178.67" y="446.0" width="0.94" height="1.5" fill="#f8f8f2"/>
<rect x="1143.85" y="448.0" width="0.94" height="1.5" fill="#f8f8f2"/>
<rect x="1144.79" y="448.0" width="3.76" height="1.5" fill="#f92672"/>
<rect x="1149.49" y="448.0" width="5.65" height="1.5" fill="#a6e22e"/>
<rect x="1155.14" y="448.0" width="0.94" height="1.5" fill="#f8f8f2"/>
<rect x="1156.08" y="448.0" width="6.59" height="1.5" fill="#e6db74"/>
<rect x="1162.67" y="448.0" width="5.65" height="1.5" fill="#f8f8f2"/>
<rect x="1169.26" y="448.0" width="5.65" height="1.5" fill="#f8f8f2"/>
<rect x="1175.85" y="448.0" width="8.47" height="1.5" fill="#f8f8f2"/>
<rect x="1184.32" y="448.0" width="3.76" height="1.5" fill="#f92672"/>
<rect x="1188.08" y="448.0" width="0.94" height="1.5" fill="#f8f8f2"/>
<rect x="1141.96" y="450.0" width="1.88" height="1.5" fill="#f8f8f2"/>
<rect x="1143.85" y="450.0" width="6.59" height="1.5" fill="#f92672"/>
<rect x="1150.44" y="450.0" width="0.94" height="1.5" fill="#f8f8f2"/>
<rect x="1141.96" y="452.0" width="0.94" height="1.5" fill="#f8f8f2"/>
<rect x="1142.91" y="452.0" width="6.59" height="1.5" fill="#f92672"/>
<rect x="1150.44" y="452.0" width="2.82" height="1.5" fill="#a6e22e"/>
<rect x="1153.26" y="452.0" width="0.94" height="1.5" fill="#f8f8f2"/>
<rect x="1154.20" y="452.0" width="21.65" height="1.5" fill="#e6db74"/>
<rect x="1176.79" y="452.0" width="11.29" height="1.5" fill="#a6e22e"/>
<rect x="1188.08" y="452.0" width="0.94" height="1.5" fill="#f8f8f2"/>
<rect x="1189.02" y="452.0" width="5.65" height="1.5" fill="#e6db74"/>
<rect x="1194.67" y="452.0" width="0.94" height="1.5" fill="#f8f8f2"/>
<rect x="1143.85" y="454.0" width="0.94" height="1.5" fill="#f8f8f2"/>
<rect x="1144.79" y="454.0" width="4.71" height="1.5" fill="#f92672"/>
<rect x="1149.49" y="454.0" width="3.76" height="1.5" fill="#f8f8f2"/>
<rect x="1153.26" y="454.0" width="4.71" height="1.5" fill="#66d9ef"/>
<rect x="1157.96" y="454.0" width="0.94" height="1.5" fill="#f8f8f2"/>
<rect x="1158.91" y="454.0" width="5.65" height="1.5" fill="#e6db74"/>
<rect x="1165.49" y="454.0" width="8.47" height="1.5" fill="#e6db74"/>
<rect x="1174.91" y="454.0" width="6.59" height="1.5" fill="#e6db74"/>
<rect x="1182.44" y="454.0" width="5.65" height="1.5" fill="#e6db74"/>
<rect x="1189.02" y="454.0" width="5.65" height="1.5" fill="#e6db74"/>
<rect x="1195.61" y="454.0" width="7.53" height="1.5" fill="#e6db74"/>
<rect x="1204.08" y="454.0" width="8.47" height="1.5" fill="#e6db74"/>
<rect x="1213.49" y="454.0" width="6.59" height="1.5" fill="#e6db74"/>
<rect x="1221.02" y="454.0" width="5.65" height="1.5" fill="#e6db74"/>
<rect x="1227.61" y="454.0" width="5.65" height="1.5" fill="#e6db74"/>
<rect x="1234.20" y="454.0" width="4.71" height="1.5" fill="#e6db74"/>
<rect x="1239.85" y="454.0" width="7.53" height="1.5" fill="#e6db74"/>
<rect x="1248.32" y="454.0" width="7.53" height="1.5" fill="#e6db74"/>
<rect x="1256.79" y="454.0" width="3.76" height="1.5" fill="#e6db74"/>
<rect x="1143.85" y="456.0" width="5.65" height="1.5" fill="#e6db74"/>
<rect x="1150.44" y="456.0" width="2.82" height="1.5" fill="#e6db74"/>
<rect x="1154.20" y="456.0" width="5.65" height="1.5" fill="#e6db74"/>
<rect x="1160.79" y="456.0" width="4.71" height="1.5" fill="#e6db74"/>
<rect x="1166.44" y="456.0" width="2.82" height="1.5" fill="#e6db74"/>
<rect x="1170.20" y="456.0" width="4.71" height="1.5" fill="#e6db74"/>
<rect x="1138.20" y="458.0" width="4.71" height="1.5" fill="#e6db74"/>
<rect x="1138.20" y="460.0" width="0.94" height="1.5" fill="#e6db74"/>
<rect x="1140.08" y="460.0" width="5.65" height="1.5" fill="#e6db74"/>
<rect x="1146.67" y="460.0" width="7.53" height="1.5" fill="#e6db74"/>
<rect x="1155.14" y="460.0" width="7.53" height="1.5" fill="#e6db74"/>
<rect x="1163.61" y="460.0" width="5.65" height="1.5" fill="#e6db74"/>
<rect x="1170.20" y="460.0" width="1.88" height="1.5" fill="#e6db74"/>
<rect x="1173.02" y="460.0" width="5.65" height="1.5" fill="#e6db74"/>
<rect x="1179.61" y="460.0" width="7.53" height="1.5" fill="#e6db74"/>
<rect x="1188.08" y="460.0" width="7.53" height="1.5" fill="#e6db74"/>
<rect x="1196.55" y="460.0" width="8.47" height="1.5" fill="#e6db74"/>
<rect x="1205.96" y="460.0" width="5.65" height="1.5" fill="#e6db74"/>
<rect x="1212.55" y="460.0" width="8.47" height="1.5" fill="#e6db74"/>
<rect x="1221.96" y="460.0" width="6.59" height="1.5" fill="#e6db74"/>
<rect x="1138.20" y="462.0" width="4.71" height="1.5" fill="#e6db74"/>
<rect x="1138.20" y="464.0" width="8.47" height="1.5" fill="#e6db74"/>
<rect x="1147.61" y="464.0" width="8.47" height="1.5" fill="#e6db74"/>
<rect x="1157.02" y="464.0" width="5.65" height="1.5" fill="#e6db74"/>
<rect x="1163.61" y="464.0" width="2.82" height="1.5" fill="#e6db74"/>
<rect x="1167.38" y="464.0" width="7.53" height="1.5" fill="#e6db74"/>
<rect x="1175.85" y="464.0" width="5.65" height="1.5" fill="#e6db74"/>
<rect x="1182.44" y="464.0" width="0.94" height="1.5" fill="#e6db74"/>
<rect x="1184.32" y="464.0" width="1.88" height="1.5" fill="#e6db74"/>
<rect x="1187.14" y="464.0" width="4.71" height="1.5" fill="#e6db74"/>
<rect x="1192.79" y="464.0" width="5.65" height="1.5" fill="#e6db74"/>
<rect x="1199.38" y="464.0" width="8.47" height="1.5" fill="#e6db74"/>
<rect x="1208.79" y="464.0" width="5.65" height="1.5" fill="#e6db74"/>
<rect x="1215.38" y="464.0" width="7.53" height="1.5" fill="#e6db74"/>
<rect x="1223.85" y="464.0" width="8.47" height="1.5" fill="#e6db74"/>
<rect x="1233.26" y="464.0" width="7.53" height="1.5" fill="#e6db74"/>
<rect x="1241.73" y="464.0" width="5.65" height="1.5" fill="#e6db74"/>
<rect x="1248.32" y="464.0" width="5.65" height="1.5" fill="#e6db74"/>
<rect x="1254.91" y="464.0" width="5.65" height="1.5" fill="#e6db74"/>
<rect x="1138.20" y="466.0" width="8.47" height="1.5" fill="#e6db74"/>
<rect x="1147.61" y="466.0" width="4.71" height="1.5" fill="#e6db74"/>
<rect x="1153.26" y="466.0" width="4.71" height="1.5" fill="#e6db74"/>
<rect x="1158.91" y="466.0" width="5.65" height="1.5" fill="#e6db74"/>
<rect x="1165.49" y="466.0" width="4.71" height="1.5" fill="#e6db74"/>
<rect x="1171.14" y="466.0" width="5.65" height="1.5" fill="#e6db74"/>
<rect x="1177.73" y="466.0" width="0.94" height="1.5" fill="#e6db74"/>
<rect x="1179.61" y="466.0" width="5.65" height="1.5" fill="#e6db74"/>
<rect x="1186.20" y="466.0" width="4.71" height="1.5" fill="#e6db74"/>
<rect x="1191.85" y="466.0" width="5.65" height="1.5" fill="#e6db74"/>
<rect x="1198.44" y="466.0" width="4.71" height="1.5" fill="#e6db74"/>
<rect x="1204.08" y="466.0" width="2.82" height="1.5" fill="#e6db74"/>
<rect x="1206.91" y="466.0" width="4.71" height="1.5" fill="#f8f8f2"/>
<rect x="1211.61" y="466.0" width="4.71" height="1.5" fill="#f92672"/>
<rect x="1216.32" y="466.0" width="0.94" height="1.5" fill="#f8f8f2"/>
<rect x="1143.85" y="468.0" width="0.94" height="1.5" fill="#f8f8f2"/>
<rect x="1144.79" y="468.0" width="3.76" height="1.5" fill="#f92672"/>
<rect x="1149.49" y="468.0" width="5.65" height="1.5" fill="#a6e22e"/>
<rect x="1155.14" y="468.0" width="0.94" height="1.5" fill="#f8f8f2"/>
<rect x="1156.08" y="468.0" width="6.59" height="1.5" fill="#e6db74"/>
<rect x="1162.67" y="468.0" width="8.47" height="1.5" fill="#f8f8f2"/>
<rect x="1172.08" y="468.0" width="5.65" height="1.5" fill="#f8f8f2"/>
<rect x="1178.67" y="468.0" width="4.71" height="1.5" fill="#f8f8f2"/>
<rect x="1184.32" y="468.0" width="3.76" height="1.5" fill="#f8f8f2"/>
<rect x="1188.08" y="468.0" width="3.76" height="1.5" fill="#f92672"/>
<rect x="1191.85" y="468.0" width="0.94" height="1.5" fill="#f8f8f2"/>
<rect x="1141.96" y="470.0" width="1.88" height="1.5" fill="#f8f8f2"/>
<rect x="1143.85" y="470.0" width="6.59" height="1.5" fill="#f92672"/>
<rect x="1150.44" y="470.0" width="0.94" height="1.5" fill="#f8f8f2"/>
<rect x="1141.96" y="472.0" width="0.94" height="1.5" fill="#f8f8f2"/>
<rect x="1142.91" y="472.0" width="6.59" height="1.5" fill="#f92672"/>
<rect x="1150.44" y="472.0" width="2.82" height="1.5" fill="#a6e22e"/>
<rect x="1153.26" y="472.0" width="0.94" height="1.5" fill="#f8f8f2"/>
<rect x="1154.20" y="472.0" width="13.18" height="1.5" fill="#e6db74"/>
<rect x="1168.32" y="472.0" width="11.29" height="1.5" fill="#a6e22e"/>
<rect x="1179.61" y="472.0" width="0.94" height="1.5" fill="#f8f8f2"/>
<rect x="1180.55" y="472.0" width="5.65" height="1.5" fill="#e6db74"/>
<rect x="1186.20" y="472.0" width="0.94" height="1.5" fill="#f8f8f2"/>
<rect x="1143.85" y="474.0" width="0.94" height="1.5" fill="#f8f8f2"/>
<rect x="1144.79" y="474.0" width="4.71" height="1.5" fill="#f92672"/>
<rect x="1149.49" y="474.0" width="9.41" height="1.5" fill="#f8f8f2"/>
<rect x="1159.85" y="474.0" width="4.71" height="1.5" fill="#f8f8f2"/>
<rect x="1165.49" y="474.0" width="7.53" height="1.5" fill="#f8f8f2"/>
<rect x="1173.96" y="474.0" width="5.65" height="1.5" fill="#f8f8f2"/>
<rect x="1179.61" y="474.0" width="4.71" height="1.5" fill="#f92672"/>
<rect x="1184.32" y="474.0" width="0.94" height="1.5" fill="#f8f8f2"/>
<rect x="1143.85" y="476.0" width="0.94" height="1.5" fill="#f8f8f2"/>
<rect x="1144.79" y="476.0" width="3.76" height="1.5" fill="#f92672"/>
<rect x="1149.49" y="476.0" width="5.65" height="1.5" fill="#a6e22e"/>
<rect x="1155.14" y="476.0" width="0.94" height="1.5" fill="#f8f8f2"/>
<rect x="1156.08" y="476.0" width="6.59" height="1.5" fill="#e6db74"/>
<rect x="1162.67" y="476.0" width="7.53" height="1.5" fill="#f8f8f2"/>
<rect x="1171.14" y="476.0" width="5.65" height="1.5" fill="#f8f8f2"/>
<rect x="1176.79" y="476.0" width="3.76" height="1.5" fill="#f92672"/>
<rect x="1180.55" y="476.0" width="0.94" height="1.5" fill="#f8f8f2"/>
<rect x="1141.96" y="478.0" width="1.88" height="1.5" fill="#f8f8f2"/>
<rect x="1143.85" y="478.0" width="6.59" height="1.5" fill="#f92672"/>
<rect x="1150.44" y="478.0" width="0.94" height="1.5" fill="#f8f8f2"/>
<rect x="1141.96" y="480.0" width="0.94" height="1.5" fill="#f8f8f2"/>
<rect x="1142.91" y="480.0" width="6.59" height="1.5" fill="#f92672"/>
<rect x="1150.44" y="480.0" width="2.82" height="1.5" fill="#a6e22e"/>
<rect x="1153.26" y="480.0" width="0.94" height="1.5" fill="#f8f8f2"/>
<rect x="1154.20" y="480.0" width="22.59" height="1.5" fill="#e6db74"/>
<rect x="1177.73" y="480.0" width="11.29" height="1.5" fill="#a6e22e"/>
<rect x="1189.02" y="480.0" width="0.94" height="1.5" fill="#f8f8f2"/>
<rect x="1189.96" y="480.0" width="5.65" height="1.5" fill="#e6db74"/>
<rect x="1195.61" y="480.0" width="0.94" height="1.5" fill="#f8f8f2"/>
<rect x="1143.85" y="482.0" width="0.94" height="1.5" fill="#f8f8f2"/>
<rect x="1144.79" y="482.0" width="4.71" height="1.5" fill="#f92672"/>
<rect x="1149.49" y="482.0" width="4.71" height="1.5" fill="#f8f8f2"/>
<rect x="1154.20" y="482.0" width="4.71" height="1.5" fill="#f92672"/>
<rect x="1158.91" y="482.0" width="0.94" height="1.5" fill="#f8f8f2"/>
<rect x="1143.85" y="484.0" width="0.94" height="1.5" fill="#f8f8f2"/>
<rect x="1144.79" y="484.0" width="3.76" height="1.5" fill="#f92672"/>
<rect x="1149.49" y="484.0" width="5.65" height="1.5" fill="#a6e22e"/>
<rect x="1155.14" y="484.0" width="0.94" height="1.5" fill="#f8f8f2"/>
<rect x="1156.08" y="484.0" width="6.59" height="1.5" fill="#e6db74"/>
<rect x="1162.67" y="484.0" width="7.53" height="1.5" fill="#f8f8f2"/>
<rect x="1171.14" y="484.0" width="1.88" height="1.5" fill="#f8f8f2"/>
<rect x="1173.96" y="484.0" width="6.59" height="1.5" fill="#f8f8f2"/>
<rect x="1180.55" y="484.0" width="3.76" height="1.5" fill="#f92672"/>
<rect x="1184.32" y="484.0" width="0.94" height="1.5" fill="#f8f8f2"/>
<rect x="1141.96" y="486.0" width="1.88" height="1.5" fill="#f8f8f2"/>
<rect x="1143.85" y="486.0" width="6.59" height="1.5" fill="#f92672"/>
<rect x="1150.44" y="486.0" width="0.94" height="1.5" fill="#f8f8f2"/>
<rect x="1141.96" y="488.0" width="3.76" height="1.5" fill="#75715e"/>
<rect x="1146.67" y="488.0" width="5.65" height="1.5" fill="#75715e"/>
<rect x="1153.26" y="488.0" width="3.76" height="1.5" fill="#75715e"/>
<rect x="1157.96" y="488.0" width="2.82" height="1.5" fill="#75715e"/>
<rect x="1141.96" y="490.0" width="0.94" height="1.5" fill="#f8f8f2"/>
<rect x="1142.91" y="490.0" width="6.59" height="1.5" fill="#f92672"/>
<rect x="1150.44" y="490.0" width="2.82" height="1.5" fill="#a6e22e"/>
<rect x="1153.26" y="490.0" width="0.94" height="1.5" fill="#f8f8f2"/>
<rect x="1154.20" y="490.0" width="30.12" height="1.5" fill="#e6db74"/>
<rect x="1185.26" y="490.0" width="11.29" height="1.5" fill="#a6e22e"/>
<rect x="1196.55" y="490.0" width="0.94" height="1.5" fill="#f8f8f2"/>
<rect x="1197.49" y="490.0" width="14.12" height="1.5" fill="#e6db74"/>
<rect x="1211.61" y="490.0" width="0.94" height="1.5" fill="#f8f8f2"/>
<rect x="1143.85" y="492.0" width="0.94" height="1.5" fill="#f8f8f2"/>
<rect x="1144.79" y="492.0" width="4.71" height="1.5" fill="#f92672"/>
<rect x="1149.49" y="492.0" width="6.59" height="1.5" fill="#f8f8f2"/>
<rect x="1156.08" y="492.0" width="4.71" height="1.5" fill="#f92672"/>
<rect x="1160.79" y="492.0" width="0.94" height="1.5" fill="#f8f8f2"/>
<rect x="1143.85" y="494.0" width="0.94" height="1.5" fill="#f8f8f2"/>
<rect x="1144.79" y="494.0" width="3.76" height="1.5" fill="#f92672"/>
<rect x="1149.49" y="494.0" width="5.65" height="1.5" fill="#a6e22e"/>
<rect x="1155.14" y="494.0" width="0.94" height="1.5" fill="#f8f8f2"/>
<rect x="1156.08" y="494.0" width="6.59" height="1.5" fill="#e6db74"/>
<rect x="1162.67" y="494.0" width="0.94" height="1.5" fill="#f8f8f2"/>
<rect x="1153.26" y="496.0" width="6.59" height="1.5" fill="#f8f8f2"/>
<rect x="1160.79" y="496.0" width="8.47" height="1.5" fill="#f8f8f2"/>
<rect x="1170.20" y="496.0" width="3.76" height="1.5" fill="#f8f8f2"/>
<rect x="1143.85" y="498.0" width="1.88" height="1.5" fill="#f8f8f2"/>
<rect x="1145.73" y="498.0" width="3.76" height="1.5" fill="#f92672"/>
<rect x="1149.49" y="498.0" width="0.94" height="1.5" fill="#f8f8f2"/>
<rect x="1141.96" y="500.0" width="1.88" height="1.5" fill="#f8f8f2"/>
<rect x="1143.85" y="500.0" width="6.59" height="1.5" fill="#f92672"/>
<rect x="1150.44" y="500.0" width="0.94" height="1.5" fill="#f8f8f2"/>
<rect x="1141.96" y="502.0" width="0.94" height="1.5" fill="#f8f8f2"/>
<rect x="1142.91" y="502.0" width="6.59" height="1.5" fill="#f92672"/>
<rect x="1150.44" y="502.0" width="2.82" height="1.5" fill="#a6e22e"/>
<rect x="1153.26" y="502.0" width="0.94" height="1.5" fill="#f8f8f2"/>
<rect x="1154.20" y="502.0" width="17.88" height="1.5" fill="#e6db74"/>
<rect x="1173.02" y="502.0" width="11.29" height="1.5" fill="#a6e22e"/>
<rect x="1184.32" y="502.0" width="0.94" height="1.5" fill="#f8f8f2"/>
<rect x="1185.26" y="502.0" width="10.35" height="1.5" fill="#e6db74"/>
<rect x="1195.61" y="502.0" width="0.94" height="1.5" fill="#f8f8f2"/>
<rect x="1143.85" y="504.0" width="0.94" height="1.5" fill="#f8f8f2"/>
<rect x="1144.79" y="504.0" width="4.71" height="1.5" fill="#f92672"/>
<rect x="1149.49" y="504.0" width="1.88" height="1.5" fill="#f8f8f2"/>
<rect x="1143.85" y="506.0" width="0.94" height="1.5" fill="#f8f8f2"/>
<rect x="1144.79" y="506.0" width="3.76" height="1.5" fill="#f92672"/>
<rect x="1149.49" y="506.0" width="5.65" height="1.5" fill="#a6e22e"/>
<rect x="1155.14" y="506.0" width="0.94" height="1.5" fill="#f8f8f2"/>
<rect x="1156.08" y="506.0" width="6.59" height="1.5" fill="#e6db74"/>
<rect x="1162.67" y="506.0" width="6.59" height="1.5" fill="#f8f8f2"/>
<rect x="1170.20" y="506.0" width="8.47" height="1.5" fill="#f8f8f2"/>
<rect x="1178.67" y="506.0" width="3.76" height="1.5" fill="#f92672"/>
<rect x="1182.44" y="506.0" width="0.94" height="1.5" fill="#f8f8f2"/>
<rect x="1141.96" y="508.0" width="1.88" height="1.5" fill="#f8f8f2"/>
<rect x="1143.85" y="508.0" width="6.59" height="1.5" fill="#f92672"/>
<rect x="1150.44" y="508.0" width="0.94" height="1.5" fill="#f8f8f2"/>
<rect x="1141.96" y="510.0" width="0.94" height="1.5" fill="#f8f8f2"/>
<rect x="1142.91" y="510.0" width="6.59" height="1.5" fill="#f92672"/>
<rect x="1150.44" y="510.0" width="2.82" height="1.5" fill="#a6e22e"/>
<rect x="1153.26" y="510.0" width="0.94" height="1.5" fill="#f8f8f2"/>
<rect x="1154.20" y="510.0" width="22.59" height="1.5" fill="#e6db74"/>
<rect x="1177.73" y="510.0" width="11.29" height="1.5" fill="#a6e22e"/>
<rect x="1189.02" y="510.0" width="0.94" height="1.5" fill="#f8f8f2"/>
<rect x="1189.96" y="510.0" width="6.59" height="1.5" fill="#e6db74"/>
<rect x="1196.55" y="510.0" width="0.94" height="1.5" fill="#f8f8f2"/>
<rect x="1143.85" y="512.0" width="0.94" height="1.5" fill="#f8f8f2"/>
<rect x="1144.79" y="512.0" width="4.71" height="1.5" fill="#f92672"/>
<rect x="1149.49" y="512.0" width="41.41" height="1.5" fill="#f8f8f2"/>
<rect x="1190.91" y="512.0" width="4.71" height="1.5" fill="#f92672"/>
<rect x="1195.61" y="512.0" width="0.94" height="1.5" fill="#f8f8f2"/>
<rect x="1143.85" y="514.0" width="0.94" height="1.5" fill="#f8f8f2"/>
<rect x="1144.79" y="514.0" width="6.59" height="1.5" fill="#f92672"/>
<rect x="1151.38" y="514.0" width="20.71" height="1.5" fill="#f8f8f2"/>
<rect x="1172.08" y="514.0" width="6.59" height="1.5" fill="#f92672"/>
<rect x="1178.67" y="514.0" width="0.94" height="1.5" fill="#f8f8f2"/>
<rect x="1143.85" y="516.0" width="0.94" height="1.5" fill="#f8f8f2"/>
<rect x="1144.79" y="516.0" width="3.76" height="1.5" fill="#f92672"/>
<rect x="1149.49" y="516.0" width="5.65" height="1.5" fill="#a6e22e"/>
<rect x="1155.14" y="516.0" width="0.94" height="1.5" fill="#f8f8f2"/>
<rect x="1156.08" y="516.0" width="6.59" height="1.5" fill="#e6db74"/>
<rect x="1162.67" y="516.0" width="6.59" height="1.5" fill="#f8f8f2"/>
<rect x="1170.20" y="516.0" width="7.53" height="1.5" fill="#f8f8f2"/>
<rect x="1178.67" y="516.0" width="4.71" height="1.5" fill="#f8f8f2"/>
<rect x="1183.38" y="516.0" width="3.76" height="1.5" fill="#f92672"/>
<rect x="1187.14" y="516.0" width="0.94" height="1.5" fill="#f8f8f2"/>
<rect x="1141.96" y="518.0" width="1.88" height="1.5" fill="#f8f8f2"/>
<rect x="1143.85" y="518.0" width="6.59" height="1.5" fill="#f92672"/>
<rect x="1150.44" y="518.0" width="0.94" height="1.5" fill="#f8f8f2"/>
<rect x="1141.96" y="520.0" width="0.94" height="1.5" fill="#f8f8f2"/>
<rect x="1142.91" y="520.0" width="6.59" height="1.5" fill="#f92672"/>
<rect x="1150.44" y="520.0" width="2.82" height="1.5" fill="#a6e22e"/>
<rect x="1153.26" y="520.0" width="0.94" height="1.5" fill="#f8f8f2"/>
<rect x="1154.20" y="520.0" width="24.47" height="1.5" fill="#e6db74"/>
<rect x="1179.61" y="520.0" width="11.29" height="1.5" fill="#a6e22e"/>
<rect x="1190.91" y="520.0" width="0.94" height="1.5" fill="#f8f8f2"/>
<rect x="1191.85" y="520.0" width="10.35" height="1.5" fill="#e6db74"/>
<rect x="1202.20" y="520.0" width="0.94" height="1.5" fill="#f8f8f2"/>
<rect x="1143.85" y="522.0" width="0.94" height="1.5" fill="#f8f8f2"/>
<rect x="1144.79" y="522.0" width="4.71" height="1.5" fill="#f92672"/>
<rect x="1149.49" y="522.0" width="1.88" height="1.5" fill="#f8f8f2"/>
<rect x="1143.85" y="524.0" width="0.94" height="1.5" fill="#f8f8f2"/>
<rect x="1144.79" y="524.0" width="3.76" height="1.5" fill="#f92672"/>
<rect x="1149.49" y="524.0" width="5.65" height="1.5" fill="#a6e22e"/>
<rect x="1155.14" y="524.0" width="0.94" height="1.5" fill="#f8f8f2"/>
<rect x="1156.08" y="524.0" width="6.59" height="1.5" fill="#e6db74"/>
<rect x="1162.67" y="524.0" width="8.47" height="1.5" fill="#f8f8f2"/>
<rect x="1172.08" y="524.0" width="4.71" height="1.5" fill="#f8f8f2"/>
<rect x="1176.79" y="524.0" width="3.76" height="1.5" fill="#f92672"/>
<rect x="1180.55" y="524.0" width="0.94" height="1.5" fill="#f8f8f2"/>
<rect x="1141.96" y="526.0" width="1.88" height="1.5" fill="#f8f8f2"/>
<rect x="1143.85" y="526.0" width="6.59" height="1.5" fill="#f92672"/>
<rect x="1150.44" y="526.0" width="0.94" height="1.5" fill="#f8f8f2"/>
<rect x="1141.96" y="528.0" width="0.94" height="1.5" fill="#f8f8f2"/>
<rect x="1142.91" y="528.0" width="6.59" height="1.5" fill="#f92672"/>
<rect x="1150.44" y="528.0" width="2.82" height="1.5" fill="#a6e22e"/>
<rect x="1153.26" y="528.0" width="0.94" height="1.5" fill="#f8f8f2"/>
<rect x="1154.20" y="528.0" width="26.35" height="1.5" fill="#e6db74"/>
<rect x="1181.49" y="528.0" width="11.29" height="1.5" fill="#a6e22e"/>
<rect x="1192.79" y="528.0" width="0.94" height="1.5" fill="#f8f8f2"/>
<rect x="1193.73" y="528.0" width="5.65" height="1.5" fill="#e6db74"/>
<rect x="1199.38" y="528.0" width="0.94" height="1.5" fill="#f8f8f2"/>
<rect x="1143.85" y="530.0" width="0.94" height="1.5" fill="#f8f8f2"/>
<rect x="1144.79" y="530.0" width="4.71" height="1.5" fill="#f92672"/>
<rect x="1149.49" y="530.0" width="3.76" height="1.5" fill="#f8f8f2"/>
<rect x="1153.26" y="530.0" width="4.71" height="1.5" fill="#66d9ef"/>
<rect x="1157.96" y="530.0" width="0.94" height="1.5" fill="#f8f8f2"/>
<rect x="1158.91" y="530.0" width="5.65" height="1.5" fill="#e6db74"/>
<rect x="1165.49" y="530.0" width="4.71" height="1.5" fill="#e6db74"/>
<rect x="1171.14" y="530.0" width="8.47" height="1.5" fill="#e6db74"/>
<rect x="1179.61" y="530.0" width="4.71" height="1.5" fill="#f8f8f2"/>
<rect x="1184.32" y="530.0" width="4.71" height="1.5" fill="#f92672"/>
<rect x="1189.02" y="530.0" width="0.94" height="1.5" fill="#f8f8f2"/>
<rect x="1143.85" y="532.0" width="0.94" height="1.5" fill="#f8f8f2"/>
<rect x="1144.79" y="532.0" width="3.76" height="1.5" fill="#f92672"/>
<rect x="1149.49" y="532.0" width="5.65" height="1.5" fill="#a6e22e"/>
<rect x="1155.14" y="532.0" width="0.94" height="1.5" fill="#f8f8f2"/>
<rect x="1156.08" y="532.0" width="6.59" height="1.5" fill="#e6db74"/>
<rect x="1162.67" y="532.0" width="8.47" height="1.5" fill="#f8f8f2"/>
<rect x="1172.08" y="532.0" width="7.53" height="1.5" fill="#f8f8f2"/>
<rect x="1180.55" y="532.0" width="6.59" height="1.5" fill="#f8f8f2"/>
<rect x="1187.14" y="532.0" width="3.76" height="1.5" fill="#f92672"/>
<rect x="1190.91" y="532.0" width="0.94" height="1.5" fill="#f8f8f2"/>
<rect x="1141.96" y="534.0" width="1.88" height="1.5" fill="#f8f8f2"/>
<rect x="1143.85" y="534.0" width="6.59" height="1.5" fill="#f92672"/>
<rect x="1150.44" y="534.0" width="0.94" height="1.5" fill="#f8f8f2"/>
<rect x="1141.96" y="536.0" width="0.94" height="1.5" fill="#f8f8f2"/>
<rect x="1142.91" y="536.0" width="6.59" height="1.5" fill="#f92672"/>
<rect x="1150.44" y="536.0" width="2.82" height="1.5" fill="#a6e22e"/>
<rect x="1153.26" y="536.0" width="0.94" height="1.5" fill="#f8f8f2"/>
<rect x="1154.20" y="536.0" width="23.53" height="1.5" fill="#e6db74"/>
<rect x="1178.67" y="536.0" width="11.29" height="1.5" fill="#a6e22e"/>
<rect x="1189.96" y="536.0" width="0.94" height="1.5" fill="#f8f8f2"/>
<rect x="1190.91" y="536.0" width="5.65" height="1.5" fill="#e6db74"/>
<rect x="1196.55" y="536.0" width="0.94" height="1.5" fill="#f8f8f2"/>
<rect x="1143.85" y="538.0" width="0.94" height="1.5" fill="#f8f8f2"/>
<rect x="1144.79" y="538.0" width="4.71" height="1.5" fill="#f92672"/>
<rect x="1149.49" y="538.0" width="3.76" height="1.5" fill="#f8f8f2"/>
<rect x="1153.26" y="538.0" width="4.71" height="1.5" fill="#66d9ef"/>
<rect x="1157.96" y="538.0" width="0.94" height="1.5" fill="#f8f8f2"/>
<rect x="1158.91" y="538.0" width="3.76" height="1.5" fill="#e6db74"/>
<rect x="1163.61" y="538.0" width="4.71" height="1.5" fill="#e6db74"/>
<rect x="1169.26" y="538.0" width="5.65" height="1.5" fill="#e6db74"/>
<rect x="1175.85" y="538.0" width="5.65" height="1.5" fill="#e6db74"/>
<rect x="1182.44" y="538.0" width="5.65" height="1.5" fill="#e6db74"/>
<rect x="1189.02" y="538.0" width="5.65" height="1.5" fill="#e6db74"/>
<rect x="1195.61" y="538.0" width="4.71" height="1.5" fill="#e6db74"/>
<rect x="1201.26" y="538.0" width="6.59" height="1.5" fill="#e6db74"/>
<rect x="1208.79" y="538.0" width="7.53" height="1.5" fill="#e6db74"/>
<rect x="1217.26" y="538.0" width="5.65" height="1.5" fill="#e6db74"/>
<rect x="1223.85" y="538.0" width="0.94" height="1.5" fill="#e6db74"/>
<rect x="1225.73" y="538.0" width="4.71" height="1.5" fill="#e6db74"/>
<rect x="1231.38" y="538.0" width="0.94" height="1.5" fill="#e6db74"/>
<rect x="1233.26" y="538.0" width="5.65" height="1.5" fill="#e6db74"/>
<rect x="1239.85" y="538.0" width="4.71" height="1.5" fill="#e6db74"/>
<rect x="1245.49" y="538.0" width="5.65" height="1.5" fill="#e6db74"/>
<rect x="1252.08" y="538.0" width="5.65" height="1.5" fill="#e6db74"/>
<rect x="1258.67" y="538.0" width="1.88" height="1.5" fill="#e6db74"/>
<rect x="1143.85" y="540.0" width="5.65" height="1.5" fill="#e6db74"/>
<rect x="1150.44" y="540.0" width="4.71" height="1.5" fill="#e6db74"/>
<rect x="1156.08" y="540.0" width="5.65" height="1.5" fill="#e6db74"/>
<rect x="1162.67" y="540.0" width="1.88" height="1.5" fill="#e6db74"/>
<rect x="1138.20" y="542.0" width="7.53" height="1.5" fill="#e6db74"/>
<rect x="1146.67" y="542.0" width="1.88" height="1.5" fill="#e6db74"/>
<rect x="1149.49" y="542.0" width="4.71" height="1.5" fill="#e6db74"/>
<rect x="1155.14" y="542.0" width="7.53" height="1.5" fill="#e6db74"/>
<rect x="1163.61" y="542.0" width="5.65" height="1.5" fill="#e6db74"/>
<rect x="1170.20" y="542.0" width="0.94" height="1.5" fill="#e6db74"/>
<rect x="1172.08" y="542.0" width="5.65" height="1.5" fill="#e6db74"/>
<rect x="1178.67" y="542.0" width="6.59" height="1.5" fill="#e6db74"/>
<rect x="1186.20" y="542.0" width="8.47" height="1.5" fill="#e6db74"/>
<rect x="1195.61" y="542.0" width="7.53" height="1.5" fill="#e6db74"/>
<rect x="1204.08" y="542.0" width="5.65" height="1.5" fill="#e6db74"/>
<rect x="1210.67" y="542.0" width="6.59" height="1.5" fill="#e6db74"/>
<rect x="1138.20" y="544.0" width="1.88" height="1.5" fill="#e6db74"/>
<rect x="1141.02" y="544.0" width="1.88" height="1.5" fill="#e6db74"/>
<rect x="1138.20" y="546.0" width="7.53" height="1.5" fill="#e6db74"/>
<rect x="1146.67" y="546.0" width="0.94" height="1.5" fill="#e6db74"/>
<rect x="1148.55" y="546.0" width="5.65" height="1.5" fill="#e6db74"/>
<rect x="1155.14" y="546.0" width="5.65" height="1.5" fill="#e6db74"/>
<rect x="1161.73" y="546.0" width="2.82" height="1.5" fill="#e6db74"/>
<rect x="1165.49" y="546.0" width="6.59" height="1.5" fill="#e6db74"/>
<rect x="1172.08" y="546.0" width="4.71" height="1.5" fill="#f8f8f2"/>
<rect x="1176.79" y="546.0" width="4.71" height="1.5" fill="#f92672"/>
<rect x="1181.49" y="546.0" width="0.94" height="1.5" fill="#f8f8f2"/>
<rect x="1143.85" y="548.0" width="0.94" height="1.5" fill="#f8f8f2"/>
<rect x="1144.79" y="548.0" width="3.76" height="1.5" fill="#f92672"/>
<rect x="1149.49" y="548.0" width="5.65" height="1.5" fill="#a6e22e"/>
<rect x="1155.14" y="548.0" width="0.94" height="1.5" fill="#f8f8f2"/>
<rect x="1156.08" y="548.0" width="6.59" height="1.5" fill="#e6db74"/>
<rect x="1162.67" y="548.0" width="4.71" height="1.5" fill="#f8f8f2"/>
<rect x="1168.32" y="548.0" width="6.59" height="1.5" fill="#f8f8f2"/>
<rect x="1174.91" y="548.0" width="3.76" height="1.5" fill="#f92672"/>
<rect x="1178.67" y="548.0" width="0.94" height="1.5" fill="#f8f8f2"/>
<rect x="1141.96" y="550.0" width="1.88" height="1.5" fill="#f8f8f2"/>
<rect x="1143.85" y="550.0" width="6.59" height="1.5" fill="#f92672"/>
<rect x="1150.44" y="550.0" width="0.94" height="1.5" fill="#f8f8f2"/>
<rect x="1141.96" y="552.0" width="0.94" height="1.5" fill="#f8f8f2"/>
<rect x="1142.91" y="552.0" width="6.59" height="1.5" fill="#f92672"/>
<rect x="1150.44" y="552.0" width="2.82" height="1.5" fill="#a6e22e"/>
<rect x="1153.26" y="552.0" width="0.94" height="1.5" fill="#f8f8f2"/>
<rect x="1154.20" y="552.0" width="28.24" height="1.5" fill="#e6db74"/>
<rect x="1183.38" y="552.0" width="11.29" height="1.5" fill="#a6e22e"/>
<rect x="1194.67" y="552.0" width="0.94" height="1.5" fill="#f8f8f2"/>
<rect x="1195.61" y="552.0" width="5.65" height="1.5" fill="#e6db74"/>
<rect x="1201.26" y="552.0" width="0.94" height="1.5" fill="#f8f8f2"/>
<rect x="1143.85" y="554.0" width="0.94" height="1.5" fill="#f8f8f2"/>
<rect x="1144.79" y="554.0" width="4.71" height="1.5" fill="#f92672"/>
<rect x="1149.49" y="554.0" width="3.76" height="1.5" fill="#f8f8f2"/>
<rect x="1153.26" y="554.0" width="4.71" height="1.5" fill="#66d9ef"/>
<rect x="1157.96" y="554.0" width="0.94" height="1.5" fill="#f8f8f2"/>
<rect x="1158.91" y="554.0" width="4.71" height="1.5" fill="#e6db74"/>
<rect x="1164.55" y="554.0" width="5.65" height="1.5" fill="#e6db74"/>
<rect x="1171.14" y="554.0" width="5.65" height="1.5" fill="#e6db74"/>
<rect x="1177.73" y="554.0" width="5.65" height="1.5" fill="#e6db74"/>
<rect x="1184.32" y="554.0" width="5.65" height="1.5" fill="#e6db74"/>
<rect x="1190.91" y="554.0" width="2.82" height="1.5" fill="#e6db74"/>
<rect x="1194.67" y="554.0" width="6.59" height="1.5" fill="#e6db74"/>
<rect x="1202.20" y="554.0" width="8.47" height="1.5" fill="#e6db74"/>
<rect x="1211.61" y="554.0" width="6.59" height="1.5" fill="#e6db74"/>
<rect x="1219.14" y="554.0" width="5.65" height="1.5" fill="#e6db74"/>
<rect x="1225.73" y="554.0" width="5.65" height="1.5" fill="#e6db74"/>
<rect x="1232.32" y="554.0" width="7.53" height="1.5" fill="#e6db74"/>
<rect x="1240.79" y="554.0" width="6.59" height="1.5" fill="#e6db74"/>
<rect x="1143.85" y="556.0" width="7.53" height="1.5" fill="#e6db74"/>
<rect x="1152.32" y="556.0" width="7.53" height="1.5" fill="#e6db74"/>
<rect x="1160.79" y="556.0" width="3.76" height="1.5" fill="#e6db74"/>
<rect x="1138.20" y="558.0" width="8.47" height="1.5" fill="#e6db74"/>
<rect x="1147.61" y="558.0" width="4.71" height="1.5" fill="#e6db74"/>
<rect x="1153.26" y="558.0" width="5.65" height="1.5" fill="#e6db74"/>
<rect x="1159.85" y="558.0" width="8.47" height="1.5" fill="#e6db74"/>
<rect x="1169.26" y="558.0" width="4.71" height="1.5" fill="#e6db74"/>
<rect x="1174.91" y="558.0" width="5.65" height="1.5" fill="#e6db74"/>
<rect x="1181.49" y="558.0" width="7.53" height="1.5" fill="#e6db74"/>
<rect x="1189.96" y="558.0" width="6.59" height="1.5" fill="#e6db74"/>
<rect x="1197.49" y="558.0" width="4.71" height="1.5" fill="#e6db74"/>
<rect x="1203.14" y="558.0" width="4.71" height="1.5" fill="#e6db74"/>
<rect x="1138.20" y="560.0" width="4.71" height="1.5" fill="#e6db74"/>
<rect x="1138.20" y="562.0" width="5.65" height="1.5" fill="#e6db74"/>
<rect x="1144.79" y="562.0" width="0.94" height="1.5" fill="#e6db74"/>
<rect x="1146.67" y="562.0" width="1.88" height="1.5" fill="#e6db74"/>
<rect x="1149.49" y="562.0" width="0.94" height="1.5" fill="#e6db74"/>
<rect x="1150.44" y="562.0" width="4.71" height="1.5" fill="#f8f8f2"/>
<rect x="1155.14" y="562.0" width="4.71" height="1.5" fill="#f92672"/>
<rect x="1159.85" y="562.0" width="0.94" height="1.5" fill="#f8f8f2"/>
<rect x="1143.85" y="564.0" width="0.94" height="1.5" fill="#f8f8f2"/>
<rect x="1144.79" y="564.0" width="3.76" height="1.5" fill="#f92672"/>
<rect x="1149.49" y="564.0" width="5.65" height="1.5" fill="#a6e22e"/>
<rect x="1155.14" y="564.0" width="0.94" height="1.5" fill="#f8f8f2"/>
<rect x="1156.08" y="564.0" width="6.59" height="1.5" fill="#e6db74"/>
<rect x="1162.67" y="564.0" width="1.88" height="1.5" fill="#f8f8f2"/>
<rect x="1165.49" y="564.0" width="4.71" height="1.5" fill="#f8f8f2"/>
<rect x="1171.14" y="564.0" width="6.59" height="1.5" fill="#f8f8f2"/>
<rect x="1178.67" y="564.0" width="5.65" height="1.5" fill="#f8f8f2"/>
<rect x="1185.26" y="564.0" width="2.82" height="1.5" fill="#f8f8f2"/>
<rect x="1188.08" y="564.0" width="3.76" height="1.5" fill="#f92672"/>
<rect x="1191.85" y="564.0" width="0.94" height="1.5" fill="#f8f8f2"/>
<rect x="1141.96" y="566.0" width="1.88" height="1.5" fill="#f8f8f2"/>
<rect x="1143.85" y="566.0" width="6.59" height="1.5" fill="#f92672"/>
<rect x="1150.44" y="566.0" width="0.94" height="1.5" fill="#f8f8f2"/>
<rect x="1141.96" y="568.0" width="3.76" height="1.5" fill="#75715e"/>
<rect x="1146.67" y="568.0" width="5.65" height="1.5" fill="#75715e"/>
<rect x="1153.26" y="568.0" width="4.71" height="1.5" fill="#75715e"/>
<rect x="1158.91" y="568.0" width="2.82" height="1.5" fill="#75715e"/>
<rect x="1141.96" y="570.0" width="0.94" height="1.5" fill="#f8f8f2"/>
<rect x="1142.91" y="570.0" width="6.59" height="1.5" fill="#f92672"/>
<rect x="1150.44" y="570.0" width="2.82" height="1.5" fill="#a6e22e"/>
<rect x="1153.26" y="570.0" width="0.94" height="1.5" fill="#f8f8f2"/>
<rect x="1154.20" y="570.0" width="14.12" height="1.5" fill="#e6db74"/>
<rect x="1169.26" y="570.0" width="11.29" height="1.5" fill="#a6e22e"/>
<rect x="1180.55" y="570.0" width="0.94" height="1.5" fill="#f8f8f2"/>
<rect x="1181.49" y="570.0" width="14.12" height="1.5" fill="#e6db74"/>
<rect x="1195.61" y="570.0" width="0.94" height="1.5" fill="#f8f8f2"/>
<rect x="1143.85" y="572.0" width="0.94" height="1.5" fill="#f8f8f2"/>
<rect x="1144.79" y="572.0" width="4.71" height="1.5" fill="#f92672"/>
<rect x="1149.49" y="572.0" width="6.59" height="1.5" fill="#f8f8f2"/>
<rect x="1156.08" y="572.0" width="4.71" height="1.5" fill="#f92672"/>
<rect x="1160.79" y="572.0" width="0.94" height="1.5" fill="#f8f8f2"/>
<rect x="1143.85" y="574.0" width="0.94" height="1.5" fill="#f8f8f2"/>
<rect x="1144.79" y="574.0" width="3.76" height="1.5" fill="#f92672"/>
<rect x="1149.49" y="574.0" width="5.65" height="1.5" fill="#a6e22e"/>
<rect x="1155.14" y="574.0" width="0.94" height="1.5" fill="#f8f8f2"/>
<rect x="1156.08" y="574.0" width="6.59" height="1.5" fill="#e6db74"/>
<rect x="1162.67" y="574.0" width="0.94" height="1.5" fill="#f8f8f2"/>
<rect x="1153.26" y="576.0" width="6.59" height="1.5" fill="#f8f8f2"/>
<rect x="1160.79" y="576.0" width="5.65" height="1.5" fill="#f8f8f2"/>
<rect x="1167.38" y="576.0" width="0.94" height="1.5" fill="#f8f8f2"/>
<rect x="1169.26" y="576.0" width="1.88" height="1.5" fill="#f8f8f2"/>
<rect x="1172.08" y="576.0" width="1.88" height="1.5" fill="#f8f8f2"/>
<rect x="1143.85" y="578.0" width="1.88" height="1.5" fill="#f8f8f2"/>
<rect x="1145.73" y="578.0" width="3.76" height="1.5" fill="#f92672"/>
<rect x="1149.49" y="578.0" width="0.94" height="1.5" fill="#f8f8f2"/>
<rect x="1141.96" y="580.0" width="1.88" height="1.5" fill="#f8f8f2"/>
<rect x="1143.85" y="580.0" width="6.59" height="1.5" fill="#f92672"/>
<rect x="1150.44" y="580.0" width="0.94" height="1.5" fill="#f8f8f2"/>
<rect x="1141.96" y="582.0" width="0.94" height="1.5" fill="#f8f8f2"/>
<rect x="1142.91" y="582.0" width="6.59" height="1.5" fill="#f92672"/>
<rect x="1150.44" y="582.0" width="2.82" height="1.5" fill="#a6e22e"/>
<rect x="1153.26" y="582.0" width="0.94" height="1.5" fill="#f8f8f2"/>
<rect x="1154.20" y="582.0" width="27.29" height="1.5" fill="#e6db74"/>
<rect x="1182.44" y="582.0" width="11.29" height="1.5" fill="#a6e22e"/>
<rect x="1193.73" y="582.0" width="0.94" height="1.5" fill="#f8f8f2"/>
<rect x="1194.67" y="582.0" width="10.35" height="1.5" fill="#e6db74"/>
<rect x="1205.02" y="582.0" width="0.94" height="1.5" fill="#f8f8f2"/>
<rect x="1143.85" y="584.0" width="0.94" height="1.5" fill="#f8f8f2"/>
<rect x="1144.79" y="584.0" width="4.71" height="1.5" fill="#f92672"/>
<rect x="1149.49" y="584.0" width="1.88" height="1.5" fill="#f8f8f2"/>
<rect x="1143.85" y="586.0" width="0.94" height="1.5" fill="#f8f8f2"/>
<rect x="1144.79" y="586.0" width="3.76" height="1.5" fill="#f92672"/>
<rect x="1149.49" y="586.0" width="5.65" height="1.5" fill="#a6e22e"/>
<rect x="1155.14" y="586.0" width="0.94" height="1.5" fill="#f8f8f2"/>
<rect x="1156.08" y="586.0" width="6.59" height="1.5" fill="#e6db74"/>
<rect x="1162.67" y="586.0" width="2.82" height="1.5" fill="#f8f8f2"/>
<rect x="1166.44" y="586.0" width="7.53" height="1.5" fill="#f8f8f2"/>
<rect x="1174.91" y="586.0" width="3.76" height="1.5" fill="#f8f8f2"/>
<rect x="1178.67" y="586.0" width="3.76" height="1.5" fill="#f92672"/>
<rect x="1182.44" y="586.0" width="0.94" height="1.5" fill="#f8f8f2"/>
<rect x="1141.96" y="588.0" width="1.88" height="1.5" fill="#f8f8f2"/>
<rect x="1143.85" y="588.0" width="6.59" height="1.5" fill="#f92672"/>
<rect x="1150.44" y="588.0" width="0.94" height="1.5" fill="#f8f8f2"/>
<rect x="1141.96" y="590.0" width="0.94" height="1.5" fill="#f8f8f2"/>
<rect x="1142.91" y="590.0" width="6.59" height="1.5" fill="#f92672"/>
<rect x="1150.44" y="590.0" width="2.82" height="1.5" fill="#a6e22e"/>
<rect x="1153.26" y="590.0" width="0.94" height="1.5" fill="#f8f8f2"/>
<rect x="1154.20" y="590.0" width="25.41" height="1.5" fill="#e6db74"/>
<rect x="1180.55" y="590.0" width="11.29" height="1.5" fill="#a6e22e"/>
<rect x="1191.85" y="590.0" width="0.94" height="1.5" fill="#f8f8f2"/>
<rect x="1192.79" y="590.0" width="6.59" height="1.5" fill="#e6db74"/>
<rect x="1199.38" y="590.0" width="0.94" height="1.5" fill="#f8f8f2"/>
<rect x="1143.85" y="592.0" width="0.94" height="1.5" fill="#f8f8f2"/>
<rect x="1144.79" y="592.0" width="4.71" height="1.5" fill="#f92672"/>
<rect x="1149.49" y="592.0" width="45.18" height="1.5" fill="#f8f8f2"/>
<rect x="1194.67" y="592.0" width="4.71" height="1.5" fill="#f92672"/>
<rect x="1199.38" y="592.0" width="0.94" height="1.5" fill="#f8f8f2"/>
<rect x="1143.85" y="594.0" width="0.94" height="1.5" fill="#f8f8f2"/>
<rect x="1144.79" y="594.0" width="6.59" height="1.5" fill="#f92672"/>
<rect x="1151.38" y="594.0" width="20.71" height="1.5" fill="#f8f8f2"/>
<rect x="1172.08" y="594.0" width="6.59" height="1.5" fill="#f92672"/>
<rect x="1178.67" y="594.0" width="0.94" height="1.5" fill="#f8f8f2"/>
<rect x="1143.85" y="596.0" width="0.94" height="1.5" fill="#f8f8f2"/>
<rect x="1144.79" y="596.0" width="3.76" height="1.5" fill="#f92672"/>
<rect x="1149.49" y="596.0" width="5.65" height="1.5" fill="#a6e22e"/>
<rect x="1155.14" y="596.0" width="0.94" height="1.5" fill="#f8f8f2"/>
<rect x="1156.08" y="596.0" width="6.59" height="1.5" fill="#e6db74"/>
<rect x="1162.67" y="596.0" width="4.71" height="1.5" fill="#f8f8f2"/>
<rect x="1168.32" y="596.0" width="1.88" height="1.5" fill="#f8f8f2"/>
<rect x="1171.14" y="596.0" width="5.65" height="1.5" fill="#f8f8f2"/>
<rect x="1176.79" y="596.0" width="3.76" height="1.5" fill="#f92672"/>
<rect x="1180.55" y="596.0" width="0.94" height="1.5" fill="#f8f8f2"/>
<rect x="1141.96" y="598.0" width="1.88" height="1.5" fill="#f8f8f2"/>
<rect x="1143.85" y="598.0" width="6.59" height="1.5" fill="#f92672"/>
<rect x="1150.44" y="598.0" width="0.94" height="1.5" fill="#f8f8f2"/>
<rect x="1141.96" y="600.0" width="0.94" height="1.5" fill="#f8f8f2"/>
<rect x="1142.91" y="600.0" width="6.59" height="1.5" fill="#f92672"/>
<rect x="1150.44" y="600.0" width="2.82" height="1.5" fill="#a6e22e"/>
<rect x="1153.26" y="600.0" width="0.94" height="1.5" fill="#f8f8f2"/>
<rect x="1154.20" y="600.0" width="22.59" height="1.5" fill="#e6db74"/>
<rect x="1177.73" y="600.0" width="11.29" height="1.5" fill="#a6e22e"/>
<rect x="1189.02" y="600.0" width="0.94" height="1.5" fill="#f8f8f2"/>
<rect x="1189.96" y="600.0" width="10.35" height="1.5" fill="#e6db74"/>
<rect x="1200.32" y="600.0" width="0.94" height="1.5" fill="#f8f8f2"/>
<rect x="1143.85" y="602.0" width="0.94" height="1.5" fill="#f8f8f2"/>
<rect x="1144.79" y="602.0" width="4.71" height="1.5" fill="#f92672"/>
<rect x="1149.49" y="602.0" width="1.88" height="1.5" fill="#f8f8f2"/>
<rect x="1143.85" y="604.0" width="0.94" height="1.5" fill="#f8f8f2"/>
<rect x="1144.79" y="604.0" width="3.76" height="1.5" fill="#f92672"/>
<rect x="1149.49" y="604.0" width="5.65" height="1.5" fill="#a6e22e"/>
<rect x="1155.14" y="604.0" width="0.94" height="1.5" fill="#f8f8f2"/>
<rect x="1156.08" y="604.0" width="6.59" height="1.5" fill="#e6db74"/>
<rect x="1162.67" y="604.0" width="5.65" height="1.5" fill="#f8f8f2"/>
<rect x="1169.26" y="604.0" width="7.53" height="1.5" fill="#f8f8f2"/>
<rect x="1176.79" y="604.0" width="3.76" height="1.5" fill="#f92672"/>
<rect x="1180.55" y="604.0" width="0.94" height="1.5" fill="#f8f8f2"/>
<rect x="1141.96" y="606.0" width="1.88" height="1.5" fill="#f8f8f2"/>
<rect x="1143.85" y="606.0" width="6.59" height="1.5" fill="#f92672"/>
<rect x="1150.44" y="606.0" width="0.94" height="1.5" fill="#f8f8f2"/>
<rect x="1141.96" y="608.0" width="0.94" height="1.5" fill="#f8f8f2"/>
<rect x="1142.91" y="608.0" width="6.59" height="1.5" fill="#f92672"/>
<rect x="1150.44" y="608.0" width="2.82" height="1.5" fill="#a6e22e"/>
<rect x="1153.26" y="608.0" width="0.94" height="1.5" fill="#f8f8f2"/>
<rect x="1154.20" y="608.0" width="15.06" height="1.5" fill="#e6db74"/>
<rect x="1170.20" y="608.0" width="11.29" height="1.5" fill="#a6e22e"/>
<rect x="1181.49" y="608.0" width="0.94" height="1.5" fill="#f8f8f2"/>
<rect x="1182.44" y="608.0" width="5.65" height="1.5" fill="#e6db74"/>
<rect x="1188.08" y="608.0" width="0.94" height="1.5" fill="#f8f8f2"/>
<rect x="1143.85" y="610.0" width="0.94" height="1.5" fill="#f8f8f2"/>
<rect x="1144.79" y="610.0" width="4.71" height="1.5" fill="#f92672"/>
<rect x="1149.49" y="610.0" width="3.76" height="1.5" fill="#f8f8f2"/>
<rect x="1153.26" y="610.0" width="4.71" height="1.5" fill="#66d9ef"/>
<rect x="1157.96" y="610.0" width="0.94" height="1.5" fill="#f8f8f2"/>
<rect x="1158.91" y="610.0" width="1.88" height="1.5" fill="#e6db74"/>
<rect x="1161.73" y="610.0" width="5.65" height="1.5" fill="#e6db74"/>
<rect x="1168.32" y="610.0" width="5.65" height="1.5" fill="#e6db74"/>
<rect x="1174.91" y="610.0" width="6.59" height="1.5" fill="#e6db74"/>
<rect x="1182.44" y="610.0" width="7.53" height="1.5" fill="#e6db74"/>
<rect x="1190.91" y="610.0" width="7.53" height="1.5" fill="#e6db74"/>
<rect x="1199.38" y="610.0" width="4.71" height="1.5" fill="#e6db74"/>
<rect x="1205.02" y="610.0" width="6.59" height="1.5" fill="#e6db74"/>
<rect x="1212.55" y="610.0" width="1.88" height="1.5" fill="#e6db74"/>
<rect x="1215.38" y="610.0" width="2.82" height="1.5" fill="#e6db74"/>
<rect x="1219.14" y="610.0" width="0.94" height="1.5" fill="#e6db74"/>
<rect x="1220.08" y="610.0" width="4.71" height="1.5" fill="#f8f8f2"/>
<rect x="1224.79" y="610.0" width="4.71" height="1.5" fill="#f92672"/>
<rect x="1229.49" y="610.0" width="0.94" height="1.5" fill="#f8f8f2"/>
<rect x="1143.85" y="612.0" width="0.94" height="1.5" fill="#f8f8f2"/>
<rect x="1144.79" y="612.0" width="3.76" height="1.5" fill="#f92672"/>
<rect x="1149.49" y="612.0" width="5.65" height="1.5" fill="#a6e22e"/>
<rect x="1155.14" y="612.0" width="0.94" height="1.5" fill="#f8f8f2"/>
<rect x="1156.08" y="612.0" width="6.59" height="1.5" fill="#e6db74"/>
<rect x="1162.67" y="612.0" width="1.88" height="1.5" fill="#f8f8f2"/>
<rect x="1165.49" y="612.0" width="6.59" height="1.5" fill="#f8f8f2"/>
<rect x="1173.02" y="612.0" width="8.47" height="1.5" fill="#f8f8f2"/>
<rect x="1182.44" y="612.0" width="5.65" height="1.5" fill="#f8f8f2"/>
<rect x="1188.08" y="612.0" width="3.76" height="1.5" fill="#f92672"/>
<rect x="1191.85" y="612.0" width="0.94" height="1.5" fill="#f8f8f2"/>
<rect x="1141.96" y="614.0" width="1.88" height="1.5" fill="#f8f8f2"/>
<rect x="1143.85" y="614.0" width="6.59" height="1.5" fill="#f92672"/>
<rect x="1150.44" y="614.0" width="0.94" height="1.5" fill="#f8f8f2"/>
<rect x="1141.96" y="616.0" width="0.94" height="1.5" fill="#f8f8f2"/>
<rect x="1142.91" y="616.0" width="6.59" height="1.5" fill="#f92672"/>
<rect x="1150.44" y="616.0" width="2.82" height="1.5" fill="#a6e22e"/>
<rect x="1153.26" y="616.0" width="0.94" height="1.5" fill="#f8f8f2"/>
<rect x="1154.20" y="616.0" width="16.00" height="1.5" fill="#e6db74"/>
<rect x="1171.14" y="616.0" width="11.29" height="1.5" fill="#a6e22e"/>
<rect x="1182.44" y="616.0" width="0.94" height="1.5" fill="#f8f8f2"/>
<rect x="1183.38" y="616.0" width="5.65" height="1.5" fill="#e6db74"/>
<rect x="1189.02" y="616.0" width="0.94" height="1.5" fill="#f8f8f2"/>
<rect x="1143.85" y="618.0" width="0.94" height="1.5" fill="#f8f8f2"/>
<rect x="1144.79" y="618.0" width="4.71" height="1.5" fill="#f92672"/>
<rect x="1149.49" y="618.0" width="9.41" height="1.5" fill="#f8f8f2"/>
<rect x="1158.91" y="618.0" width="4.71" height="1.5" fill="#f92672"/>
<rect x="1163.61" y="618.0" width="0.94" height="1.5" fill="#f8f8f2"/>
<rect x="1143.85" y="620.0" width="0.94" height="1.5" fill="#f8f8f2"/>
<rect x="1144.79" y="620.0" width="3.76" height="1.5" fill="#f92672"/>
<rect x="1149.49" y="620.0" width="5.65" height="1.5" fill="#a6e22e"/>
<rect x="1155.14" y="620.0" width="0.94" height="1.5" fill="#f8f8f2"/>
<rect x="1156.08" y="620.0" width="6.59" height="1.5" fill="#e6db74"/>
<rect x="1162.67" y="620.0" width="8.47" height="1.5" fill="#f8f8f2"/>
<rect x="1172.08" y="620.0" width="6.59" height="1.5" fill="#f8f8f2"/>
<rect x="1178.67" y="620.0" width="3.76" height="1.5" fill="#f92672"/>
<rect x="1182.44" y="620.0" width="0.94" height="1.5" fill="#f8f8f2"/>
<rect x="1141.96" y="622.0" width="1.88" height="1.5" fill="#f8f8f2"/>
<rect x="1143.85" y="622.0" width="6.59" height="1.5" fill="#f92672"/>
<rect x="1150.44" y="622.0" width="0.94" height="1.5" fill="#f8f8f2"/>
<rect x="1141.96" y="624.0" width="0.94" height="1.5" fill="#f8f8f2"/>
<rect x="1142.91" y="624.0" width="6.59" height="1.5" fill="#f92672"/>
<rect x="1150.44" y="624.0" width="2.82" height="1.5" fill="#a6e22e"/>
<rect x="1153.26" y="624.0" width="0.94" height="1.5" fill="#f8f8f2"/>
<rect x="1154.20" y="624.0" width="18.82" height="1.5" fill="#e6db74"/>
<rect x="1173.96" y="624.0" width="11.29" height="1.5" fill="#a6e22e"/>
<rect x="1185.26" y="624.0" width="0.94" height="1.5" fill="#f8f8f2"/>
<rect x="1186.20" y="624.0" width="5.65" height="1.5" fill="#e6db74"/>
<rect x="1191.85" y="624.0" width="0.94" height="1.5" fill="#f8f8f2"/>
<rect x="1143.85" y="626.0" width="0.94" height="1.5" fill="#f8f8f2"/>
<rect x="1144.79" y="626.0" width="4.71" height="1.5" fill="#f92672"/>
<rect x="1149.49" y="626.0" width="3.76" height="1.5" fill="#f8f8f2"/>
<rect x="1153.26" y="626.0" width="4.71" height="1.5" fill="#66d9ef"/>
<rect x="1157.96" y="626.0" width="0.94" height="1.5" fill="#f8f8f2"/>
<rect x="1158.91" y="626.0" width="7.53" height="1.5" fill="#e6db74"/>
<rect x="1167.38" y="626.0" width="5.65" height="1.5" fill="#e6db74"/>
<rect x="1173.96" y="626.0" width="4.71" height="1.5" fill="#e6db74"/>
<rect x="1179.61" y="626.0" width="8.47" height="1.5" fill="#e6db74"/>
<rect x="1189.02" y="626.0" width="4.71" height="1.5" fill="#e6db74"/>
<rect x="1194.67" y="626.0" width="0.94" height="1.5" fill="#e6db74"/>
<rect x="1196.55" y="626.0" width="7.53" height="1.5" fill="#e6db74"/>
<rect x="1205.02" y="626.0" width="4.71" height="1.5" fill="#e6db74"/>
<rect x="1210.67" y="626.0" width="1.88" height="1.5" fill="#e6db74"/>
<rect x="1213.49" y="626.0" width="1.88" height="1.5" fill="#e6db74"/>
<rect x="1216.32" y="626.0" width="1.88" height="1.5" fill="#e6db74"/>
<rect x="1219.14" y="626.0" width="5.65" height="1.5" fill="#e6db74"/>
<rect x="1225.73" y="626.0" width="2.82" height="1.5" fill="#e6db74"/>
<rect x="1229.49" y="626.0" width="7.53" height="1.5" fill="#e6db74"/>
<rect x="1237.96" y="626.0" width="7.53" height="1.5" fill="#e6db74"/>
<rect x="1246.44" y="626.0" width="6.59" height="1.5" fill="#e6db74"/>
<rect x="1253.96" y="626.0" width="2.82" height="1.5" fill="#e6db74"/>
<rect x="1143.85" y="628.0" width="5.65" height="1.5" fill="#e6db74"/>
<rect x="1150.44" y="628.0" width="4.71" height="1.5" fill="#e6db74"/>
<rect x="1156.08" y="628.0" width="2.82" height="1.5" fill="#e6db74"/>
<rect x="1159.85" y="628.0" width="2.82" height="1.5" fill="#e6db74"/>
<rect x="1163.61" y="628.0" width="7.53" height="1.5" fill="#e6db74"/>
<rect x="1172.08" y="628.0" width="6.59" height="1.5" fill="#e6db74"/>
<rect x="1179.61" y="628.0" width="5.65" height="1.5" fill="#e6db74"/>
<rect x="1186.20" y="628.0" width="4.71" height="1.5" fill="#e6db74"/>
<rect x="1191.85" y="628.0" width="7.53" height="1.5" fill="#e6db74"/>
<rect x="1200.32" y="628.0" width="0.94" height="1.5" fill="#e6db74"/>
<rect x="1202.20" y="628.0" width="4.71" height="1.5" fill="#e6db74"/>
<rect x="1207.85" y="628.0" width="7.53" height="1.5" fill="#e6db74"/>
<rect x="1216.32" y="628.0" width="6.59" height="1.5" fill="#e6db74"/>
<rect x="1223.85" y="628.0" width="0.94" height="1.5" fill="#e6db74"/>
<rect x="1225.73" y="628.0" width="4.71" height="1.5" fill="#e6db74"/>
<rect x="1231.38" y="628.0" width="6.59" height="1.5" fill="#e6db74"/>
<rect x="1238.91" y="628.0" width="5.65" height="1.5" fill="#e6db74"/>
<rect x="1245.49" y="628.0" width="6.59" height="1.5" fill="#e6db74"/>
<rect x="1138.20" y="630.0" width="4.71" height="1.5" fill="#e6db74"/>
<rect x="1138.20" y="632.0" width="0.94" height="1.5" fill="#e6db74"/>
<rect x="1140.08" y="632.0" width="2.82" height="1.5" fill="#e6db74"/>
<rect x="1143.85" y="632.0" width="1.88" height="1.5" fill="#e6db74"/>
<rect x="1146.67" y="632.0" width="7.53" height="1.5" fill="#e6db74"/>
<rect x="1155.14" y="632.0" width="7.53" height="1.5" fill="#e6db74"/>
<rect x="1163.61" y="632.0" width="5.65" height="1.5" fill="#e6db74"/>
<rect x="1170.20" y="632.0" width="7.53" height="1.5" fill="#e6db74"/>
<rect x="1178.67" y="632.0" width="8.47" height="1.5" fill="#e6db74"/>
<rect x="1188.08" y="632.0" width="0.94" height="1.5" fill="#e6db74"/>
<rect x="1189.96" y="632.0" width="5.65" height="1.5" fill="#e6db74"/>
<rect x="1196.55" y="632.0" width="5.65" height="1.5" fill="#e6db74"/>
<rect x="1203.14" y="632.0" width="4.71" height="1.5" fill="#e6db74"/>
<rect x="1208.79" y="632.0" width="7.53" height="1.5" fill="#e6db74"/>
<rect x="1217.26" y="632.0" width="1.88" height="1.5" fill="#e6db74"/>
<rect x="1220.08" y="632.0" width="7.53" height="1.5" fill="#e6db74"/>
<rect x="1228.55" y="632.0" width="3.76" height="1.5" fill="#e6db74"/>
<rect x="1233.26" y="632.0" width="6.59" height="1.5" fill="#e6db74"/>
<rect x="1240.79" y="632.0" width="5.65" height="1.5" fill="#e6db74"/>
<rect x="1247.38" y="632.0" width="0.94" height="1.5" fill="#e6db74"/>
<rect x="1249.26" y="632.0" width="5.65" height="1.5" fill="#e6db74"/>
<rect x="1138.20" y="634.0" width="7.53" height="1.5" fill="#e6db74"/>
<rect x="1146.67" y="634.0" width="7.53" height="1.5" fill="#e6db74"/>
<rect x="1155.14" y="634.0" width="8.47" height="1.5" fill="#e6db74"/>
<rect x="1164.55" y="634.0" width="5.65" height="1.5" fill="#e6db74"/>
<rect x="1171.14" y="634.0" width="8.47" height="1.5" fill="#e6db74"/>
<rect x="1180.55" y="634.0" width="5.65" height="1.5" fill="#e6db74"/>
<rect x="1187.14" y="634.0" width="5.65" height="1.5" fill="#e6db74"/>
<rect x="1193.73" y="634.0" width="7.53" height="1.5" fill="#e6db74"/>
<rect x="1202.20" y="634.0" width="7.53" height="1.5" fill="#e6db74"/>
<rect x="1210.67" y="634.0" width="5.65" height="1.5" fill="#e6db74"/>
<rect x="1217.26" y="634.0" width="4.71" height="1.5" fill="#e6db74"/>
<rect x="1222.91" y="634.0" width="4.71" height="1.5" fill="#e6db74"/>
<rect x="1228.55" y="634.0" width="4.71" height="1.5" fill="#e6db74"/>
<rect x="1234.20" y="634.0" width="5.65" height="1.5" fill="#e6db74"/>
<rect x="1240.79" y="634.0" width="7.53" height="1.5" fill="#e6db74"/>
<rect x="1249.26" y="634.0" width="7.53" height="1.5" fill="#e6db74"/>
<rect x="1257.73" y="634.0" width="1.88" height="1.5" fill="#e6db74"/>
<rect x="1138.20" y="636.0" width="5.65" height="1.5" fill="#e6db74"/>
<rect x="1144.79" y="636.0" width="7.53" height="1.5" fill="#e6db74"/>
<rect x="1153.26" y="636.0" width="4.71" height="1.5" fill="#e6db74"/>
<rect x="1158.91" y="636.0" width="4.71" height="1.5" fill="#e6db74"/>
<rect x="1164.55" y="636.0" width="4.71" height="1.5" fill="#e6db74"/>
<rect x="1170.20" y="636.0" width="6.59" height="1.5" fill="#e6db74"/>
<rect x="1177.73" y="636.0" width="0.94" height="1.5" fill="#e6db74"/>
<rect x="1179.61" y="636.0" width="5.65" height="1.5" fill="#e6db74"/>
<rect x="1186.20" y="636.0" width="4.71" height="1.5" fill="#e6db74"/>
<rect x="1191.85" y="636.0" width="5.65" height="1.5" fill="#e6db74"/>
<rect x="1198.44" y="636.0" width="8.47" height="1.5" fill="#e6db74"/>
<rect x="1207.85" y="636.0" width="7.53" height="1.5" fill="#e6db74"/>
<rect x="1216.32" y="636.0" width="5.65" height="1.5" fill="#e6db74"/>
<rect x="1222.91" y="636.0" width="5.65" height="1.5" fill="#e6db74"/>
<rect x="1229.49" y="636.0" width="5.65" height="1.5" fill="#e6db74"/>
<rect x="1236.08" y="636.0" width="5.65" height="1.5" fill="#e6db74"/>
<rect x="1242.67" y="636.0" width="5.65" height="1.5" fill="#e6db74"/>
<rect x="1249.26" y="636.0" width="8.47" height="1.5" fill="#e6db74"/>
<rect x="1258.67" y="636.0" width="0.94" height="1.5" fill="#e6db74"/>
<rect x="1138.20" y="638.0" width="1.88" height="1.5" fill="#e6db74"/>
<rect x="1141.02" y="638.0" width="8.47" height="1.5" fill="#e6db74"/>
<rect x="1150.44" y="638.0" width="5.65" height="1.5" fill="#e6db74"/>
<rect x="1157.02" y="638.0" width="5.65" height="1.5" fill="#e6db74"/>
<rect x="1163.61" y="638.0" width="7.53" height="1.5" fill="#e6db74"/>
<rect x="1172.08" y="638.0" width="5.65" height="1.5" fill="#e6db74"/>
<rect x="1178.67" y="638.0" width="2.82" height="1.5" fill="#e6db74"/>
<rect x="1182.44" y="638.0" width="5.65" height="1.5" fill="#e6db74"/>
<rect x="1189.02" y="638.0" width="5.65" height="1.5" fill="#e6db74"/>
<rect x="1195.61" y="638.0" width="6.59" height="1.5" fill="#e6db74"/>
<rect x="1202.20" y="638.0" width="4.71" height="1.5" fill="#f8f8f2"/>
<rect x="1206.91" y="638.0" width="4.71" height="1.5" fill="#f92672"/>
<rect x="1211.61" y="638.0" width="0.94" height="1.5" fill="#f8f8f2"/>
<rect x="1143.85" y="640.0" width="0.94" height="1.5" fill="#f8f8f2"/>
<rect x="1144.79" y="640.0" width="3.76" height="1.5" fill="#f92672"/>
<rect x="1149.49" y="640.0" width="5.65" height="1.5" fill="#a6e22e"/>
<rect x="1155.14" y="640.0" width="0.94" height="1.5" fill="#f8f8f2"/>
<rect x="1156.08" y="640.0" width="6.59" height="1.5" fill="#e6db74"/>
<rect x="1162.67" y="640.0" width="6.59" height="1.5" fill="#f8f8f2"/>
<rect x="1170.20" y="640.0" width="7.53" height="1.5" fill="#f8f8f2"/>
<rect x="1178.67" y="640.0" width="2.82" height="1.5" fill="#f8f8f2"/>
<rect x="1181.49" y="640.0" width="3.76" height="1.5" fill="#f92672"/>
<rect x="1185.26" y="640.0" width="0.94" height="1.5" fill="#f8f8f2"/>
<rect x="1141.96" y="642.0" width="1.88" height="1.5" fill="#f8f8f2"/>
<rect x="1143.85" y="642.0" width="6.59" height="1.5" fill="#f92672"/>
<rect x="1150.44" y="642.0" width="0.94" height="1.5" fill="#f8f8f2"/>
<rect x="1141.96" y="644.0" width="3.76" height="1.5" fill="#75715e"/>
<rect x="1146.67" y="644.0" width="7.53" height="1.5" fill="#75715e"/>
<rect x="1155.14" y="644.0" width="1.88" height="1.5" fill="#75715e"/>
<rect x="1157.96" y="644.0" width="2.82" height="1.5" fill="#75715e"/>
<rect x="1141.96" y="646.0" width="0.94" height="1.5" fill="#f8f8f2"/>
<rect x="1142.91" y="646.0" width="6.59" height="1.5" fill="#f92672"/>
<rect x="1150.44" y="646.0" width="2.82" height="1.5" fill="#a6e22e"/>
<rect x="1153.26" y="646.0" width="0.94" height="1.5" fill="#f8f8f2"/>
<rect x="1154.20" y="646.0" width="25.41" height="1.5" fill="#e6db74"/>
<rect x="1180.55" y="646.0" width="11.29" height="1.5" fill="#a6e22e"/>
<rect x="1191.85" y="646.0" width="0.94" height="1.5" fill="#f8f8f2"/>
<rect x="1192.79" y="646.0" width="14.12" height="1.5" fill="#e6db74"/>
<rect x="1206.91" y="646.0" width="0.94" height="1.5" fill="#f8f8f2"/>
<rect x="1143.85" y="648.0" width="0.94" height="1.5" fill="#f8f8f2"/>
<rect x="1144.79" y="648.0" width="4.71" height="1.5" fill="#f92672"/>
<rect x="1149.49" y="648.0" width="6.59" height="1.5" fill="#f8f8f2"/>
<rect x="1156.08" y="648.0" width="4.71" height="1.5" fill="#f92672"/>
<rect x="1160.79" y="648.0" width="0.94" height="1.5" fill="#f8f8f2"/>
<rect x="1143.85" y="650.0" width="0.94" height="1.5" fill="#f8f8f2"/>
<rect x="1144.79" y="650.0" width="3.76" height="1.5" fill="#f92672"/>
<rect x="1149.49" y="650.0" width="5.65" height="1.5" fill="#a6e22e"/>
<rect x="1155.14" y="650.0" width="0.94" height="1.5" fill="#f8f8f2"/>
<rect x="1156.08" y="650.0" width="6.59" height="1.5" fill="#e6db74"/>
<rect x="1162.67" y="650.0" width="0.94" height="1.5" fill="#f8f8f2"/>
<rect x="1153.26" y="652.0" width="6.59" height="1.5" fill="#f8f8f2"/>
<rect x="1160.79" y="652.0" width="0.94" height="1.5" fill="#f8f8f2"/>
<rect x="1162.67" y="652.0" width="8.47" height="1.5" fill="#f8f8f2"/>
<rect x="1172.08" y="652.0" width="1.88" height="1.5" fill="#f8f8f2"/>
<rect x="1143.85" y="654.0" width="1.88" height="1.5" fill="#f8f8f2"/>
<rect x="1145.73" y="654.0" width="3.76" height="1.5" fill="#f92672"/>
<rect x="1149.49" y="654.0" width="0.94" height="1.5" fill="#f8f8f2"/>
<rect x="1141.96" y="656.0" width="1.88" height="1.5" fill="#f8f8f2"/>
<rect x="1143.85" y="656.0" width="6.59" height="1.5" fill="#f92672"/>
<rect x="1150.44" y="656.0" width="0.94" height="1.5" fill="#f8f8f2"/>
<rect x="1141.96" y="658.0" width="0.94" height="1.5" fill="#f8f8f2"/>
<rect x="1142.91" y="658.0" width="6.59" height="1.5" fill="#f92672"/>
<rect x="1150.44" y="658.0" width="2.82" height="1.5" fill="#a6e22e"/>
<rect x="1153.26" y="658.0" width="0.94" height="1.5" fill="#f8f8f2"/>
<rect x="1154.20" y="658.0" width="25.41" height="1.5" fill="#e6db74"/>
<rect x="1180.55" y="658.0" width="11.29" height="1.5" fill="#a6e22e"/>
<rect x="1191.85" y="658.0" width="0.94" height="1.5" fill="#f8f8f2"/>
<rect x="1192.79" y="658.0" width="10.35" height="1.5" fill="#e6db74"/>
<rect x="1203.14" y="658.0" width="0.94" height="1.5" fill="#f8f8f2"/>
<rect x="1143.85" y="660.0" width="0.94" height="1.5" fill="#f8f8f2"/>
<rect x="1144.79" y="660.0" width="4.71" height="1.5" fill="#f92672"/>
<rect x="1149.49" y="660.0" width="1.88" height="1.5" fill="#f8f8f2"/>
<rect x="1143.85" y="662.0" width="0.94" height="1.5" fill="#f8f8f2"/>
<rect x="1144.79" y="662.0" width="3.76" height="1.5" fill="#f92672"/>
<rect x="1149.49" y="662.0" width="5.65" height="1.5" fill="#a6e22e"/>
<rect x="1155.14" y="662.0" width="0.94" height="1.5" fill="#f8f8f2"/>
<rect x="1156.08" y="662.0" width="6.59" height="1.5" fill="#e6db74"/>
<rect x="1162.67" y="662.0" width="5.65" height="1.5" fill="#f8f8f2"/>
<rect x="1169.26" y="662.0" width="2.82" height="1.5" fill="#f8f8f2"/>
<rect x="1173.02" y="662.0" width="2.82" height="1.5" fill="#f8f8f2"/>
<rect x="1175.85" y="662.0" width="3.76" height="1.5" fill="#f92672"/>
<rect x="1179.61" y="662.0" width="0.94" height="1.5" fill="#f8f8f2"/>
<rect x="1141.96" y="664.0" width="1.88" height="1.5" fill="#f8f8f2"/>
<rect x="1143.85" y="664.0" width="6.59" height="1.5" fill="#f92672"/>
<rect x="1150.44" y="664.0" width="0.94" height="1.5" fill="#f8f8f2"/>
<rect x="1141.96" y="666.0" width="0.94" height="1.5" fill="#f8f8f2"/>
<rect x="1142.91" y="666.0" width="6.59" height="1.5" fill="#f92672"/>
<rect x="1150.44" y="666.0" width="2.82" height="1.5" fill="#a6e22e"/>
<rect x="1153.26" y="666.0" width="0.94" height="1.5" fill="#f8f8f2"/>
<rect x="1154.20" y="666.0" width="16.00" height="1.5" fill="#e6db74"/>
<rect x="1171.14" y="666.0" width="11.29" height="1.5" fill="#a6e22e"/>
<rect x="1182.44" y="666.0" width="0.94" height="1.5" fill="#f8f8f2"/>
<rect x="1183.38" y="666.0" width="6.59" height="1.5" fill="#e6db74"/>
<rect x="1189.96" y="666.0" width="0.94" height="1.5" fill="#f8f8f2"/>
<rect x="1143.85" y="668.0" width="0.94" height="1.5" fill="#f8f8f2"/>
<rect x="1144.79" y="668.0" width="4.71" height="1.5" fill="#f92672"/>
<rect x="1149.49" y="668.0" width="38.59" height="1.5" fill="#f8f8f2"/>
<rect x="1188.08" y="668.0" width="4.71" height="1.5" fill="#f92672"/>
<rect x="1192.79" y="668.0" width="0.94" height="1.5" fill="#f8f8f2"/>
<rect x="1143.85" y="670.0" width="0.94" height="1.5" fill="#f8f8f2"/>
<rect x="1144.79" y="670.0" width="6.59" height="1.5" fill="#f92672"/>
<rect x="1151.38" y="670.0" width="20.71" height="1.5" fill="#f8f8f2"/>
<rect x="1172.08" y="670.0" width="6.59" height="1.5" fill="#f92672"/>
<rect x="1178.67" y="670.0" width="0.94" height="1.5" fill="#f8f8f2"/>
<rect x="1143.85" y="672.0" width="0.94" height="1.5" fill="#f8f8f2"/>
<rect x="1144.79" y="672.0" width="3.76" height="1.5" fill="#f92672"/>
<rect x="1149.49" y="672.0" width="5.65" height="1.5" fill="#a6e22e"/>
<rect x="1155.14" y="672.0" width="0.94" height="1.5" fill="#f8f8f2"/>
<rect x="1156.08" y="672.0" width="6.59" height="1.5" fill="#e6db74"/>
<rect x="1162.67" y="672.0" width="3.76" height="1.5" fill="#f8f8f2"/>
<rect x="1167.38" y="672.0" width="5.65" height="1.5" fill="#f8f8f2"/>
<rect x="1173.96" y="672.0" width="2.82" height="1.5" fill="#f8f8f2"/>
<rect x="1177.73" y="672.0" width="5.65" height="1.5" fill="#f8f8f2"/>
<rect x="1183.38" y="672.0" width="3.76" height="1.5" fill="#f92672"/>
<rect x="1187.14" y="672.0" width="0.94" height="1.5" fill="#f8f8f2"/>
<rect x="1141.96" y="674.0" width="1.88" height="1.5" fill="#f8f8f2"/>
<rect x="1143.85" y="674.0" width="6.59" height="1.5" fill="#f92672"/>
<rect x="1150.44" y="674.0" width="0.94" height="1.5" fill="#f8f8f2"/>
<rect x="1141.96" y="676.0" width="0.94" height="1.5" fill="#f8f8f2"/>
<rect x="1142.91" y="676.0" width="6.59" height="1.5" fill="#f92672"/>
<rect x="1150.44" y="676.0" width="2.82" height="1.5" fill="#a6e22e"/>
<rect x="1153.26" y="676.0" width="0.94" height="1.5" fill="#f8f8f2"/>
<rect x="1154.20" y="676.0" width="16.94" height="1.5" fill="#e6db74"/>
<rect x="1172.08" y="676.0" width="11.29" height="1.5" fill="#a6e22e"/>
<rect x="1183.38" y="676.0" width="0.94" height="1.5" fill="#f8f8f2"/>
<rect x="1184.32" y="676.0" width="10.35" height="1.5" fill="#e6db74"/>
<rect x="1194.67" y="676.0" width="0.94" height="1.5" fill="#f8f8f2"/>
<rect x="1143.85" y="678.0" width="0.94" height="1.5" fill="#f8f8f2"/>
<rect x="1144.79" y="678.0" width="4.71" height="1.5" fill="#f92672"/>
<rect x="1149.49" y="678.0" width="1.88" height="1.5" fill="#f8f8f2"/>
<rect x="1143.85" y="680.0" width="0.94" height="1.5" fill="#f8f8f2"/>
<rect x="1144.79" y="680.0" width="3.76" height="1.5" fill="#f92672"/>
<rect x="1149.49" y="680.0" width="5.65" height="1.5" fill="#a6e22e"/>
<rect x="1155.14" y="680.0" width="0.94" height="1.5" fill="#f8f8f2"/>
<rect x="1156.08" y="680.0" width="6.59" height="1.5" fill="#e6db74"/>
<rect x="1162.67" y="680.0" width="6.59" height="1.5" fill="#f8f8f2"/>
<rect x="1170.20" y="680.0" width="2.82" height="1.5" fill="#f8f8f2"/>
<rect x="1173.96" y="680.0" width="5.65" height="1.5" fill="#f8f8f2"/>
<rect x="1180.55" y="680.0" width="5.65" height="1.5" fill="#f8f8f2"/>
<rect x="1186.20" y="680.0" width="3.76" height="1.5" fill="#f92672"/>
<rect x="1189.96" y="680.0" width="0.94" height="1.5" fill="#f8f8f2"/>
<rect x="1141.96" y="682.0" width="1.88" height="1.5" fill="#f8f8f2"/>
<rect x="1143.85" y="682.0" width="6.59" height="1.5" fill="#f92672"/>
<rect x="1150.44" y="682.0" width="0.94" height="1.5" fill="#f8f8f2"/>
<rect x="1141.96" y="684.0" width="0.94" height="1.5" fill="#f8f8f2"/>
<rect x="1142.91" y="684.0" width="6.59" height="1.5" fill="#f92672"/>
<rect x="1150.44" y="684.0" width="2.82" height="1.5" fill="#a6e22e"/>
<rect x="1153.26" y="684.0" width="0.94" height="1.5" fill="#f8f8f2"/>
<rect x="1154.20" y="684.0" width="16.94" height="1.5" fill="#e6db74"/>
<rect x="1172.08" y="684.0" width="11.29" height="1.5" fill="#a6e22e"/>
<rect x="1183.38" y="684.0" width="0.94" height="1.5" fill="#f8f8f2"/>
<rect x="1184.32" y="684.0" width="5.65" height="1.5" fill="#e6db74"/>
<rect x="1189.96" y="684.0" width="0.94" height="1.5" fill="#f8f8f2"/>
<rect x="1143.85" y="686.0" width="0.94" height="1.5" fill="#f8f8f2"/>
<rect x="1144.79" y="686.0" width="4.71" height="1.5" fill="#f92672"/>
<rect x="1149.49" y="686.0" width="3.76" height="1.5" fill="#f8f8f2"/>
<rect x="1153.26" y="686.0" width="4.71" height="1.5" fill="#66d9ef"/>
<rect x="1157.96" y="686.0" width="0.94" height="1.5" fill="#f8f8f2"/>
<rect x="1158.91" y="686.0" width="5.65" height="1.5" fill="#e6db74"/>
<rect x="1165.49" y="686.0" width="1.88" height="1.5" fill="#e6db74"/>
<rect x="1168.32" y="686.0" width="7.53" height="1.5" fill="#e6db74"/>
<rect x="1175.85" y="686.0" width="4.71" height="1.5" fill="#f8f8f2"/>
<rect x="1180.55" y="686.0" width="4.71" height="1.5" fill="#f92672"/>
<rect x="1185.26" y="686.0" width="0.94" height="1.5" fill="#f8f8f2"/>
<rect x="1143.85" y="688.0" width="0.94" height="1.5" fill="#f8f8f2"/>
<rect x="1144.79" y="688.0" width="3.76" height="1.5" fill="#f92672"/>
<rect x="1149.49" y="688.0" width="5.65" height="1.5" fill="#a6e22e"/>
<rect x="1155.14" y="688.0" width="0.94" height="1.5" fill="#f8f8f2"/>
<rect x="1156.08" y="688.0" width="6.59" height="1.5" fill="#e6db74"/>
<rect x="1162.67" y="688.0" width="7.53" height="1.5" fill="#f8f8f2"/>
<rect x="1171.14" y="688.0" width="7.53" height="1.5" fill="#f8f8f2"/>
<rect x="1178.67" y="688.0" width="3.76" height="1.5" fill="#f92672"/>
<rect x="1182.44" y="688.0" width="0.94" height="1.5" fill="#f8f8f2"/>
<rect x="1141.96" y="690.0" width="1.88" height="1.5" fill="#f8f8f2"/>
<rect x="1143.85" y="690.0" width="6.59" height="1.5" fill="#f92672"/>
<rect x="1150.44" y="690.0" width="0.94" height="1.5" fill="#f8f8f2"/>
<rect x="1141.96" y="692.0" width="0.94" height="1.5" fill="#f8f8f2"/>
<rect x="1142.91" y="692.0" width="6.59" height="1.5" fill="#f92672"/>
<rect x="1150.44" y="692.0" width="2.82" height="1.5" fill="#a6e22e"/>
<rect x="1153.26" y="692.0" width="0.94" height="1.5" fill="#f8f8f2"/>
<rect x="1154.20" y="692.0" width="19.76" height="1.5" fill="#e6db74"/>
<rect x="1174.91" y="692.0" width="11.29" height="1.5" fill="#a6e22e"/>
<rect x="1186.20" y="692.0" width="0.94" height="1.5" fill="#f8f8f2"/>
<rect x="1187.14" y="692.0" width="5.65" height="1.5" fill="#e6db74"/>
<rect x="1192.79" y="692.0" width="0.94" height="1.5" fill="#f8f8f2"/>
<rect x="1143.85" y="694.0" width="0.94" height="1.5" fill="#f8f8f2"/>
<rect x="1144.79" y="694.0" width="4.71" height="1.5" fill="#f92672"/>
<rect x="1149.49" y="694.0" width="3.76" height="1.5" fill="#f8f8f2"/>
<rect x="1153.26" y="694.0" width="4.71" height="1.5" fill="#66d9ef"/>
<rect x="1157.96" y="694.0" width="0.94" height="1.5" fill="#f8f8f2"/>
<rect x="1158.91" y="694.0" width="7.53" height="1.5" fill="#e6db74"/>
<rect x="1167.38" y="694.0" width="6.59" height="1.5" fill="#e6db74"/>
<rect x="1174.91" y="694.0" width="4.71" height="1.5" fill="#e6db74"/>
<rect x="1180.55" y="694.0" width="1.88" height="1.5" fill="#e6db74"/>
<rect x="1183.38" y="694.0" width="7.53" height="1.5" fill="#e6db74"/>
<rect x="1191.85" y="694.0" width="7.53" height="1.5" fill="#e6db74"/>
<rect x="1200.32" y="694.0" width="4.71" height="1.5" fill="#e6db74"/>
<rect x="1205.96" y="694.0" width="3.76" height="1.5" fill="#e6db74"/>
<rect x="1210.67" y="694.0" width="6.59" height="1.5" fill="#e6db74"/>
<rect x="1218.20" y="694.0" width="8.47" height="1.5" fill="#e6db74"/>
<rect x="1227.61" y="694.0" width="4.71" height="1.5" fill="#e6db74"/>
<rect x="1233.26" y="694.0" width="5.65" height="1.5" fill="#e6db74"/>
<rect x="1239.85" y="694.0" width="4.71" height="1.5" fill="#e6db74"/>
<rect x="1245.49" y="694.0" width="2.82" height="1.5" fill="#e6db74"/>
<rect x="1249.26" y="694.0" width="1.88" height="1.5" fill="#e6db74"/>
<rect x="1143.85" y="696.0" width="5.65" height="1.5" fill="#e6db74"/>
<rect x="1150.44" y="696.0" width="1.88" height="1.5" fill="#e6db74"/>
<rect x="1153.26" y="696.0" width="5.65" height="1.5" fill="#e6db74"/>
<rect x="1159.85" y="696.0" width="0.94" height="1.5" fill="#e6db74"/>
<rect x="1161.73" y="696.0" width="0.94" height="1.5" fill="#e6db74"/>
<rect x="1163.61" y="696.0" width="8.47" height="1.5" fill="#e6db74"/>
<rect x="1173.02" y="696.0" width="5.65" height="1.5" fill="#e6db74"/>
<rect x="1179.61" y="696.0" width="8.47" height="1.5" fill="#e6db74"/>
<rect x="1189.02" y="696.0" width="5.65" height="1.5" fill="#e6db74"/>
<rect x="1195.61" y="696.0" width="5.65" height="1.5" fill="#e6db74"/>
<rect x="1202.20" y="696.0" width="1.88" height="1.5" fill="#e6db74"/>
<rect x="1138.20" y="698.0" width="4.71" height="1.5" fill="#e6db74"/>
<rect x="1138.20" y="700.0" width="1.88" height="1.5" fill="#e6db74"/>
<rect x="1141.02" y="700.0" width="4.71" height="1.5" fill="#e6db74"/>
<rect x="1146.67" y="700.0" width="5.65" height="1.5" fill="#e6db74"/>
<rect x="1153.26" y="700.0" width="2.82" height="1.5" fill="#e6db74"/>
<rect x="1157.02" y="700.0" width="2.82" height="1.5" fill="#e6db74"/>
<rect x="1160.79" y="700.0" width="2.82" height="1.5" fill="#e6db74"/>
<rect x="1164.55" y="700.0" width="0.94" height="1.5" fill="#e6db74"/>
<rect x="1166.44" y="700.0" width="5.65" height="1.5" fill="#e6db74"/>
<rect x="1173.02" y="700.0" width="7.53" height="1.5" fill="#e6db74"/>
<rect x="1181.49" y="700.0" width="1.88" height="1.5" fill="#e6db74"/>
<rect x="1184.32" y="700.0" width="2.82" height="1.5" fill="#e6db74"/>
<rect x="1188.08" y="700.0" width="4.71" height="1.5" fill="#e6db74"/>
<rect x="1193.73" y="700.0" width="4.71" height="1.5" fill="#e6db74"/>
<rect x="1199.38" y="700.0" width="0.94" height="1.5" fill="#e6db74"/>
<rect x="1201.26" y="700.0" width="4.71" height="1.5" fill="#e6db74"/>
<rect x="1206.91" y="700.0" width="4.71" height="1.5" fill="#e6db74"/>
<rect x="1212.55" y="700.0" width="1.88" height="1.5" fill="#e6db74"/>
<rect x="1215.38" y="700.0" width="8.47" height="1.5" fill="#e6db74"/>
<rect x="1224.79" y="700.0" width="4.71" height="1.5" fill="#e6db74"/>
<rect x="1230.44" y="700.0" width="5.65" height="1.5" fill="#e6db74"/>
<rect x="1237.02" y="700.0" width="7.53" height="1.5" fill="#e6db74"/>
<rect x="1245.49" y="700.0" width="8.47" height="1.5" fill="#e6db74"/>
<rect x="1254.91" y="700.0" width="5.65" height="1.5" fill="#e6db74"/>
<rect x="1261.49" y="700.0" width="0.94" height="1.5" fill="#e6db74"/>
<rect x="1138.20" y="702.0" width="4.71" height="1.5" fill="#e6db74"/>
<rect x="1143.85" y="702.0" width="5.65" height="1.5" fill="#e6db74"/>
<rect x="1150.44" y="702.0" width="8.47" height="1.5" fill="#e6db74"/>
<rect x="1159.85" y="702.0" width="0.94" height="1.5" fill="#e6db74"/>
<rect x="1161.73" y="702.0" width="5.65" height="1.5" fill="#e6db74"/>
<rect x="1168.32" y="702.0" width="2.82" height="1.5" fill="#e6db74"/>
<rect x="1172.08" y="702.0" width="3.76" height="1.5" fill="#e6db74"/>
<rect x="1176.79" y="702.0" width="1.88" height="1.5" fill="#e6db74"/>
<rect x="1179.61" y="702.0" width="0.94" height="1.5" fill="#e6db74"/>
<rect x="1181.49" y="702.0" width="2.82" height="1.5" fill="#e6db74"/>
<rect x="1185.26" y="702.0" width="5.65" height="1.5" fill="#e6db74"/>
<rect x="1191.85" y="702.0" width="0.94" height="1.5" fill="#e6db74"/>
<rect x="1193.73" y="702.0" width="5.65" height="1.5" fill="#e6db74"/>
<rect x="1200.32" y="702.0" width="6.59" height="1.5" fill="#e6db74"/>
<rect x="1207.85" y="702.0" width="5.65" height="1.5" fill="#e6db74"/>
<rect x="1214.44" y="702.0" width="5.65" height="1.5" fill="#e6db74"/>
<rect x="1221.02" y="702.0" width="4.71" height="1.5" fill="#e6db74"/>
<rect x="1226.67" y="702.0" width="0.94" height="1.5" fill="#e6db74"/>
<rect x="1228.55" y="702.0" width="3.76" height="1.5" fill="#e6db74"/>
<rect x="1233.26" y="702.0" width="7.53" height="1.5" fill="#e6db74"/>
<rect x="1241.73" y="702.0" width="4.71" height="1.5" fill="#e6db74"/>
<rect x="1247.38" y="702.0" width="4.71" height="1.5" fill="#e6db74"/>
<rect x="1253.02" y="702.0" width="2.82" height="1.5" fill="#e6db74"/>
<rect x="1256.79" y="702.0" width="2.82" height="1.5" fill="#e6db74"/>
<rect x="1260.55" y="702.0" width="1.88" height="1.5" fill="#e6db74"/>
<rect x="1138.20" y="704.0" width="2.82" height="1.5" fill="#e6db74"/>
<rect x="1141.96" y="704.0" width="7.53" height="1.5" fill="#e6db74"/>
<rect x="1150.44" y="704.0" width="5.65" height="1.5" fill="#e6db74"/>
<rect x="1157.02" y="704.0" width="6.59" height="1.5" fill="#e6db74"/>
<rect x="1164.55" y="704.0" width="2.82" height="1.5" fill="#e6db74"/>
<rect x="1168.32" y="704.0" width="5.65" height="1.5" fill="#e6db74"/>
<rect x="1174.91" y="704.0" width="2.82" height="1.5" fill="#e6db74"/>
<rect x="1178.67" y="704.0" width="7.53" height="1.5" fill="#e6db74"/>
<rect x="1187.14" y="704.0" width="7.53" height="1.5" fill="#e6db74"/>
<rect x="1195.61" y="704.0" width="4.71" height="1.5" fill="#e6db74"/>
<rect x="1201.26" y="704.0" width="4.71" height="1.5" fill="#e6db74"/>
<rect x="1206.91" y="704.0" width="5.65" height="1.5" fill="#e6db74"/>
<rect x="1213.49" y="704.0" width="7.53" height="1.5" fill="#e6db74"/>
<rect x="1221.96" y="704.0" width="3.76" height="1.5" fill="#e6db74"/>
<rect x="1226.67" y="704.0" width="7.53" height="1.5" fill="#e6db74"/>
<rect x="1235.14" y="704.0" width="5.65" height="1.5" fill="#e6db74"/>
<rect x="1241.73" y="704.0" width="5.65" height="1.5" fill="#e6db74"/>
<rect x="1248.32" y="704.0" width="7.53" height="1.5" fill="#e6db74"/>
<rect x="1256.79" y="704.0" width="0.94" height="1.5" fill="#e6db74"/>
<rect x="1138.20" y="706.0" width="8.47" height="1.5" fill="#e6db74"/>
<rect x="1147.61" y="706.0" width="5.65" height="1.5" fill="#e6db74"/>
<rect x="1154.20" y="706.0" width="4.71" height="1.5" fill="#e6db74"/>
<rect x="1159.85" y="706.0" width="0.94" height="1.5" fill="#e6db74"/>
<rect x="1161.73" y="706.0" width="4.71" height="1.5" fill="#e6db74"/>
<rect x="1167.38" y="706.0" width="0.94" height="1.5" fill="#e6db74"/>
<rect x="1138.20" y="708.0" width="4.71" height="1.5" fill="#e6db74"/>
<rect x="1138.20" y="710.0" width="0.94" height="1.5" fill="#e6db74"/>
<rect x="1140.08" y="710.0" width="4.71" height="1.5" fill="#e6db74"/>
<rect x="1145.73" y="710.0" width="7.53" height="1.5" fill="#e6db74"/>
<rect x="1154.20" y="710.0" width="2.82" height="1.5" fill="#e6db74"/>
<rect x="1157.96" y="710.0" width="4.71" height="1.5" fill="#e6db74"/>
<rect x="1163.61" y="710.0" width="1.88" height="1.5" fill="#e6db74"/>
<rect x="1166.44" y="710.0" width="4.71" height="1.5" fill="#e6db74"/>
<rect x="1172.08" y="710.0" width="3.76" height="1.5" fill="#e6db74"/>
<rect x="1176.79" y="710.0" width="8.47" height="1.5" fill="#e6db74"/>
<rect x="1186.20" y="710.0" width="0.94" height="1.5" fill="#e6db74"/>
<rect x="1188.08" y="710.0" width="4.71" height="1.5" fill="#e6db74"/>
<rect x="1193.73" y="710.0" width="7.53" height="1.5" fill="#e6db74"/>
<rect x="1202.20" y="710.0" width="1.88" height="1.5" fill="#e6db74"/>
<rect x="1205.02" y="710.0" width="0.94" height="1.5" fill="#e6db74"/>
<rect x="1206.91" y="710.0" width="0.94" height="1.5" fill="#e6db74"/>
<rect x="1208.79" y="710.0" width="5.65" height="1.5" fill="#e6db74"/>
<rect x="1215.38" y="710.0" width="8.47" height="1.5" fill="#e6db74"/>
<rect x="1224.79" y="710.0" width="8.47" height="1.5" fill="#e6db74"/>
<rect x="1234.20" y="710.0" width="8.47" height="1.5" fill="#e6db74"/>
<rect x="1243.61" y="710.0" width="7.53" height="1.5" fill="#e6db74"/>
<rect x="1252.08" y="710.0" width="5.65" height="1.5" fill="#e6db74"/>
<rect x="1258.67" y="710.0" width="1.88" height="1.5" fill="#e6db74"/>
<rect x="1261.49" y="710.0" width="0.94" height="1.5" fill="#e6db74"/>
<rect x="1138.20" y="712.0" width="5.65" height="1.5" fill="#e6db74"/>
<rect x="1144.79" y="712.0" width="4.71" height="1.5" fill="#e6db74"/>
<rect x="1150.44" y="712.0" width="4.71" height="1.5" fill="#e6db74"/>
<rect x="1156.08" y="712.0" width="7.53" height="1.5" fill="#e6db74"/>
<rect x="1164.55" y="712.0" width="2.82" height="1.5" fill="#e6db74"/>
<rect x="1168.32" y="712.0" width="7.53" height="1.5" fill="#e6db74"/>
<rect x="1176.79" y="712.0" width="5.65" height="1.5" fill="#e6db74"/>
<rect x="1183.38" y="712.0" width="5.65" height="1.5" fill="#e6db74"/>
<rect x="1189.96" y="712.0" width="5.65" height="1.5" fill="#e6db74"/>
<rect x="1196.55" y="712.0" width="2.82" height="1.5" fill="#e6db74"/>
<rect x="1200.32" y="712.0" width="4.71" height="1.5" fill="#e6db74"/>
<rect x="1205.96" y="712.0" width="5.65" height="1.5" fill="#e6db74"/>
<rect x="1212.55" y="712.0" width="5.65" height="1.5" fill="#e6db74"/>
<rect x="1219.14" y="712.0" width="5.65" height="1.5" fill="#e6db74"/>
<rect x="1225.73" y="712.0" width="0.94" height="1.5" fill="#e6db74"/>
<rect x="1227.61" y="712.0" width="5.65" height="1.5" fill="#e6db74"/>
<rect x="1234.20" y="712.0" width="5.65" height="1.5" fill="#e6db74"/>
<rect x="1240.79" y="712.0" width="1.88" height="1.5" fill="#e6db74"/>
<rect x="1243.61" y="712.0" width="5.65" height="1.5" fill="#e6db74"/>
<rect x="1250.20" y="712.0" width="2.82" height="1.5" fill="#e6db74"/>
<rect x="1138.20" y="714.0" width="4.71" height="1.5" fill="#e6db74"/>
<rect x="1138.20" y="716.0" width="5.65" height="1.5" fill="#e6db74"/>
<rect x="1144.79" y="716.0" width="5.65" height="1.5" fill="#e6db74"/>
<rect x="1151.38" y="716.0" width="5.65" height="1.5" fill="#e6db74"/>
<rect x="1157.96" y="716.0" width="5.65" height="1.5" fill="#e6db74"/>
<rect x="1164.55" y="716.0" width="2.82" height="1.5" fill="#e6db74"/>
<rect x="1168.32" y="716.0" width="7.53" height="1.5" fill="#e6db74"/>
<rect x="1176.79" y="716.0" width="7.53" height="1.5" fill="#e6db74"/>
<rect x="1185.26" y="716.0" width="4.71" height="1.5" fill="#e6db74"/>
<rect x="1190.91" y="716.0" width="7.53" height="1.5" fill="#e6db74"/>
<rect x="1199.38" y="716.0" width="3.76" height="1.5" fill="#e6db74"/>
<rect x="1138.20" y="718.0" width="7.53" height="1.5" fill="#e6db74"/>
<rect x="1146.67" y="718.0" width="0.94" height="1.5" fill="#e6db74"/>
<rect x="1148.55" y="718.0" width="4.71" height="1.5" fill="#e6db74"/>
<rect x="1138.20" y="720.0" width="6.59" height="1.5" fill="#e6db74"/>
<rect x="1145.73" y="720.0" width="7.53" height="1.5" fill="#e6db74"/>
<rect x="1154.20" y="720.0" width="1.88" height="1.5" fill="#e6db74"/>
<rect x="1157.02" y="720.0" width="5.65" height="1.5" fill="#e6db74"/>
<rect x="1163.61" y="720.0" width="4.71" height="1.5" fill="#e6db74"/>
<rect x="1138.20" y="722.0" width="5.65" height="1.5" fill="#e6db74"/>
<rect x="1144.79" y="722.0" width="3.76" height="1.5" fill="#e6db74"/>
<rect x="1149.49" y="722.0" width="2.82" height="1.5" fill="#e6db74"/>
<rect x="1138.20" y="724.0" width="7.53" height="1.5" fill="#e6db74"/>
<rect x="1146.67" y="724.0" width="7.53" height="1.5" fill="#e6db74"/>
<rect x="1154.20" y="724.0" width="4.71" height="1.5" fill="#f8f8f2"/>
<rect x="1158.91" y="724.0" width="4.71" height="1.5" fill="#f92672"/>
<rect x="1163.61" y="724.0" width="0.94" height="1.5" fill="#f8f8f2"/>
<rect x="1143.85" y="726.0" width="0.94" height="1.5" fill="#f8f8f2"/>
<rect x="1144.79" y="726.0" width="3.76" height="1.5" fill="#f92672"/>
<rect x="1149.49" y="726.0" width="5.65" height="1.5" fill="#a6e22e"/>
<rect x="1155.14" y="726.0" width="0.94" height="1.5" fill="#f8f8f2"/>
<rect x="1156.08" y="726.0" width="6.59" height="1.5" fill="#e6db74"/>
<rect x="1162.67" y="726.0" width="6.59" height="1.5" fill="#f8f8f2"/>
<rect x="1170.20" y="726.0" width="7.53" height="1.5" fill="#f8f8f2"/>
<rect x="1177.73" y="726.0" width="3.76" height="1.5" fill="#f92672"/>
<rect x="1181.49" y="726.0" width="0.94" height="1.5" fill="#f8f8f2"/>
<rect x="1141.96" y="728.0" width="1.88" height="1.5" fill="#f8f8f2"/>
<rect x="1143.85" y="728.0" width="6.59" height="1.5" fill="#f92672"/>
<rect x="1150.44" y="728.0" width="0.94" height="1.5" fill="#f8f8f2"/>
<rect x="1141.96" y="730.0" width="3.76" height="1.5" fill="#75715e"/>
<rect x="1146.67" y="730.0" width="8.47" height="1.5" fill="#75715e"/>
<rect x="1156.08" y="730.0" width="1.88" height="1.5" fill="#75715e"/>
<rect x="1158.91" y="730.0" width="2.82" height="1.5" fill="#75715e"/>
<rect x="1141.96" y="732.0" width="0.94" height="1.5" fill="#f8f8f2"/>
<rect x="1142.91" y="732.0" width="6.59" height="1.5" fill="#f92672"/>
<rect x="1150.44" y="732.0" width="2.82" height="1.5" fill="#a6e22e"/>
<rect x="1153.26" y="732.0" width="0.94" height="1.5" fill="#f8f8f2"/>
<rect x="1154.20" y="732.0" width="22.59" height="1.5" fill="#e6db74"/>
<rect x="1177.73" y="732.0" width="11.29" height="1.5" fill="#a6e22e"/>
<rect x="1189.02" y="732.0" width="0.94" height="1.5" fill="#f8f8f2"/>
<rect x="1189.96" y="732.0" width="14.12" height="1.5" fill="#e6db74"/>
<rect x="1204.08" y="732.0" width="0.94" height="1.5" fill="#f8f8f2"/>
<rect x="1143.85" y="734.0" width="0.94" height="1.5" fill="#f8f8f2"/>
<rect x="1144.79" y="734.0" width="4.71" height="1.5" fill="#f92672"/>
<rect x="1149.49" y="734.0" width="6.59" height="1.5" fill="#f8f8f2"/>
<rect x="1156.08" y="734.0" width="4.71" height="1.5" fill="#f92672"/>
<rect x="1160.79" y="734.0" width="0.94" height="1.5" fill="#f8f8f2"/>
<rect x="1143.85" y="736.0" width="0.94" height="1.5" fill="#f8f8f2"/>
<rect x="1144.79" y="736.0" width="3.76" height="1.5" fill="#f92672"/>
<rect x="1149.49" y="736.0" width="5.65" height="1.5" fill="#a6e22e"/>
<rect x="1155.14" y="736.0" width="0.94" height="1.5" fill="#f8f8f2"/>
<rect x="1156.08" y="736.0" width="6.59" height="1.5" fill="#e6db74"/>
<rect x="1162.67" y="736.0" width="0.94" height="1.5" fill="#f8f8f2"/>
<rect x="1153.26" y="738.0" width="6.59" height="1.5" fill="#f8f8f2"/>
<rect x="1160.79" y="738.0" width="5.65" height="1.5" fill="#f8f8f2"/>
<rect x="1167.38" y="738.0" width="6.59" height="1.5" fill="#f8f8f2"/>
<rect x="1143.85" y="740.0" width="1.88" height="1.5" fill="#f8f8f2"/>
<rect x="1145.73" y="740.0" width="3.76" height="1.5" fill="#f92672"/>
<rect x="1149.49" y="740.0" width="0.94" height="1.5" fill="#f8f8f2"/>
<rect x="1141.96" y="742.0" width="1.88" height="1.5" fill="#f8f8f2"/>
<rect x="1143.85" y="742.0" width="6.59" height="1.5" fill="#f92672"/>
<rect x="1150.44" y="742.0" width="0.94" height="1.5" fill="#f8f8f2"/>
<rect x="1141.96" y="744.0" width="0.94" height="1.5" fill="#f8f8f2"/>
<rect x="1142.91" y="744.0" width="6.59" height="1.5" fill="#f92672"/>
<rect x="1150.44" y="744.0" width="2.82" height="1.5" fill="#a6e22e"/>
<rect x="1153.26" y="744.0" width="0.94" height="1.5" fill="#f8f8f2"/>
<rect x="1154.20" y="744.0" width="28.24" height="1.5" fill="#e6db74"/>
<rect x="1183.38" y="744.0" width="11.29" height="1.5" fill="#a6e22e"/>
<rect x="1194.67" y="744.0" width="0.94" height="1.5" fill="#f8f8f2"/>
<rect x="1195.61" y="744.0" width="10.35" height="1.5" fill="#e6db74"/>
<rect x="1205.96" y="744.0" width="0.94" height="1.5" fill="#f8f8f2"/>
<rect x="1143.85" y="746.0" width="0.94" height="1.5" fill="#f8f8f2"/>
<rect x="1144.79" y="746.0" width="4.71" height="1.5" fill="#f92672"/>
<rect x="1149.49" y="746.0" width="1.88" height="1.5" fill="#f8f8f2"/>
<rect x="1143.85" y="748.0" width="0.94" height="1.5" fill="#f8f8f2"/>
<rect x="1144.79" y="748.0" width="3.76" height="1.5" fill="#f92672"/>
<rect x="1149.49" y="748.0" width="5.65" height="1.5" fill="#a6e22e"/>
<rect x="1155.14" y="748.0" width="0.94" height="1.5" fill="#f8f8f2"/>
<rect x="1156.08" y="748.0" width="6.59" height="1.5" fill="#e6db74"/>
<rect x="1162.67" y="748.0" width="6.59" height="1.5" fill="#f8f8f2"/>
<rect x="1170.20" y="748.0" width="4.71" height="1.5" fill="#f8f8f2"/>
<rect x="1175.85" y="748.0" width="7.53" height="1.5" fill="#f8f8f2"/>
<rect x="1183.38" y="748.0" width="3.76" height="1.5" fill="#f92672"/>
<rect x="1187.14" y="748.0" width="0.94" height="1.5" fill="#f8f8f2"/>
<rect x="1141.96" y="750.0" width="1.88" height="1.5" fill="#f8f8f2"/>
<rect x="1143.85" y="750.0" width="6.59" height="1.5" fill="#f92672"/>
<rect x="1150.44" y="750.0" width="0.94" height="1.5" fill="#f8f8f2"/>
<rect x="1141.96" y="752.0" width="0.94" height="1.5" fill="#f8f8f2"/>
<rect x="1142.91" y="752.0" width="6.59" height="1.5" fill="#f92672"/>
<rect x="1150.44" y="752.0" width="2.82" height="1.5" fill="#a6e22e"/>
<rect x="1153.26" y="752.0" width="0.94" height="1.5" fill="#f8f8f2"/>
<rect x="1154.20" y="752.0" width="17.88" height="1.5" fill="#e6db74"/>
<rect x="1173.02" y="752.0" width="11.29" height="1.5" fill="#a6e22e"/>
<rect x="1184.32" y="752.0" width="0.94" height="1.5" fill="#f8f8f2"/>
<rect x="1185.26" y="752.0" width="5.65" height="1.5" fill="#e6db74"/>
<rect x="1190.91" y="752.0" width="0.94" height="1.5" fill="#f8f8f2"/>
<rect x="1143.85" y="754.0" width="0.94" height="1.5" fill="#f8f8f2"/>
<rect x="1144.79" y="754.0" width="4.71" height="1.5" fill="#f92672"/>
<rect x="1149.49" y="754.0" width="3.76" height="1.5" fill="#f8f8f2"/>
<rect x="1153.26" y="754.0" width="4.71" height="1.5" fill="#66d9ef"/>
<rect x="1157.96" y="754.0" width="0.94" height="1.5" fill="#f8f8f2"/>
<rect x="1158.91" y="754.0" width="2.82" height="1.5" fill="#e6db74"/>
<rect x="1162.67" y="754.0" width="4.71" height="1.5" fill="#e6db74"/>
<rect x="1168.32" y="754.0" width="5.65" height="1.5" fill="#e6db74"/>
<rect x="1174.91" y="754.0" width="6.59" height="1.5" fill="#e6db74"/>
<rect x="1182.44" y="754.0" width="7.53" height="1.5" fill="#e6db74"/>
<rect x="1189.96" y="754.0" width="4.71" height="1.5" fill="#f8f8f2"/>
<rect x="1194.67" y="754.0" width="4.71" height="1.5" fill="#f92672"/>
<rect x="1199.38" y="754.0" width="0.94" height="1.5" fill="#f8f8f2"/>
<rect x="1143.85" y="756.0" width="0.94" height="1.5" fill="#f8f8f2"/>
<rect x="1144.79" y="756.0" width="3.76" height="1.5" fill="#f92672"/>
<rect x="1149.49" y="756.0" width="5.65" height="1.5" fill="#a6e22e"/>
<rect x="1155.14" y="756.0" width="0.94" height="1.5" fill="#f8f8f2"/>
<rect x="1156.08" y="756.0" width="6.59" height="1.5" fill="#e6db74"/>
<rect x="1162.67" y="756.0" width="8.47" height="1.5" fill="#f8f8f2"/>
<rect x="1172.08" y="756.0" width="4.71" height="1.5" fill="#f8f8f2"/>
<rect x="1176.79" y="756.0" width="3.76" height="1.5" fill="#f92672"/>
<rect x="1180.55" y="756.0" width="0.94" height="1.5" fill="#f8f8f2"/>
<rect x="1141.96" y="758.0" width="1.88" height="1.5" fill="#f8f8f2"/>
<rect x="1143.85" y="758.0" width="6.59" height="1.5" fill="#f92672"/>
<rect x="1150.44" y="758.0" width="0.94" height="1.5" fill="#f8f8f2"/>
<rect x="1141.96" y="760.0" width="0.94" height="1.5" fill="#f8f8f2"/>
<rect x="1142.91" y="760.0" width="6.59" height="1.5" fill="#f92672"/>
<rect x="1150.44" y="760.0" width="2.82" height="1.5" fill="#a6e22e"/>
<rect x="1153.26" y="760.0" width="0.94" height="1.5" fill="#f8f8f2"/>
<rect x="1154.20" y="760.0" width="18.82" height="1.5" fill="#e6db74"/>
<rect x="1173.96" y="760.0" width="11.29" height="1.5" fill="#a6e22e"/>
<rect x="1185.26" y="760.0" width="0.94" height="1.5" fill="#f8f8f2"/>
<rect x="1186.20" y="760.0" width="5.65" height="1.5" fill="#e6db74"/>
<rect x="1191.85" y="760.0" width="0.94" height="1.5" fill="#f8f8f2"/>
<rect x="1143.85" y="762.0" width="0.94" height="1.5" fill="#f8f8f2"/>
<rect x="1144.79" y="762.0" width="4.71" height="1.5" fill="#f92672"/>
<rect x="1149.49" y="762.0" width="3.76" height="1.5" fill="#f8f8f2"/>
<rect x="1153.26" y="762.0" width="4.71" height="1.5" fill="#66d9ef"/>
<rect x="1157.96" y="762.0" width="0.94" height="1.5" fill="#f8f8f2"/>
<rect x="1158.91" y="762.0" width="6.59" height="1.5" fill="#e6db74"/>
<rect x="1166.44" y="762.0" width="4.71" height="1.5" fill="#e6db74"/>
<rect x="1172.08" y="762.0" width="5.65" height="1.5" fill="#e6db74"/>
<rect x="1178.67" y="762.0" width="4.71" height="1.5" fill="#e6db74"/>
<rect x="1184.32" y="762.0" width="4.71" height="1.5" fill="#e6db74"/>
<rect x="1189.96" y="762.0" width="5.65" height="1.5" fill="#e6db74"/>
<rect x="1196.55" y="762.0" width="7.53" height="1.5" fill="#e6db74"/>
<rect x="1205.02" y="762.0" width="6.59" height="1.5" fill="#e6db74"/>
<rect x="1212.55" y="762.0" width="5.65" height="1.5" fill="#e6db74"/>
<rect x="1219.14" y="762.0" width="6.59" height="1.5" fill="#e6db74"/>
<rect x="1226.67" y="762.0" width="4.71" height="1.5" fill="#e6db74"/>
<rect x="1232.32" y="762.0" width="5.65" height="1.5" fill="#e6db74"/>
<rect x="1238.91" y="762.0" width="5.65" height="1.5" fill="#e6db74"/>
<rect x="1245.49" y="762.0" width="7.53" height="1.5" fill="#e6db74"/>
<rect x="1253.96" y="762.0" width="2.82" height="1.5" fill="#e6db74"/>
<rect x="1143.85" y="764.0" width="8.47" height="1.5" fill="#e6db74"/>
<rect x="1153.26" y="764.0" width="5.65" height="1.5" fill="#e6db74"/>
<rect x="1159.85" y="764.0" width="5.65" height="1.5" fill="#e6db74"/>
<rect x="1166.44" y="764.0" width="0.94" height="1.5" fill="#e6db74"/>
<rect x="1168.32" y="764.0" width="5.65" height="1.5" fill="#e6db74"/>
<rect x="1174.91" y="764.0" width="7.53" height="1.5" fill="#e6db74"/>
<rect x="1183.38" y="764.0" width="8.47" height="1.5" fill="#e6db74"/>
<rect x="1192.79" y="764.0" width="5.65" height="1.5" fill="#e6db74"/>
<rect x="1199.38" y="764.0" width="4.71" height="1.5" fill="#e6db74"/>
<rect x="1205.02" y="764.0" width="8.47" height="1.5" fill="#e6db74"/>
<rect x="1214.44" y="764.0" width="2.82" height="1.5" fill="#e6db74"/>
<rect x="1218.20" y="764.0" width="8.47" height="1.5" fill="#e6db74"/>
<rect x="1227.61" y="764.0" width="5.65" height="1.5" fill="#e6db74"/>
<rect x="1234.20" y="764.0" width="4.71" height="1.5" fill="#e6db74"/>
<rect x="1239.85" y="764.0" width="7.53" height="1.5" fill="#e6db74"/>
<rect x="1248.32" y="764.0" width="4.71" height="1.5" fill="#e6db74"/>
<rect x="1253.96" y="764.0" width="5.65" height="1.5" fill="#e6db74"/>
<rect x="1260.55" y="764.0" width="1.88" height="1.5" fill="#e6db74"/>
<rect x="1143.85" y="766.0" width="7.53" height="1.5" fill="#e6db74"/>
<rect x="1152.32" y="766.0" width="5.65" height="1.5" fill="#e6db74"/>
<rect x="1158.91" y="766.0" width="5.65" height="1.5" fill="#e6db74"/>
<rect x="1165.49" y="766.0" width="4.71" height="1.5" fill="#e6db74"/>
<rect x="1171.14" y="766.0" width="5.65" height="1.5" fill="#e6db74"/>
<rect x="1177.73" y="766.0" width="5.65" height="1.5" fill="#e6db74"/>
<rect x="1184.32" y="766.0" width="4.71" height="1.5" fill="#e6db74"/>
<rect x="1189.96" y="766.0" width="7.53" height="1.5" fill="#e6db74"/>
<rect x="1198.44" y="766.0" width="5.65" height="1.5" fill="#e6db74"/>
<rect x="1205.02" y="766.0" width="2.82" height="1.5" fill="#e6db74"/>
<rect x="1208.79" y="766.0" width="5.65" height="1.5" fill="#e6db74"/>
<rect x="1215.38" y="766.0" width="5.65" height="1.5" fill="#e6db74"/>
<rect x="1221.96" y="766.0" width="5.65" height="1.5" fill="#e6db74"/>
<rect x="1228.55" y="766.0" width="0.94" height="1.5" fill="#e6db74"/>
<rect x="1230.44" y="766.0" width="7.53" height="1.5" fill="#e6db74"/>
<rect x="1238.91" y="766.0" width="4.71" height="1.5" fill="#e6db74"/>
<rect x="1244.55" y="766.0" width="4.71" height="1.5" fill="#e6db74"/>
<rect x="1250.20" y="766.0" width="6.59" height="1.5" fill="#e6db74"/>
<rect x="1257.73" y="766.0" width="4.71" height="1.5" fill="#e6db74"/>
<rect x="1143.85" y="768.0" width="0.94" height="1.5" fill="#e6db74"/>
<rect x="1144.79" y="768.0" width="4.71" height="1.5" fill="#f8f8f2"/>
<rect x="1149.49" y="768.0" width="4.71" height="1.5" fill="#f92672"/>
<rect x="1154.20" y="768.0" width="0.94" height="1.5" fill="#f8f8f2"/>
<rect x="1143.85" y="770.0" width="0.94" height="1.5" fill="#f8f8f2"/>
<rect x="1144.79" y="770.0" width="3.76" height="1.5" fill="#f92672"/>
<rect x="1149.49" y="770.0" width="5.65" height="1.5" fill="#a6e22e"/>
<rect x="1155.14" y="770.0" width="0.94" height="1.5" fill="#f8f8f2"/>
<rect x="1156.08" y="770.0" width="6.59" height="1.5" fill="#e6db74"/>
<rect x="1162.67" y="770.0" width="1.88" height="1.5" fill="#f8f8f2"/>
<rect x="1165.49" y="770.0" width="5.65" height="1.5" fill="#f8f8f2"/>
<rect x="1172.08" y="770.0" width="3.76" height="1.5" fill="#f8f8f2"/>
<rect x="1175.85" y="770.0" width="3.76" height="1.5" fill="#f92672"/>
<rect x="1179.61" y="770.0" width="0.94" height="1.5" fill="#f8f8f2"/>
<rect x="1141.96" y="772.0" width="1.88" height="1.5" fill="#f8f8f2"/>
<rect x="1143.85" y="772.0" width="6.59" height="1.5" fill="#f92672"/>
<rect x="1150.44" y="772.0" width="0.94" height="1.5" fill="#f8f8f2"/>
<rect x="1141.96" y="774.0" width="0.94" height="1.5" fill="#f8f8f2"/>
<rect x="1142.91" y="774.0" width="6.59" height="1.5" fill="#f92672"/>
<rect x="1150.44" y="774.0" width="2.82" height="1.5" fill="#a6e22e"/>
<rect x="1153.26" y="774.0" width="0.94" height="1.5" fill="#f8f8f2"/>
<rect x="1154.20" y="774.0" width="30.12" height="1.5" fill="#e6db74"/>
<rect x="1185.26" y="774.0" width="11.29" height="1.5" fill="#a6e22e"/>
<rect x="1196.55" y="774.0" width="0.94" height="1.5" fill="#f8f8f2"/>
<rect x="1197.49" y="774.0" width="10.35" height="1.5" fill="#e6db74"/>
<rect x="1207.85" y="774.0" width="0.94" height="1.5" fill="#f8f8f2"/>
<rect x="1143.85" y="776.0" width="0.94" height="1.5" fill="#f8f8f2"/>
<rect x="1144.79" y="776.0" width="4.71" height="1.5" fill="#f92672"/>
<rect x="1149.49" y="776.0" width="1.88" height="1.5" fill="#f8f8f2"/>
<rect x="1143.85" y="778.0" width="0.94" height="1.5" fill="#f8f8f2"/>
<rect x="1144.79" y="778.0" width="3.76" height="1.5" fill="#f92672"/>
<rect x="1149.49" y="778.0" width="5.65" height="1.5" fill="#a6e22e"/>
<rect x="1155.14" y="778.0" width="0.94" height="1.5" fill="#f8f8f2"/>
<rect x="1156.08" y="778.0" width="6.59" height="1.5" fill="#e6db74"/>
<rect x="1162.67" y="778.0" width="5.65" height="1.5" fill="#f8f8f2"/>
<rect x="1169.26" y="778.0" width="7.53" height="1.5" fill="#f8f8f2"/>
<rect x="1176.79" y="778.0" width="3.76" height="1.5" fill="#f92672"/>
<rect x="1180.55" y="778.0" width="0.94" height="1.5" fill="#f8f8f2"/>
<rect x="1141.96" y="780.0" width="1.88" height="1.5" fill="#f8f8f2"/>
<rect x="1143.85" y="780.0" width="6.59" height="1.5" fill="#f92672"/>
<rect x="1150.44" y="780.0" width="0.94" height="1.5" fill="#f8f8f2"/>
<rect x="1141.96" y="782.0" width="0.94" height="1.5" fill="#f8f8f2"/>
<rect x="1142.91" y="782.0" width="6.59" height="1.5" fill="#f92672"/>
<rect x="1150.44" y="782.0" width="2.82" height="1.5" fill="#a6e22e"/>
<rect x="1153.26" y="782.0" width="0.94" height="1.5" fill="#f8f8f2"/>
<rect x="1154.20" y="782.0" width="17.88" height="1.5" fill="#e6db74"/>
<rect x="1173.02" y="782.0" width="11.29" height="1.5" fill="#a6e22e"/>
<rect x="1184.32" y="782.0" width="0.94" height="1.5" fill="#f8f8f2"/>
<rect x="1185.26" y="782.0" width="6.59" height="1.5" fill="#e6db74"/>
<rect x="1191.85" y="782.0" width="0.94" height="1.5" fill="#f8f8f2"/>
<rect x="1143.85" y="784.0" width="0.94" height="1.5" fill="#f8f8f2"/>
<rect x="1144.79" y="784.0" width="4.71" height="1.5" fill="#f92672"/>
<rect x="1149.49" y="784.0" width="44.24" height="1.5" fill="#f8f8f2"/>
<rect x="1193.73" y="784.0" width="4.71" height="1.5" fill="#f92672"/>
<rect x="1198.44" y="784.0" width="0.94" height="1.5" fill="#f8f8f2"/>
<rect x="1143.85" y="786.0" width="0.94" height="1.5" fill="#f8f8f2"/>
<rect x="1144.79" y="786.0" width="6.59" height="1.5" fill="#f92672"/>
<rect x="1151.38" y="786.0" width="20.71" height="1.5" fill="#f8f8f2"/>
<rect x="1172.08" y="786.0" width="6.59" height="1.5" fill="#f92672"/>
<rect x="1178.67" y="786.0" width="0.94" height="1.5" fill="#f8f8f2"/>
<rect x="1143.85" y="788.0" width="0.94" height="1.5" fill="#f8f8f2"/>
<rect x="1144.79" y="788.0" width="3.76" height="1.5" fill="#f92672"/>
<rect x="1149.49" y="788.0" width="5.65" height="1.5" fill="#a6e22e"/>
<rect x="1155.14" y="788.0" width="0.94" height="1.5" fill="#f8f8f2"/>
<rect x="1156.08" y="788.0" width="6.59" height="1.5" fill="#e6db74"/>
<rect x="1162.67" y="788.0" width="6.59" height="1.5" fill="#f8f8f2"/>
<rect x="1170.20" y="788.0" width="3.76" height="1.5" fill="#f8f8f2"/>
<rect x="1173.96" y="788.0" width="3.76" height="1.5" fill="#f92672"/>
<rect x="1177.73" y="788.0" width="0.94" height="1.5" fill="#f8f8f2"/>
<rect x="1141.96" y="790.0" width="1.88" height="1.5" fill="#f8f8f2"/>
<rect x="1143.85" y="790.0" width="6.59" height="1.5" fill="#f92672"/>
<rect x="1150.44" y="790.0" width="0.94" height="1.5" fill="#f8f8f2"/>
<rect x="1141.96" y="794.0" width="0.94" height="1.5" fill="#f8f8f2"/>
<rect x="1142.91" y="794.0" width="6.59" height="1.5" fill="#f92672"/>
<rect x="1150.44" y="794.0" width="2.82" height="1.5" fill="#a6e22e"/>
<rect x="1153.26" y="794.0" width="0.94" height="1.5" fill="#f8f8f2"/>
<rect x="1154.20" y="794.0" width="25.41" height="1.5" fill="#e6db74"/>
<rect x="1180.55" y="794.0" width="11.29" height="1.5" fill="#a6e22e"/>
<rect x="1191.85" y="794.0" width="0.94" height="1.5" fill="#f8f8f2"/>
<rect x="1192.79" y="794.0" width="5.65" height="1.5" fill="#e6db74"/>
<rect x="1198.44" y="794.0" width="0.94" height="1.5" fill="#f8f8f2"/>
<rect x="1143.85" y="796.0" width="0.94" height="1.5" fill="#f8f8f2"/>
<rect x="1144.79" y="796.0" width="4.71" height="1.5" fill="#f92672"/>
<rect x="1149.49" y="796.0" width="6.59" height="1.5" fill="#f8f8f2"/>
<rect x="1157.02" y="796.0" width="5.65" height="1.5" fill="#f8f8f2"/>
<rect x="1163.61" y="796.0" width="3.76" height="1.5" fill="#f8f8f2"/>
<rect x="1167.38" y="796.0" width="4.71" height="1.5" fill="#f92672"/>
<rect x="1172.08" y="796.0" width="0.94" height="1.5" fill="#f8f8f2"/>
<rect x="1143.85" y="798.0" width="0.94" height="1.5" fill="#f8f8f2"/>
<rect x="1144.79" y="798.0" width="3.76" height="1.5" fill="#f92672"/>
<rect x="1149.49" y="798.0" width="5.65" height="1.5" fill="#a6e22e"/>
<rect x="1155.14" y="798.0" width="0.94" height="1.5" fill="#f8f8f2"/>
<rect x="1156.08" y="798.0" width="6.59" height="1.5" fill="#e6db74"/>
<rect x="1162.67" y="798.0" width="6.59" height="1.5" fill="#f8f8f2"/>
<rect x="1170.20" y="798.0" width="0.94" height="1.5" fill="#f8f8f2"/>
<rect x="1172.08" y="798.0" width="5.65" height="1.5" fill="#f8f8f2"/>
<rect x="1178.67" y="798.0" width="5.65" height="1.5" fill="#f8f8f2"/>
<rect x="1184.32" y="798.0" width="3.76" height="1.5" fill="#f92672"/>
<rect x="1188.08" y="798.0" width="0.94" height="1.5" fill="#f8f8f2"/>
<rect x="1141.96" y="800.0" width="1.88" height="1.5" fill="#f8f8f2"/>
<rect x="1143.85" y="800.0" width="6.59" height="1.5" fill="#f92672"/>
<rect x="1150.44" y="800.0" width="0.94" height="1.5" fill="#f8f8f2"/>
<rect x="1141.96" y="802.0" width="0.94" height="1.5" fill="#f8f8f2"/>
<rect x="1142.91" y="802.0" width="6.59" height="1.5" fill="#f92672"/>
<rect x="1150.44" y="802.0" width="2.82" height="1.5" fill="#a6e22e"/>
<rect x="1153.26" y="802.0" width="0.94" height="1.5" fill="#f8f8f2"/>
<rect x="1154.20" y="802.0" width="24.47" height="1.5" fill="#e6db74"/>
<rect x="1179.61" y="802.0" width="11.29" height="1.5" fill="#a6e22e"/>
<rect x="1190.91" y="802.0" width="0.94" height="1.5" fill="#f8f8f2"/>
<rect x="1191.85" y="802.0" width="5.65" height="1.5" fill="#e6db74"/>
<rect x="1197.49" y="802.0" width="0.94" height="1.5" fill="#f8f8f2"/>
<rect x="1143.85" y="804.0" width="0.94" height="1.5" fill="#f8f8f2"/>
<rect x="1144.79" y="804.0" width="4.71" height="1.5" fill="#f92672"/>
<rect x="1149.49" y="804.0" width="3.76" height="1.5" fill="#f8f8f2"/>
<rect x="1153.26" y="804.0" width="4.71" height="1.5" fill="#66d9ef"/>
<rect x="1157.96" y="804.0" width="0.94" height="1.5" fill="#f8f8f2"/>
<rect x="1158.91" y="804.0" width="0.94" height="1.5" fill="#e6db74"/>
<rect x="1160.79" y="804.0" width="6.59" height="1.5" fill="#e6db74"/>
<rect x="1168.32" y="804.0" width="0.94" height="1.5" fill="#e6db74"/>
<rect x="1170.20" y="804.0" width="5.65" height="1.5" fill="#e6db74"/>
<rect x="1176.79" y="804.0" width="5.65" height="1.5" fill="#e6db74"/>
<rect x="1183.38" y="804.0" width="4.71" height="1.5" fill="#e6db74"/>
<rect x="1189.02" y="804.0" width="0.94" height="1.5" fill="#e6db74"/>
<rect x="1138.20" y="806.0" width="5.65" height="1.5" fill="#e6db74"/>
<rect x="1144.79" y="806.0" width="0.94" height="1.5" fill="#e6db74"/>
<rect x="1146.67" y="806.0" width="5.65" height="1.5" fill="#e6db74"/>
<rect x="1153.26" y="806.0" width="1.88" height="1.5" fill="#e6db74"/>
<rect x="1138.20" y="808.0" width="5.65" height="1.5" fill="#e6db74"/>
<rect x="1144.79" y="808.0" width="4.71" height="1.5" fill="#e6db74"/>
<rect x="1150.44" y="808.0" width="5.65" height="1.5" fill="#e6db74"/>
<rect x="1157.02" y="808.0" width="3.76" height="1.5" fill="#e6db74"/>
<rect x="1161.73" y="808.0" width="1.88" height="1.5" fill="#e6db74"/>
<rect x="1164.55" y="808.0" width="3.76" height="1.5" fill="#e6db74"/>
<rect x="1138.20" y="810.0" width="6.59" height="1.5" fill="#e6db74"/>
<rect x="1145.73" y="810.0" width="7.53" height="1.5" fill="#e6db74"/>
<rect x="1154.20" y="810.0" width="6.59" height="1.5" fill="#e6db74"/>
<rect x="1161.73" y="810.0" width="4.71" height="1.5" fill="#e6db74"/>
<rect x="1167.38" y="810.0" width="5.65" height="1.5" fill="#e6db74"/>
<rect x="1173.96" y="810.0" width="0.94" height="1.5" fill="#e6db74"/>
<rect x="1138.20" y="812.0" width="4.71" height="1.5" fill="#e6db74"/>
<rect x="1138.20" y="814.0" width="5.65" height="1.5" fill="#e6db74"/>
<rect x="1144.79" y="814.0" width="0.94" height="1.5" fill="#e6db74"/>
<rect x="1146.67" y="814.0" width="0.94" height="1.5" fill="#e6db74"/>
<rect x="1148.55" y="814.0" width="4.71" height="1.5" fill="#e6db74"/>
<rect x="1154.20" y="814.0" width="2.82" height="1.5" fill="#e6db74"/>
<rect x="1157.96" y="814.0" width="6.59" height="1.5" fill="#e6db74"/>
<rect x="1165.49" y="814.0" width="4.71" height="1.5" fill="#e6db74"/>
<rect x="1171.14" y="814.0" width="5.65" height="1.5" fill="#e6db74"/>
<rect x="1177.73" y="814.0" width="5.65" height="1.5" fill="#e6db74"/>
<rect x="1184.32" y="814.0" width="5.65" height="1.5" fill="#e6db74"/>
<rect x="1190.91" y="814.0" width="4.71" height="1.5" fill="#e6db74"/>
<rect x="1196.55" y="814.0" width="8.47" height="1.5" fill="#e6db74"/>
<rect x="1205.96" y="814.0" width="4.71" height="1.5" fill="#e6db74"/>
<rect x="1211.61" y="814.0" width="5.65" height="1.5" fill="#e6db74"/>
<rect x="1218.20" y="814.0" width="0.94" height="1.5" fill="#e6db74"/>
<rect x="1220.08" y="814.0" width="2.82" height="1.5" fill="#e6db74"/>
<rect x="1223.85" y="814.0" width="5.65" height="1.5" fill="#e6db74"/>
<rect x="1230.44" y="814.0" width="7.53" height="1.5" fill="#e6db74"/>
<rect x="1238.91" y="814.0" width="5.65" height="1.5" fill="#e6db74"/>
<rect x="1245.49" y="814.0" width="2.82" height="1.5" fill="#e6db74"/>
<rect x="1249.26" y="814.0" width="3.76" height="1.5" fill="#e6db74"/>
<rect x="1138.20" y="816.0" width="2.82" height="1.5" fill="#e6db74"/>
<rect x="1141.96" y="816.0" width="5.65" height="1.5" fill="#e6db74"/>
<rect x="1148.55" y="816.0" width="7.53" height="1.5" fill="#e6db74"/>
<rect x="1157.02" y="816.0" width="8.47" height="1.5" fill="#e6db74"/>
<rect x="1166.44" y="816.0" width="4.71" height="1.5" fill="#e6db74"/>
<rect x="1172.08" y="816.0" width="7.53" height="1.5" fill="#e6db74"/>
<rect x="1180.55" y="816.0" width="7.53" height="1.5" fill="#e6db74"/>
<rect x="1189.02" y="816.0" width="5.65" height="1.5" fill="#e6db74"/>
<rect x="1138.20" y="818.0" width="5.65" height="1.5" fill="#e6db74"/>
<rect x="1144.79" y="818.0" width="5.65" height="1.5" fill="#e6db74"/>
<rect x="1151.38" y="818.0" width="5.65" height="1.5" fill="#e6db74"/>
<rect x="1157.96" y="818.0" width="7.53" height="1.5" fill="#e6db74"/>
<rect x="1166.44" y="818.0" width="5.65" height="1.5" fill="#e6db74"/>
<rect x="1173.02" y="818.0" width="6.59" height="1.5" fill="#e6db74"/>
<rect x="1180.55" y="818.0" width="5.65" height="1.5" fill="#e6db74"/>
<rect x="1187.14" y="818.0" width="4.71" height="1.5" fill="#e6db74"/>
<rect x="1192.79" y="818.0" width="7.53" height="1.5" fill="#e6db74"/>
<rect x="1201.26" y="818.0" width="2.82" height="1.5" fill="#e6db74"/>
<rect x="1205.02" y="818.0" width="6.59" height="1.5" fill="#e6db74"/>
<rect x="1138.20" y="820.0" width="7.53" height="1.5" fill="#e6db74"/>
<rect x="1146.67" y="820.0" width="7.53" height="1.5" fill="#e6db74"/>
<rect x="1155.14" y="820.0" width="0.94" height="1.5" fill="#e6db74"/>
<rect x="1157.02" y="820.0" width="5.65" height="1.5" fill="#e6db74"/>
<rect x="1163.61" y="820.0" width="4.71" height="1.5" fill="#e6db74"/>
<rect x="1169.26" y="820.0" width="4.71" height="1.5" fill="#e6db74"/>
<rect x="1174.91" y="820.0" width="0.94" height="1.5" fill="#e6db74"/>
<rect x="1176.79" y="820.0" width="7.53" height="1.5" fill="#e6db74"/>
<rect x="1185.26" y="820.0" width="7.53" height="1.5" fill="#e6db74"/>
<rect x="1193.73" y="820.0" width="2.82" height="1.5" fill="#e6db74"/>
<rect x="1197.49" y="820.0" width="7.53" height="1.5" fill="#e6db74"/>
<rect x="1205.96" y="820.0" width="6.59" height="1.5" fill="#e6db74"/>
<rect x="1138.20" y="822.0" width="4.71" height="1.5" fill="#e6db74"/>
<rect x="1143.85" y="822.0" width="5.65" height="1.5" fill="#e6db74"/>
<rect x="1150.44" y="822.0" width="1.88" height="1.5" fill="#e6db74"/>
<rect x="1153.26" y="822.0" width="5.65" height="1.5" fill="#e6db74"/>
<rect x="1159.85" y="822.0" width="5.65" height="1.5" fill="#e6db74"/>
<rect x="1166.44" y="822.0" width="5.65" height="1.5" fill="#e6db74"/>
<rect x="1173.02" y="822.0" width="0.94" height="1.5" fill="#e6db74"/>
<rect x="1173.96" y="822.0" width="4.71" height="1.5" fill="#f8f8f2"/>
<rect x="1178.67" y="822.0" width="4.71" height="1.5" fill="#f92672"/>
<rect x="1183.38" y="822.0" width="0.94" height="1.5" fill="#f8f8f2"/>
<rect x="1143.85" y="824.0" width="0.94" height="1.5" fill="#f8f8f2"/>
<rect x="1144.79" y="824.0" width="3.76" height="1.5" fill="#f92672"/>
<rect x="1149.49" y="824.0" width="5.65" height="1.5" fill="#a6e22e"/>
<rect x="1155.14" y="824.0" width="0.94" height="1.5" fill="#f8f8f2"/>
<rect x="1156.08" y="824.0" width="6.59" height="1.5" fill="#e6db74"/>
<rect x="1162.67" y="824.0" width="6.59" height="1.5" fill="#f8f8f2"/>
<rect x="1170.20" y="824.0" width="1.88" height="1.5" fill="#f8f8f2"/>
<rect x="1173.02" y="824.0" width="5.65" height="1.5" fill="#f8f8f2"/>
<rect x="1179.61" y="824.0" width="6.59" height="1.5" fill="#f8f8f2"/>
<rect x="1186.20" y="824.0" width="3.76" height="1.5" fill="#f92672"/>
<rect x="1189.96" y="824.0" width="0.94" height="1.5" fill="#f8f8f2"/>
<rect x="1141.96" y="826.0" width="1.88" height="1.5" fill="#f8f8f2"/>
<rect x="1143.85" y="826.0" width="6.59" height="1.5" fill="#f92672"/>
<rect x="1150.44" y="826.0" width="0.94" height="1.5" fill="#f8f8f2"/>
<rect x="1141.96" y="828.0" width="3.76" height="1.5" fill="#75715e"/>
<rect x="1146.67" y="828.0" width="0.94" height="1.5" fill="#75715e"/>
<rect x="1148.55" y="828.0" width="1.88" height="1.5" fill="#75715e"/>
<rect x="1151.38" y="828.0" width="5.65" height="1.5" fill="#75715e"/>
<rect x="1157.96" y="828.0" width="3.76" height="1.5" fill="#75715e"/>
<rect x="1162.67" y="828.0" width="2.82" height="1.5" fill="#75715e"/>
<rect x="1141.96" y="830.0" width="0.94" height="1.5" fill="#f8f8f2"/>
<rect x="1142.91" y="830.0" width="6.59" height="1.5" fill="#f92672"/>
<rect x="1150.44" y="830.0" width="2.82" height="1.5" fill="#a6e22e"/>
<rect x="1153.26" y="830.0" width="0.94" height="1.5" fill="#f8f8f2"/>
<rect x="1154.20" y="830.0" width="22.59" height="1.5" fill="#e6db74"/>
<rect x="1177.73" y="830.0" width="11.29" height="1.5" fill="#a6e22e"/>
<rect x="1189.02" y="830.0" width="0.94" height="1.5" fill="#f8f8f2"/>
<rect x="1189.96" y="830.0" width="14.12" height="1.5" fill="#e6db74"/>
<rect x="1204.08" y="830.0" width="0.94" height="1.5" fill="#f8f8f2"/>
<rect x="1143.85" y="832.0" width="0.94" height="1.5" fill="#f8f8f2"/>
<rect x="1144.79" y="832.0" width="4.71" height="1.5" fill="#f92672"/>
<rect x="1149.49" y="832.0" width="6.59" height="1.5" fill="#f8f8f2"/>
<rect x="1156.08" y="832.0" width="4.71" height="1.5" fill="#f92672"/>
<rect x="1160.79" y="832.0" width="0.94" height="1.5" fill="#f8f8f2"/>
<rect x="1143.85" y="834.0" width="0.94" height="1.5" fill="#f8f8f2"/>
<rect x="1144.79" y="834.0" width="3.76" height="1.5" fill="#f92672"/>
<rect x="1149.49" y="834.0" width="5.65" height="1.5" fill="#a6e22e"/>
<rect x="1155.14" y="834.0" width="0.94" height="1.5" fill="#f8f8f2"/>
<rect x="1156.08" y="834.0" width="6.59" height="1.5" fill="#e6db74"/>
<rect x="1162.67" y="834.0" width="0.94" height="1.5" fill="#f8f8f2"/>
<rect x="1153.26" y="836.0" width="6.59" height="1.5" fill="#f8f8f2"/>
<rect x="1160.79" y="836.0" width="0.94" height="1.5" fill="#f8f8f2"/>
<rect x="1162.67" y="836.0" width="5.65" height="1.5" fill="#f8f8f2"/>
<rect x="1169.26" y="836.0" width="8.47" height="1.5" fill="#f8f8f2"/>
<rect x="1178.67" y="836.0" width="3.76" height="1.5" fill="#f8f8f2"/>
<rect x="1143.85" y="838.0" width="1.88" height="1.5" fill="#f8f8f2"/>
<rect x="1145.73" y="838.0" width="3.76" height="1.5" fill="#f92672"/>
<rect x="1149.49" y="838.0" width="0.94" height="1.5" fill="#f8f8f2"/>
<rect x="1141.96" y="840.0" width="1.88" height="1.5" fill="#f8f8f2"/>
<rect x="1143.85" y="840.0" width="6.59" height="1.5" fill="#f92672"/>
<rect x="1150.44" y="840.0" width="0.94" height="1.5" fill="#f8f8f2"/>
<rect x="1141.96" y="842.0" width="0.94" height="1.5" fill="#f8f8f2"/>
<rect x="1142.91" y="842.0" width="6.59" height="1.5" fill="#f92672"/>
<rect x="1150.44" y="842.0" width="2.82" height="1.5" fill="#a6e22e"/>
<rect x="1153.26" y="842.0" width="0.94" height="1.5" fill="#f8f8f2"/>
<rect x="1154.20" y="842.0" width="16.00" height="1.5" fill="#e6db74"/>
<rect x="1171.14" y="842.0" width="11.29" height="1.5" fill="#a6e22e"/>
<rect x="1182.44" y="842.0" width="0.94" height="1.5" fill="#f8f8f2"/>
<rect x="1183.38" y="842.0" width="10.35" height="1.5" fill="#e6db74"/>
<rect x="1193.73" y="842.0" width="0.94" height="1.5" fill="#f8f8f2"/>
<rect x="1143.85" y="844.0" width="0.94" height="1.5" fill="#f8f8f2"/>
<rect x="1144.79" y="844.0" width="4.71" height="1.5" fill="#f92672"/>
<rect x="1149.49" y="844.0" width="1.88" height="1.5" fill="#f8f8f2"/>
<rect x="1143.85" y="846.0" width="0.94" height="1.5" fill="#f8f8f2"/>
<rect x="1144.79" y="846.0" width="3.76" height="1.5" fill="#f92672"/>
<rect x="1149.49" y="846.0" width="5.65" height="1.5" fill="#a6e22e"/>
<rect x="1155.14" y="846.0" width="0.94" height="1.5" fill="#f8f8f2"/>
<rect x="1156.08" y="846.0" width="6.59" height="1.5" fill="#e6db74"/>
<rect x="1162.67" y="846.0" width="6.59" height="1.5" fill="#f8f8f2"/>
<rect x="1170.20" y="846.0" width="3.76" height="1.5" fill="#f8f8f2"/>
<rect x="1173.96" y="846.0" width="3.76" height="1.5" fill="#f92672"/>
<rect x="1177.73" y="846.0" width="0.94" height="1.5" fill="#f8f8f2"/>
<rect x="1141.96" y="848.0" width="1.88" height="1.5" fill="#f8f8f2"/>
<rect x="1143.85" y="848.0" width="6.59" height="1.5" fill="#f92672"/>
<rect x="1150.44" y="848.0" width="0.94" height="1.5" fill="#f8f8f2"/>
<rect x="1141.96" y="850.0" width="0.94" height="1.5" fill="#f8f8f2"/>
<rect x="1142.91" y="850.0" width="6.59" height="1.5" fill="#f92672"/>
<rect x="1150.44" y="850.0" width="2.82" height="1.5" fill="#a6e22e"/>
<rect x="1153.26" y="850.0" width="0.94" height="1.5" fill="#f8f8f2"/>
<rect x="1154.20" y="850.0" width="28.24" height="1.5" fill="#e6db74"/>
<rect x="1183.38" y="850.0" width="11.29" height="1.5" fill="#a6e22e"/>
<rect x="1194.67" y="850.0" width="0.94" height="1.5" fill="#f8f8f2"/>
<rect x="1195.61" y="850.0" width="5.65" height="1.5" fill="#e6db74"/>
<rect x="1201.26" y="850.0" width="0.94" height="1.5" fill="#f8f8f2"/>
<rect x="1143.85" y="852.0" width="0.94" height="1.5" fill="#f8f8f2"/>
<rect x="1144.79" y="852.0" width="4.71" height="1.5" fill="#f92672"/>
<rect x="1149.49" y="852.0" width="3.76" height="1.5" fill="#f8f8f2"/>
<rect x="1153.26" y="852.0" width="4.71" height="1.5" fill="#66d9ef"/>
<rect x="1157.96" y="852.0" width="0.94" height="1.5" fill="#f8f8f2"/>
<rect x="1158.91" y="852.0" width="2.82" height="1.5" fill="#e6db74"/>
<rect x="1162.67" y="852.0" width="5.65" height="1.5" fill="#e6db74"/>
<rect x="1169.26" y="852.0" width="5.65" height="1.5" fill="#e6db74"/>
<rect x="1175.85" y="852.0" width="3.76" height="1.5" fill="#e6db74"/>
<rect x="1180.55" y="852.0" width="5.65" height="1.5" fill="#e6db74"/>
<rect x="1187.14" y="852.0" width="5.65" height="1.5" fill="#e6db74"/>
<rect x="1193.73" y="852.0" width="8.47" height="1.5" fill="#e6db74"/>
<rect x="1203.14" y="852.0" width="4.71" height="1.5" fill="#e6db74"/>
<rect x="1208.79" y="852.0" width="5.65" height="1.5" fill="#e6db74"/>
<rect x="1215.38" y="852.0" width="5.65" height="1.5" fill="#e6db74"/>
<rect x="1221.96" y="852.0" width="4.71" height="1.5" fill="#e6db74"/>
<rect x="1227.61" y="852.0" width="1.88" height="1.5" fill="#e6db74"/>
<rect x="1229.49" y="852.0" width="4.71" height="1.5" fill="#f8f8f2"/>
<rect x="1234.20" y="852.0" width="4.71" height="1.5" fill="#f92672"/>
<rect x="1238.91" y="852.0" width="0.94" height="1.5" fill="#f8f8f2"/>
<rect x="1143.85" y="854.0" width="0.94" height="1.5" fill="#f8f8f2"/>
<rect x="1144.79" y="854.0" width="3.76" height="1.5" fill="#f92672"/>
<rect x="1149.49" y="854.0" width="5.65" height="1.5" fill="#a6e22e"/>
<rect x="1155.14" y="854.0" width="0.94" height="1.5" fill="#f8f8f2"/>
<rect x="1156.08" y="854.0" width="6.59" height="1.5" fill="#e6db74"/>
<rect x="1162.67" y="854.0" width="5.65" height="1.5" fill="#f8f8f2"/>
<rect x="1169.26" y="854.0" width="5.65" height="1.5" fill="#f8f8f2"/>
<rect x="1175.85" y="854.0" width="5.65" height="1.5" fill="#f8f8f2"/>
<rect x="1181.49" y="854.0" width="3.76" height="1.5" fill="#f92672"/>
<rect x="1185.26" y="854.0" width="0.94" height="1.5" fill="#f8f8f2"/>
<rect x="1141.96" y="856.0" width="1.88" height="1.5" fill="#f8f8f2"/>
<rect x="1143.85" y="856.0" width="6.59" height="1.5" fill="#f92672"/>
<rect x="1150.44" y="856.0" width="0.94" height="1.5" fill="#f8f8f2"/>
<rect x="1141.96" y="858.0" width="0.94" height="1.5" fill="#f8f8f2"/>
<rect x="1142.91" y="858.0" width="6.59" height="1.5" fill="#f92672"/>
<rect x="1150.44" y="858.0" width="2.82" height="1.5" fill="#a6e22e"/>
<rect x="1153.26" y="858.0" width="0.94" height="1.5" fill="#f8f8f2"/>
<rect x="1154.20" y="858.0" width="22.59" height="1.5" fill="#e6db74"/>
<rect x="1177.73" y="858.0" width="11.29" height="1.5" fill="#a6e22e"/>
<rect x="1189.02" y="858.0" width="0.94" height="1.5" fill="#f8f8f2"/>
<rect x="1189.96" y="858.0" width="5.65" height="1.5" fill="#e6db74"/>
<rect x="1195.61" y="858.0" width="0.94" height="1.5" fill="#f8f8f2"/>
<rect x="1143.85" y="860.0" width="0.94" height="1.5" fill="#f8f8f2"/>
<rect x="1144.79" y="860.0" width="4.71" height="1.5" fill="#f92672"/>
<rect x="1149.49" y="860.0" width="3.76" height="1.5" fill="#f8f8f2"/>
<rect x="1153.26" y="860.0" width="4.71" height="1.5" fill="#66d9ef"/>
<rect x="1157.96" y="860.0" width="0.94" height="1.5" fill="#f8f8f2"/>
<rect x="1158.91" y="860.0" width="7.53" height="1.5" fill="#e6db74"/>
<rect x="1167.38" y="860.0" width="2.82" height="1.5" fill="#e6db74"/>
<rect x="1171.14" y="860.0" width="2.82" height="1.5" fill="#e6db74"/>
<rect x="1173.96" y="860.0" width="4.71" height="1.5" fill="#f8f8f2"/>
<rect x="1178.67" y="860.0" width="4.71" height="1.5" fill="#f92672"/>
<rect x="1183.38" y="860.0" width="0.94" height="1.5" fill="#f8f8f2"/>
<rect x="1143.85" y="862.0" width="0.94" height="1.5" fill="#f8f8f2"/>
<rect x="1144.79" y="862.0" width="3.76" height="1.5" fill="#f92672"/>
<rect x="1149.49" y="862.0" width="5.65" height="1.5" fill="#a6e22e"/>
<rect x="1155.14" y="862.0" width="0.94" height="1.5" fill="#f8f8f2"/>
<rect x="1156.08" y="862.0" width="6.59" height="1.5" fill="#e6db74"/>
<rect x="1162.67" y="862.0" width="6.59" height="1.5" fill="#f8f8f2"/>
<rect x="1170.20" y="862.0" width="3.76" height="1.5" fill="#f8f8f2"/>
<rect x="1173.96" y="862.0" width="3.76" height="1.5" fill="#f92672"/>
<rect x="1177.73" y="862.0" width="0.94" height="1.5" fill="#f8f8f2"/>
<rect x="1141.96" y="864.0" width="1.88" height="1.5" fill="#f8f8f2"/>
<rect x="1143.85" y="864.0" width="6.59" height="1.5" fill="#f92672"/>
<rect x="1150.44" y="864.0" width="0.94" height="1.5" fill="#f8f8f2"/>
<rect x="1141.96" y="866.0" width="0.94" height="1.5" fill="#f8f8f2"/>
<rect x="1142.91" y="866.0" width="6.59" height="1.5" fill="#f92672"/>
<rect x="1150.44" y="866.0" width="2.82" height="1.5" fill="#a6e22e"/>
<rect x="1153.26" y="866.0" width="0.94" height="1.5" fill="#f8f8f2"/>
<rect x="1154.20" y="866.0" width="26.35" height="1.5" fill="#e6db74"/>
<rect x="1181.49" y="866.0" width="11.29" height="1.5" fill="#a6e22e"/>
<rect x="1192.79" y="866.0" width="0.94" height="1.5" fill="#f8f8f2"/>
<rect x="1193.73" y="866.0" width="5.65" height="1.5" fill="#e6db74"/>
<rect x="1199.38" y="866.0" width="0.94" height="1.5" fill="#f8f8f2"/>
<rect x="1143.85" y="868.0" width="0.94" height="1.5" fill="#f8f8f2"/>
<rect x="1144.79" y="868.0" width="4.71" height="1.5" fill="#f92672"/>
<rect x="1149.49" y="868.0" width="3.76" height="1.5" fill="#f8f8f2"/>
<rect x="1153.26" y="868.0" width="4.71" height="1.5" fill="#66d9ef"/>
<rect x="1157.96" y="868.0" width="0.94" height="1.5" fill="#f8f8f2"/>
<rect x="1158.91" y="868.0" width="2.82" height="1.5" fill="#e6db74"/>
<rect x="1162.67" y="868.0" width="5.65" height="1.5" fill="#e6db74"/>
<rect x="1169.26" y="868.0" width="3.76" height="1.5" fill="#e6db74"/>
<rect x="1173.02" y="868.0" width="4.71" height="1.5" fill="#f8f8f2"/>
<rect x="1177.73" y="868.0" width="4.71" height="1.5" fill="#f92672"/>
<rect x="1182.44" y="868.0" width="0.94" height="1.5" fill="#f8f8f2"/>
<rect x="1143.85" y="870.0" width="0.94" height="1.5" fill="#f8f8f2"/>
<rect x="1144.79" y="870.0" width="3.76" height="1.5" fill="#f92672"/>
<rect x="1149.49" y="870.0" width="5.65" height="1.5" fill="#a6e22e"/>
<rect x="1155.14" y="870.0" width="0.94" height="1.5" fill="#f8f8f2"/>
<rect x="1156.08" y="870.0" width="6.59" height="1.5" fill="#e6db74"/>
<rect x="1162.67" y="870.0" width="6.59" height="1.5" fill="#f8f8f2"/>
<rect x="1170.20" y="870.0" width="8.47" height="1.5" fill="#f8f8f2"/>
<rect x="1178.67" y="870.0" width="3.76" height="1.5" fill="#f92672"/>
<rect x="1182.44" y="870.0" width="0.94" height="1.5" fill="#f8f8f2"/>
<rect x="1141.96" y="872.0" width="1.88" height="1.5" fill="#f8f8f2"/>
<rect x="1143.85" y="872.0" width="6.59" height="1.5" fill="#f92672"/>
<rect x="1150.44" y="872.0" width="0.94" height="1.5" fill="#f8f8f2"/>
<rect x="1141.96" y="874.0" width="0.94" height="1.5" fill="#f8f8f2"/>
<rect x="1142.91" y="874.0" width="6.59" height="1.5" fill="#f92672"/>
<rect x="1150.44" y="874.0" width="2.82" height="1.5" fill="#a6e22e"/>
<rect x="1153.26" y="874.0" width="0.94" height="1.5" fill="#f8f8f2"/>
<rect x="1154.20" y="874.0" width="18.82" height="1.5" fill="#e6db74"/>
<rect x="1173.96" y="874.0" width="11.29" height="1.5" fill="#a6e22e"/>
<rect x="1185.26" y="874.0" width="0.94" height="1.5" fill="#f8f8f2"/>
<rect x="1186.20" y="874.0" width="10.35" height="1.5" fill="#e6db74"/>
<rect x="1196.55" y="874.0" width="0.94" height="1.5" fill="#f8f8f2"/>
<rect x="1143.85" y="876.0" width="0.94" height="1.5" fill="#f8f8f2"/>
<rect x="1144.79" y="876.0" width="4.71" height="1.5" fill="#f92672"/>
<rect x="1149.49" y="876.0" width="1.88" height="1.5" fill="#f8f8f2"/>
<rect x="1143.85" y="878.0" width="0.94" height="1.5" fill="#f8f8f2"/>
<rect x="1144.79" y="878.0" width="3.76" height="1.5" fill="#f92672"/>
<rect x="1149.49" y="878.0" width="5.65" height="1.5" fill="#a6e22e"/>
<rect x="1155.14" y="878.0" width="0.94" height="1.5" fill="#f8f8f2"/>
<rect x="1156.08" y="878.0" width="6.59" height="1.5" fill="#e6db74"/>
<rect x="1162.67" y="878.0" width="10.35" height="1.5" fill="#f8f8f2"/>
<rect x="1173.02" y="878.0" width="3.76" height="1.5" fill="#f92672"/>
<rect x="1176.79" y="878.0" width="0.94" height="1.5" fill="#f8f8f2"/>
<rect x="1141.96" y="880.0" width="1.88" height="1.5" fill="#f8f8f2"/>
<rect x="1143.85" y="880.0" width="6.59" height="1.5" fill="#f92672"/>
<rect x="1150.44" y="880.0" width="0.94" height="1.5" fill="#f8f8f2"/>
<rect x="1141.96" y="882.0" width="0.94" height="1.5" fill="#f8f8f2"/>
<rect x="1142.91" y="882.0" width="6.59" height="1.5" fill="#f92672"/>
<rect x="1150.44" y="882.0" width="2.82" height="1.5" fill="#a6e22e"/>
<rect x="1153.26" y="882.0" width="0.94" height="1.5" fill="#f8f8f2"/>
<rect x="1154.20" y="882.0" width="29.18" height="1.5" fill="#e6db74"/>
<rect x="1184.32" y="882.0" width="11.29" height="1.5" fill="#a6e22e"/>
<rect x="1195.61" y="882.0" width="0.94" height="1.5" fill="#f8f8f2"/>
<rect x="1196.55" y="882.0" width="5.65" height="1.5" fill="#e6db74"/>
<rect x="1202.20" y="882.0" width="0.94" height="1.5" fill="#f8f8f2"/>
<rect x="1143.85" y="884.0" width="0.94" height="1.5" fill="#f8f8f2"/>
<rect x="1144.79" y="884.0" width="4.71" height="1.5" fill="#f92672"/>
<rect x="1149.49" y="884.0" width="3.76" height="1.5" fill="#f8f8f2"/>
<rect x="1153.26" y="884.0" width="4.71" height="1.5" fill="#66d9ef"/>
<rect x="1157.96" y="884.0" width="0.94" height="1.5" fill="#f8f8f2"/>
<rect x="1158.91" y="884.0" width="0.94" height="1.5" fill="#e6db74"/>
<rect x="1160.79" y="884.0" width="4.71" height="1.5" fill="#e6db74"/>
<rect x="1165.49" y="884.0" width="4.71" height="1.5" fill="#f8f8f2"/>
<rect x="1170.20" y="884.0" width="4.71" height="1.5" fill="#f92672"/>
<rect x="1174.91" y="884.0" width="0.94" height="1.5" fill="#f8f8f2"/>
<rect x="1143.85" y="886.0" width="0.94" height="1.5" fill="#f8f8f2"/>
<rect x="1144.79" y="886.0" width="3.76" height="1.5" fill="#f92672"/>
<rect x="1149.49" y="886.0" width="5.65" height="1.5" fill="#a6e22e"/>
<rect x="1155.14" y="886.0" width="0.94" height="1.5" fill="#f8f8f2"/>
<rect x="1156.08" y="886.0" width="6.59" height="1.5" fill="#e6db74"/>
<rect x="1162.67" y="886.0" width="6.59" height="1.5" fill="#f8f8f2"/>
<rect x="1170.20" y="886.0" width="0.94" height="1.5" fill="#f8f8f2"/>
<rect x="1172.08" y="886.0" width="5.65" height="1.5" fill="#f8f8f2"/>
<rect x="1178.67" y="886.0" width="6.59" height="1.5" fill="#f8f8f2"/>
<rect x="1185.26" y="886.0" width="3.76" height="1.5" fill="#f92672"/>
<rect x="1189.02" y="886.0" width="0.94" height="1.5" fill="#f8f8f2"/>
<rect x="1141.96" y="888.0" width="1.88" height="1.5" fill="#f8f8f2"/>
<rect x="1143.85" y="888.0" width="6.59" height="1.5" fill="#f92672"/>
<rect x="1150.44" y="888.0" width="0.94" height="1.5" fill="#f8f8f2"/>
<rect x="1141.96" y="890.0" width="0.94" height="1.5" fill="#f8f8f2"/>
<rect x="1142.91" y="890.0" width="6.59" height="1.5" fill="#f92672"/>
<rect x="1150.44" y="890.0" width="2.82" height="1.5" fill="#a6e22e"/>
<rect x="1153.26" y="890.0" width="0.94" height="1.5" fill="#f8f8f2"/>
<rect x="1154.20" y="890.0" width="15.06" height="1.5" fill="#e6db74"/>
<rect x="1170.20" y="890.0" width="11.29" height="1.5" fill="#a6e22e"/>
<rect x="1181.49" y="890.0" width="0.94" height="1.5" fill="#f8f8f2"/>
<rect x="1182.44" y="890.0" width="5.65" height="1.5" fill="#e6db74"/>
<rect x="1188.08" y="890.0" width="0.94" height="1.5" fill="#f8f8f2"/>
<rect x="1143.85" y="892.0" width="0.94" height="1.5" fill="#f8f8f2"/>
<rect x="1144.79" y="892.0" width="4.71" height="1.5" fill="#f92672"/>
<rect x="1149.49" y="892.0" width="3.76" height="1.5" fill="#f8f8f2"/>
<rect x="1153.26" y="892.0" width="4.71" height="1.5" fill="#66d9ef"/>
<rect x="1157.96" y="892.0" width="0.94" height="1.5" fill="#f8f8f2"/>
<rect x="1158.91" y="892.0" width="5.65" height="1.5" fill="#e6db74"/>
<rect x="1165.49" y="892.0" width="6.59" height="1.5" fill="#e6db74"/>
<rect x="1173.02" y="892.0" width="6.59" height="1.5" fill="#e6db74"/>
<rect x="1180.55" y="892.0" width="7.53" height="1.5" fill="#e6db74"/>
<rect x="1189.02" y="892.0" width="4.71" height="1.5" fill="#e6db74"/>
<rect x="1194.67" y="892.0" width="5.65" height="1.5" fill="#e6db74"/>
<rect x="1201.26" y="892.0" width="6.59" height="1.5" fill="#e6db74"/>
<rect x="1208.79" y="892.0" width="2.82" height="1.5" fill="#e6db74"/>
<rect x="1212.55" y="892.0" width="5.65" height="1.5" fill="#e6db74"/>
<rect x="1219.14" y="892.0" width="3.76" height="1.5" fill="#e6db74"/>
<rect x="1223.85" y="892.0" width="5.65" height="1.5" fill="#e6db74"/>
<rect x="1230.44" y="892.0" width="7.53" height="1.5" fill="#e6db74"/>
<rect x="1238.91" y="892.0" width="3.76" height="1.5" fill="#e6db74"/>
<rect x="1243.61" y="892.0" width="6.59" height="1.5" fill="#e6db74"/>
<rect x="1251.14" y="892.0" width="4.71" height="1.5" fill="#e6db74"/>
<rect x="1143.85" y="894.0" width="4.71" height="1.5" fill="#e6db74"/>
<rect x="1149.49" y="894.0" width="4.71" height="1.5" fill="#e6db74"/>
<rect x="1155.14" y="894.0" width="8.47" height="1.5" fill="#e6db74"/>
<rect x="1164.55" y="894.0" width="5.65" height="1.5" fill="#e6db74"/>
<rect x="1171.14" y="894.0" width="8.47" height="1.5" fill="#e6db74"/>
<rect x="1180.55" y="894.0" width="7.53" height="1.5" fill="#e6db74"/>
<rect x="1189.02" y="894.0" width="7.53" height="1.5" fill="#e6db74"/>
<rect x="1197.49" y="894.0" width="5.65" height="1.5" fill="#e6db74"/>
<rect x="1204.08" y="894.0" width="4.71" height="1.5" fill="#e6db74"/>
<rect x="1209.73" y="894.0" width="1.88" height="1.5" fill="#e6db74"/>
<rect x="1212.55" y="894.0" width="4.71" height="1.5" fill="#e6db74"/>
<rect x="1218.20" y="894.0" width="5.65" height="1.5" fill="#e6db74"/>
<rect x="1224.79" y="894.0" width="5.65" height="1.5" fill="#e6db74"/>
<rect x="1231.38" y="894.0" width="6.59" height="1.5" fill="#e6db74"/>
<rect x="1238.91" y="894.0" width="4.71" height="1.5" fill="#e6db74"/>
<rect x="1244.55" y="894.0" width="7.53" height="1.5" fill="#e6db74"/>
<rect x="1253.02" y="894.0" width="6.59" height="1.5" fill="#e6db74"/>
<rect x="1143.85" y="896.0" width="5.65" height="1.5" fill="#e6db74"/>
<rect x="1149.49" y="896.0" width="4.71" height="1.5" fill="#f8f8f2"/>
<rect x="1154.20" y="896.0" width="4.71" height="1.5" fill="#f92672"/>
<rect x="1158.91" y="896.0" width="0.94" height="1.5" fill="#f8f8f2"/>
<rect x="1143.85" y="898.0" width="0.94" height="1.5" fill="#f8f8f2"/>
<rect x="1144.79" y="898.0" width="3.76" height="1.5" fill="#f92672"/>
<rect x="1149.49" y="898.0" width="5.65" height="1.5" fill="#a6e22e"/>
<rect x="1155.14" y="898.0" width="0.94" height="1.5" fill="#f8f8f2"/>
<rect x="1156.08" y="898.0" width="6.59" height="1.5" fill="#e6db74"/>
<rect x="1162.67" y="898.0" width="3.76" height="1.5" fill="#f8f8f2"/>
<rect x="1167.38" y="898.0" width="10.35" height="1.5" fill="#f8f8f2"/>
<rect x="1177.73" y="898.0" width="3.76" height="1.5" fill="#f92672"/>
<rect x="1181.49" y="898.0" width="0.94" height="1.5" fill="#f8f8f2"/>
<rect x="1141.96" y="900.0" width="1.88" height="1.5" fill="#f8f8f2"/>
<rect x="1143.85" y="900.0" width="6.59" height="1.5" fill="#f92672"/>
<rect x="1150.44" y="900.0" width="0.94" height="1.5" fill="#f8f8f2"/>
<rect x="1141.96" y="902.0" width="0.94" height="1.5" fill="#f8f8f2"/>
<rect x="1142.91" y="902.0" width="6.59" height="1.5" fill="#f92672"/>
<rect x="1150.44" y="902.0" width="2.82" height="1.5" fill="#a6e22e"/>
<rect x="1153.26" y="902.0" width="0.94" height="1.5" fill="#f8f8f2"/>
<rect x="1154.20" y="902.0" width="30.12" height="1.5" fill="#e6db74"/>
<rect x="1185.26" y="902.0" width="11.29" height="1.5" fill="#a6e22e"/>
<rect x="1196.55" y="902.0" width="0.94" height="1.5" fill="#f8f8f2"/>
<rect x="1197.49" y="902.0" width="5.65" height="1.5" fill="#e6db74"/>
<rect x="1203.14" y="902.0" width="0.94" height="1.5" fill="#f8f8f2"/>
<rect x="1143.85" y="904.0" width="0.94" height="1.5" fill="#f8f8f2"/>
<rect x="1144.79" y="904.0" width="4.71" height="1.5" fill="#f92672"/>
<rect x="1149.49" y="904.0" width="3.76" height="1.5" fill="#f8f8f2"/>
<rect x="1153.26" y="904.0" width="4.71" height="1.5" fill="#66d9ef"/>
<rect x="1157.96" y="904.0" width="0.94" height="1.5" fill="#f8f8f2"/>
<rect x="1158.91" y="904.0" width="2.82" height="1.5" fill="#e6db74"/>
<rect x="1162.67" y="904.0" width="0.94" height="1.5" fill="#e6db74"/>
<rect x="1164.55" y="904.0" width="2.82" height="1.5" fill="#e6db74"/>
<rect x="1167.38" y="904.0" width="4.71" height="1.5" fill="#f8f8f2"/>
<rect x="1172.08" y="904.0" width="4.71" height="1.5" fill="#f92672"/>
<rect x="1176.79" y="904.0" width="0.94" height="1.5" fill="#f8f8f2"/>
<rect x="1143.85" y="906.0" width="0.94" height="1.5" fill="#f8f8f2"/>
<rect x="1144.79" y="906.0" width="3.76" height="1.5" fill="#f92672"/>
<rect x="1149.49" y="906.0" width="5.65" height="1.5" fill="#a6e22e"/>
<rect x="1155.14" y="906.0" width="0.94" height="1.5" fill="#f8f8f2"/>
<rect x="1156.08" y="906.0" width="6.59" height="1.5" fill="#e6db74"/>
<rect x="1162.67" y="906.0" width="6.59" height="1.5" fill="#f8f8f2"/>
<rect x="1170.20" y="906.0" width="3.76" height="1.5" fill="#f8f8f2"/>
<rect x="1173.96" y="906.0" width="3.76" height="1.5" fill="#f92672"/>
<rect x="1177.73" y="906.0" width="0.94" height="1.5" fill="#f8f8f2"/>
<rect x="1141.96" y="908.0" width="1.88" height="1.5" fill="#f8f8f2"/>
<rect x="1143.85" y="908.0" width="6.59" height="1.5" fill="#f92672"/>
<rect x="1150.44" y="908.0" width="0.94" height="1.5" fill="#f8f8f2"/>
<rect x="1141.96" y="910.0" width="0.94" height="1.5" fill="#f8f8f2"/>
<rect x="1142.91" y="910.0" width="6.59" height="1.5" fill="#f92672"/>
<rect x="1150.44" y="910.0" width="2.82" height="1.5" fill="#a6e22e"/>
<rect x="1153.26" y="910.0" width="0.94" height="1.5" fill="#f8f8f2"/>
<rect x="1154.20" y="910.0" width="17.88" height="1.5" fill="#e6db74"/>
<rect x="1173.02" y="910.0" width="11.29" height="1.5" fill="#a6e22e"/>
<rect x="1184.32" y="910.0" width="0.94" height="1.5" fill="#f8f8f2"/>
<rect x="1185.26" y="910.0" width="5.65" height="1.5" fill="#e6db74"/>
<rect x="1190.91" y="910.0" width="0.94" height="1.5" fill="#f8f8f2"/>
<rect x="1143.85" y="912.0" width="0.94" height="1.5" fill="#f8f8f2"/>
<rect x="1144.79" y="912.0" width="4.71" height="1.5" fill="#f92672"/>
<rect x="1149.49" y="912.0" width="3.76" height="1.5" fill="#f8f8f2"/>
<rect x="1153.26" y="912.0" width="4.71" height="1.5" fill="#66d9ef"/>
<rect x="1157.96" y="912.0" width="0.94" height="1.5" fill="#f8f8f2"/>
<rect x="1158.91" y="912.0" width="4.71" height="1.5" fill="#e6db74"/>
<rect x="1164.55" y="912.0" width="4.71" height="1.5" fill="#e6db74"/>
<rect x="1170.20" y="912.0" width="4.71" height="1.5" fill="#e6db74"/>
<rect x="1175.85" y="912.0" width="8.47" height="1.5" fill="#e6db74"/>
<rect x="1149.49" y="914.0" width="3.76" height="1.5" fill="#e6db74"/>
<rect x="1154.20" y="914.0" width="8.47" height="1.5" fill="#e6db74"/>
<rect x="1163.61" y="914.0" width="4.71" height="1.5" fill="#e6db74"/>
<rect x="1169.26" y="914.0" width="7.53" height="1.5" fill="#e6db74"/>
<rect x="1177.73" y="914.0" width="6.59" height="1.5" fill="#e6db74"/>
<rect x="1185.26" y="914.0" width="7.53" height="1.5" fill="#e6db74"/>
<rect x="1193.73" y="914.0" width="5.65" height="1.5" fill="#e6db74"/>
<rect x="1200.32" y="914.0" width="7.53" height="1.5" fill="#e6db74"/>
<rect x="1208.79" y="914.0" width="0.94" height="1.5" fill="#e6db74"/>
<rect x="1149.49" y="916.0" width="2.82" height="1.5" fill="#e6db74"/>
<rect x="1153.26" y="916.0" width="6.59" height="1.5" fill="#e6db74"/>
<rect x="1149.49" y="918.0" width="8.47" height="1.5" fill="#e6db74"/>
<rect x="1158.91" y="918.0" width="1.88" height="1.5" fill="#e6db74"/>
<rect x="1161.73" y="918.0" width="5.65" height="1.5" fill="#e6db74"/>
<rect x="1168.32" y="918.0" width="4.71" height="1.5" fill="#e6db74"/>
<rect x="1173.96" y="918.0" width="5.65" height="1.5" fill="#e6db74"/>
<rect x="1149.49" y="920.0" width="8.47" height="1.5" fill="#e6db74"/>
<rect x="1158.91" y="920.0" width="5.65" height="1.5" fill="#e6db74"/>
<rect x="1165.49" y="920.0" width="7.53" height="1.5" fill="#e6db74"/>
<rect x="1173.96" y="920.0" width="4.71" height="1.5" fill="#e6db74"/>
<rect x="1179.61" y="920.0" width="2.82" height="1.5" fill="#e6db74"/>
<rect x="1183.38" y="920.0" width="7.53" height="1.5" fill="#e6db74"/>
<rect x="1191.85" y="920.0" width="5.65" height="1.5" fill="#e6db74"/>
<rect x="1198.44" y="920.0" width="1.88" height="1.5" fill="#e6db74"/>
<rect x="1149.49" y="922.0" width="7.53" height="1.5" fill="#e6db74"/>
<rect x="1157.96" y="922.0" width="1.88" height="1.5" fill="#e6db74"/>
<rect x="1149.49" y="924.0" width="8.47" height="1.5" fill="#e6db74"/>
<rect x="1158.91" y="924.0" width="4.71" height="1.5" fill="#e6db74"/>
<rect x="1164.55" y="924.0" width="5.65" height="1.5" fill="#e6db74"/>
<rect x="1171.14" y="924.0" width="5.65" height="1.5" fill="#e6db74"/>
<rect x="1177.73" y="924.0" width="1.88" height="1.5" fill="#e6db74"/>
<rect x="1149.49" y="926.0" width="4.71" height="1.5" fill="#e6db74"/>
<rect x="1155.14" y="926.0" width="5.65" height="1.5" fill="#e6db74"/>
<rect x="1161.73" y="926.0" width="8.47" height="1.5" fill="#e6db74"/>
<rect x="1171.14" y="926.0" width="4.71" height="1.5" fill="#e6db74"/>
<rect x="1176.79" y="926.0" width="7.53" height="1.5" fill="#e6db74"/>
<rect x="1185.26" y="926.0" width="0.94" height="1.5" fill="#e6db74"/>
<rect x="1187.14" y="926.0" width="5.65" height="1.5" fill="#e6db74"/>
<rect x="1193.73" y="926.0" width="4.71" height="1.5" fill="#e6db74"/>
<rect x="1199.38" y="926.0" width="2.82" height="1.5" fill="#e6db74"/>
<rect x="1203.14" y="926.0" width="5.65" height="1.5" fill="#e6db74"/>
<rect x="1209.73" y="926.0" width="4.71" height="1.5" fill="#e6db74"/>
<rect x="1149.49" y="928.0" width="5.65" height="1.5" fill="#e6db74"/>
<rect x="1156.08" y="928.0" width="3.76" height="1.5" fill="#e6db74"/>
<rect x="1159.85" y="928.0" width="4.71" height="1.5" fill="#f8f8f2"/>
<rect x="1164.55" y="928.0" width="4.71" height="1.5" fill="#f92672"/>
<rect x="1169.26" y="928.0" width="0.94" height="1.5" fill="#f8f8f2"/>
<rect x="1143.85" y="930.0" width="0.94" height="1.5" fill="#f8f8f2"/>
<rect x="1144.79" y="930.0" width="3.76" height="1.5" fill="#f92672"/>
<rect x="1149.49" y="930.0" width="5.65" height="1.5" fill="#a6e22e"/>
<rect x="1155.14" y="930.0" width="0.94" height="1.5" fill="#f8f8f2"/>
<rect x="1156.08" y="930.0" width="6.59" height="1.5" fill="#e6db74"/>
<rect x="1162.67" y="930.0" width="3.76" height="1.5" fill="#f8f8f2"/>
<rect x="1167.38" y="930.0" width="4.71" height="1.5" fill="#f8f8f2"/>
<rect x="1173.02" y="930.0" width="3.76" height="1.5" fill="#f8f8f2"/>
<rect x="1176.79" y="930.0" width="3.76" height="1.5" fill="#f92672"/>
<rect x="1180.55" y="930.0" width="0.94" height="1.5" fill="#f8f8f2"/>
<rect x="1141.96" y="932.0" width="1.88" height="1.5" fill="#f8f8f2"/>
<rect x="1143.85" y="932.0" width="6.59" height="1.5" fill="#f92672"/>
<rect x="1150.44" y="932.0" width="0.94" height="1.5" fill="#f8f8f2"/>
<rect x="1141.96" y="934.0" width="0.94" height="1.5" fill="#f8f8f2"/>
<rect x="1142.91" y="934.0" width="6.59" height="1.5" fill="#f92672"/>
<rect x="1150.44" y="934.0" width="2.82" height="1.5" fill="#a6e22e"/>
<rect x="1153.26" y="934.0" width="0.94" height="1.5" fill="#f8f8f2"/>
<rect x="1154.20" y="934.0" width="13.18" height="1.5" fill="#e6db74"/>
<rect x="1168.32" y="934.0" width="11.29" height="1.5" fill="#a6e22e"/>
<rect x="1179.61" y="934.0" width="0.94" height="1.5" fill="#f8f8f2"/>
<rect x="1180.55" y="934.0" width="5.65" height="1.5" fill="#e6db74"/>
<rect x="1186.20" y="934.0" width="0.94" height="1.5" fill="#f8f8f2"/>
<rect x="1143.85" y="936.0" width="0.94" height="1.5" fill="#f8f8f2"/>
<rect x="1144.79" y="936.0" width="4.71" height="1.5" fill="#f92672"/>
<rect x="1149.49" y="936.0" width="3.76" height="1.5" fill="#f8f8f2"/>
<rect x="1153.26" y="936.0" width="4.71" height="1.5" fill="#66d9ef"/>
<rect x="1157.96" y="936.0" width="0.94" height="1.5" fill="#f8f8f2"/>
<rect x="1158.91" y="936.0" width="2.82" height="1.5" fill="#e6db74"/>
<rect x="1162.67" y="936.0" width="4.71" height="1.5" fill="#e6db74"/>
<rect x="1168.32" y="936.0" width="7.53" height="1.5" fill="#e6db74"/>
<rect x="1176.79" y="936.0" width="2.82" height="1.5" fill="#e6db74"/>
<rect x="1179.61" y="936.0" width="4.71" height="1.5" fill="#f8f8f2"/>
<rect x="1184.32" y="936.0" width="4.71" height="1.5" fill="#f92672"/>
<rect x="1189.02" y="936.0" width="0.94" height="1.5" fill="#f8f8f2"/>
<rect x="1143.85" y="938.0" width="0.94" height="1.5" fill="#f8f8f2"/>
<rect x="1144.79" y="938.0" width="3.76" height="1.5" fill="#f92672"/>
<rect x="1149.49" y="938.0" width="5.65" height="1.5" fill="#a6e22e"/>
<rect x="1155.14" y="938.0" width="0.94" height="1.5" fill="#f8f8f2"/>
<rect x="1156.08" y="938.0" width="6.59" height="1.5" fill="#e6db74"/>
<rect x="1162.67" y="938.0" width="2.82" height="1.5" fill="#f8f8f2"/>
<rect x="1166.44" y="938.0" width="8.47" height="1.5" fill="#f8f8f2"/>
<rect x="1175.85" y="938.0" width="7.53" height="1.5" fill="#f8f8f2"/>
<rect x="1184.32" y="938.0" width="2.82" height="1.5" fill="#f8f8f2"/>
<rect x="1187.14" y="938.0" width="3.76" height="1.5" fill="#f92672"/>
<rect x="1190.91" y="938.0" width="0.94" height="1.5" fill="#f8f8f2"/>
<rect x="1141.96" y="940.0" width="1.88" height="1.5" fill="#f8f8f2"/>
<rect x="1143.85" y="940.0" width="6.59" height="1.5" fill="#f92672"/>
<rect x="1150.44" y="940.0" width="0.94" height="1.5" fill="#f8f8f2"/>
<rect x="1141.96" y="942.0" width="0.94" height="1.5" fill="#f8f8f2"/>
<rect x="1142.91" y="942.0" width="6.59" height="1.5" fill="#f92672"/>
<rect x="1150.44" y="942.0" width="2.82" height="1.5" fill="#a6e22e"/>
<rect x="1153.26" y="942.0" width="0.94" height="1.5" fill="#f8f8f2"/>
<rect x="1154.20" y="942.0" width="21.65" height="1.5" fill="#e6db74"/>
<rect x="1176.79" y="942.0" width="11.29" height="1.5" fill="#a6e22e"/>
<rect x="1188.08" y="942.0" width="0.94" height="1.5" fill="#f8f8f2"/>
<rect x="1189.02" y="942.0" width="5.65" height="1.5" fill="#e6db74"/>
<rect x="1194.67" y="942.0" width="0.94" height="1.5" fill="#f8f8f2"/>
<rect x="1143.85" y="944.0" width="0.94" height="1.5" fill="#f8f8f2"/>
<rect x="1144.79" y="944.0" width="4.71" height="1.5" fill="#f92672"/>
<rect x="1149.49" y="944.0" width="3.76" height="1.5" fill="#f8f8f2"/>
<rect x="1153.26" y="944.0" width="4.71" height="1.5" fill="#66d9ef"/>
<rect x="1157.96" y="944.0" width="0.94" height="1.5" fill="#f8f8f2"/>
<rect x="1158.91" y="944.0" width="4.71" height="1.5" fill="#e6db74"/>
<rect x="1164.55" y="944.0" width="4.71" height="1.5" fill="#e6db74"/>
<rect x="1170.20" y="944.0" width="3.76" height="1.5" fill="#e6db74"/>
<rect x="1174.91" y="944.0" width="2.82" height="1.5" fill="#e6db74"/>
<rect x="1178.67" y="944.0" width="5.65" height="1.5" fill="#e6db74"/>
<rect x="1185.26" y="944.0" width="0.94" height="1.5" fill="#e6db74"/>
<rect x="1187.14" y="944.0" width="5.65" height="1.5" fill="#e6db74"/>
<rect x="1193.73" y="944.0" width="7.53" height="1.5" fill="#e6db74"/>
<rect x="1202.20" y="944.0" width="5.65" height="1.5" fill="#e6db74"/>
<rect x="1208.79" y="944.0" width="7.53" height="1.5" fill="#e6db74"/>
<rect x="1217.26" y="944.0" width="7.53" height="1.5" fill="#e6db74"/>
<rect x="1225.73" y="944.0" width="0.94" height="1.5" fill="#e6db74"/>
<rect x="1227.61" y="944.0" width="7.53" height="1.5" fill="#e6db74"/>
<rect x="1236.08" y="944.0" width="5.65" height="1.5" fill="#e6db74"/>
<rect x="1241.73" y="944.0" width="4.71" height="1.5" fill="#f8f8f2"/>
<rect x="1246.44" y="944.0" width="4.71" height="1.5" fill="#f92672"/>
<rect x="1251.14" y="944.0" width="0.94" height="1.5" fill="#f8f8f2"/>
<rect x="1143.85" y="946.0" width="0.94" height="1.5" fill="#f8f8f2"/>
<rect x="1144.79" y="946.0" width="3.76" height="1.5" fill="#f92672"/>
<rect x="1149.49" y="946.0" width="5.65" height="1.5" fill="#a6e22e"/>
<rect x="1155.14" y="946.0" width="0.94" height="1.5" fill="#f8f8f2"/>
<rect x="1156.08" y="946.0" width="6.59" height="1.5" fill="#e6db74"/>
<rect x="1162.67" y="946.0" width="6.59" height="1.5" fill="#f8f8f2"/>
<rect x="1170.20" y="946.0" width="8.47" height="1.5" fill="#f8f8f2"/>
<rect x="1178.67" y="946.0" width="3.76" height="1.5" fill="#f92672"/>
<rect x="1182.44" y="946.0" width="0.94" height="1.5" fill="#f8f8f2"/>
<rect x="1141.96" y="948.0" width="1.88" height="1.5" fill="#f8f8f2"/>
<rect x="1143.85" y="948.0" width="6.59" height="1.5" fill="#f92672"/>
<rect x="1150.44" y="948.0" width="0.94" height="1.5" fill="#f8f8f2"/>
<rect x="1141.96" y="952.0" width="0.94" height="1.5" fill="#f8f8f2"/>
<rect x="1142.91" y="952.0" width="6.59" height="1.5" fill="#f92672"/>
<rect x="1150.44" y="952.0" width="2.82" height="1.5" fill="#a6e22e"/>
<rect x="1153.26" y="952.0" width="0.94" height="1.5" fill="#f8f8f2"/>
<rect x="1154.20" y="952.0" width="18.82" height="1.5" fill="#e6db74"/>
<rect x="1173.96" y="952.0" width="11.29" height="1.5" fill="#a6e22e"/>
<rect x="1185.26" y="952.0" width="0.94" height="1.5" fill="#f8f8f2"/>
<rect x="1186.20" y="952.0" width="5.65" height="1.5" fill="#e6db74"/>
<rect x="1191.85" y="952.0" width="0.94" height="1.5" fill="#f8f8f2"/>
<rect x="1143.85" y="954.0" width="0.94" height="1.5" fill="#f8f8f2"/>
<rect x="1144.79" y="954.0" width="4.71" height="1.5" fill="#f92672"/>
<rect x="1149.49" y="954.0" width="3.76" height="1.5" fill="#f8f8f2"/>
<rect x="1153.26" y="954.0" width="4.71" height="1.5" fill="#66d9ef"/>
<rect x="1157.96" y="954.0" width="0.94" height="1.5" fill="#f8f8f2"/>
<rect x="1158.91" y="954.0" width="7.53" height="1.5" fill="#e6db74"/>
<rect x="1167.38" y="954.0" width="5.65" height="1.5" fill="#e6db74"/>
<rect x="1173.96" y="954.0" width="5.65" height="1.5" fill="#e6db74"/>
<rect x="1180.55" y="954.0" width="5.65" height="1.5" fill="#e6db74"/>
<rect x="1187.14" y="954.0" width="2.82" height="1.5" fill="#e6db74"/>
<rect x="1189.96" y="954.0" width="4.71" height="1.5" fill="#f8f8f2"/>
<rect x="1194.67" y="954.0" width="4.71" height="1.5" fill="#f92672"/>
<rect x="1199.38" y="954.0" width="0.94" height="1.5" fill="#f8f8f2"/>
<rect x="1143.85" y="956.0" width="0.94" height="1.5" fill="#f8f8f2"/>
<rect x="1144.79" y="956.0" width="3.76" height="1.5" fill="#f92672"/>
<rect x="1149.49" y="956.0" width="5.65" height="1.5" fill="#a6e22e"/>
<rect x="1155.14" y="956.0" width="0.94" height="1.5" fill="#f8f8f2"/>
<rect x="1156.08" y="956.0" width="6.59" height="1.5" fill="#e6db74"/>
<rect x="1162.67" y="956.0" width="5.65" height="1.5" fill="#f8f8f2"/>
<rect x="1169.26" y="956.0" width="5.65" height="1.5" fill="#f8f8f2"/>
<rect x="1175.85" y="956.0" width="2.82" height="1.5" fill="#f8f8f2"/>
<rect x="1178.67" y="956.0" width="3.76" height="1.5" fill="#f92672"/>
<rect x="1182.44" y="956.0" width="0.94" height="1.5" fill="#f8f8f2"/>
<rect x="1141.96" y="958.0" width="1.88" height="1.5" fill="#f8f8f2"/>
<rect x="1143.85" y="958.0" width="6.59" height="1.5" fill="#f92672"/>
<rect x="1150.44" y="958.0" width="0.94" height="1.5" fill="#f8f8f2"/>
<rect x="1141.96" y="962.0" width="0.94" height="1.5" fill="#f8f8f2"/>
<rect x="1142.91" y="962.0" width="6.59" height="1.5" fill="#f92672"/>
<rect x="1150.44" y="962.0" width="2.82" height="1.5" fill="#a6e22e"/>
<rect x="1153.26" y="962.0" width="0.94" height="1.5" fill="#f8f8f2"/>
<rect x="1154.20" y="962.0" width="26.35" height="1.5" fill="#e6db74"/>
<rect x="1181.49" y="962.0" width="11.29" height="1.5" fill="#a6e22e"/>
<rect x="1192.79" y="962.0" width="0.94" height="1.5" fill="#f8f8f2"/>
<rect x="1193.73" y="962.0" width="5.65" height="1.5" fill="#e6db74"/>
<rect x="1199.38" y="962.0" width="0.94" height="1.5" fill="#f8f8f2"/>
<rect x="1143.85" y="964.0" width="0.94" height="1.5" fill="#f8f8f2"/>
<rect x="1144.79" y="964.0" width="4.71" height="1.5" fill="#f92672"/>
<rect x="1149.49" y="964.0" width="3.76" height="1.5" fill="#f8f8f2"/>
<rect x="1153.26" y="964.0" width="4.71" height="1.5" fill="#66d9ef"/>
<rect x="1157.96" y="964.0" width="0.94" height="1.5" fill="#f8f8f2"/>
<rect x="1158.91" y="964.0" width="5.65" height="1.5" fill="#e6db74"/>
<rect x="1165.49" y="964.0" width="8.47" height="1.5" fill="#e6db74"/>
<rect x="1173.96" y="964.0" width="4.71" height="1.5" fill="#f8f8f2"/>
<rect x="1178.67" y="964.0" width="4.71" height="1.5" fill="#f92672"/>
<rect x="1183.38" y="964.0" width="0.94" height="1.5" fill="#f8f8f2"/>
<rect x="1143.85" y="966.0" width="0.94" height="1.5" fill="#f8f8f2"/>
<rect x="1144.79" y="966.0" width="3.76" height="1.5" fill="#f92672"/>
<rect x="1149.49" y="966.0" width="5.65" height="1.5" fill="#a6e22e"/>
<rect x="1155.14" y="966.0" width="0.94" height="1.5" fill="#f8f8f2"/>
<rect x="1156.08" y="966.0" width="6.59" height="1.5" fill="#e6db74"/>
<rect x="1162.67" y="966.0" width="7.53" height="1.5" fill="#f8f8f2"/>
<rect x="1171.14" y="966.0" width="2.82" height="1.5" fill="#f8f8f2"/>
<rect x="1173.96" y="966.0" width="3.76" height="1.5" fill="#f92672"/>
<rect x="1177.73" y="966.0" width="0.94" height="1.5" fill="#f8f8f2"/>
<rect x="1141.96" y="968.0" width="1.88" height="1.5" fill="#f8f8f2"/>
<rect x="1143.85" y="968.0" width="6.59" height="1.5" fill="#f92672"/>
<rect x="1150.44" y="968.0" width="0.94" height="1.5" fill="#f8f8f2"/>
<rect x="1141.96" y="972.0" width="0.94" height="1.5" fill="#f8f8f2"/>
<rect x="1142.91" y="972.0" width="6.59" height="1.5" fill="#f92672"/>
<rect x="1150.44" y="972.0" width="2.82" height="1.5" fill="#a6e22e"/>
<rect x="1153.26" y="972.0" width="0.94" height="1.5" fill="#f8f8f2"/>
<rect x="1154.20" y="972.0" width="20.71" height="1.5" fill="#e6db74"/>
<rect x="1175.85" y="972.0" width="11.29" height="1.5" fill="#a6e22e"/>
<rect x="1187.14" y="972.0" width="0.94" height="1.5" fill="#f8f8f2"/>
<rect x="1188.08" y="972.0" width="5.65" height="1.5" fill="#e6db74"/>
<rect x="1193.73" y="972.0" width="0.94" height="1.5" fill="#f8f8f2"/>
</g>
<rect x="1269" y="35" width="7" height="934" rx="3.5" fill="#3e3f3a"/>
<rect x="1269" y="254" width="7" height="106" rx="3.5" fill="#6b6c66"/>
</svg>
<div style="position:absolute;left:0;top:29px;width:40px;height:1px;background:#22231e;z-index:2"></div><div style="position:absolute;left:214px;top:29px;width:1066px;height:1px;background:#22231e;z-index:2"></div>
<div id="tabbar">
<div id="tbt"></div>
<div id="tbl"></div><div id="tbr"></div>
<div id="tab"></div>
<div style="position:absolute;left:0;top:28px;width:38px;height:1px;background:#747570"></div><div style="position:absolute;left:216px;top:28px;width:1064px;height:1px;background:#747570"></div>
<div id="tabtitle">theme.xml</div>
<svg width="1280" height="29" style="position:absolute;left:0;top:0">
<polygon points="10,13 18,8 18,18" fill="#d2d2cf"/>
<polygon points="24,8 31.5,13 24,18" fill="#d2d2cf"/>
<path d="M193.2,11.2 L199.8,17.8 M199.8,11.2 L193.2,17.8" stroke="#a3a39e" stroke-width="1.6"/>
<path d="M1241,13 H1251 M1246,8 V18" stroke="#c3c3bf" stroke-width="1.6"/>
<polygon points="1260,9 1270,9 1265,16.5" fill="#d2d2cf"/>
</svg>
</div>
<div id="status">
<div style="position:absolute;left:0;top:0;width:1280px;height:1px;background:#1e1f1a"></div>
<div style="position:absolute;left:0;top:1px;width:1280px;height:1px;background:#d6d9e0"></div>
<svg width="30" height="23" style="position:absolute;left:0;top:0">
<rect x="11.5" y="6.5" width="13" height="11" rx="1.5" fill="none" stroke="#7a7d80" stroke-width="1.2"/>
<rect x="11.5" y="6.5" width="4.3" height="11" fill="#7a7d80"/>
</svg>
<div class="t" style="left:36.5px;transform:scaleX(0.935);transform-origin:0 0">Line 1, Column 1</div>
<div class="t" style="left:1096.5px;transform:scaleX(0.955);transform-origin:0 0">Spaces: 2</div>
<div class="t" style="left:1210.5px;transform:scaleX(0.93);transform-origin:0 0">XML</div>
</div>
</body></html>
